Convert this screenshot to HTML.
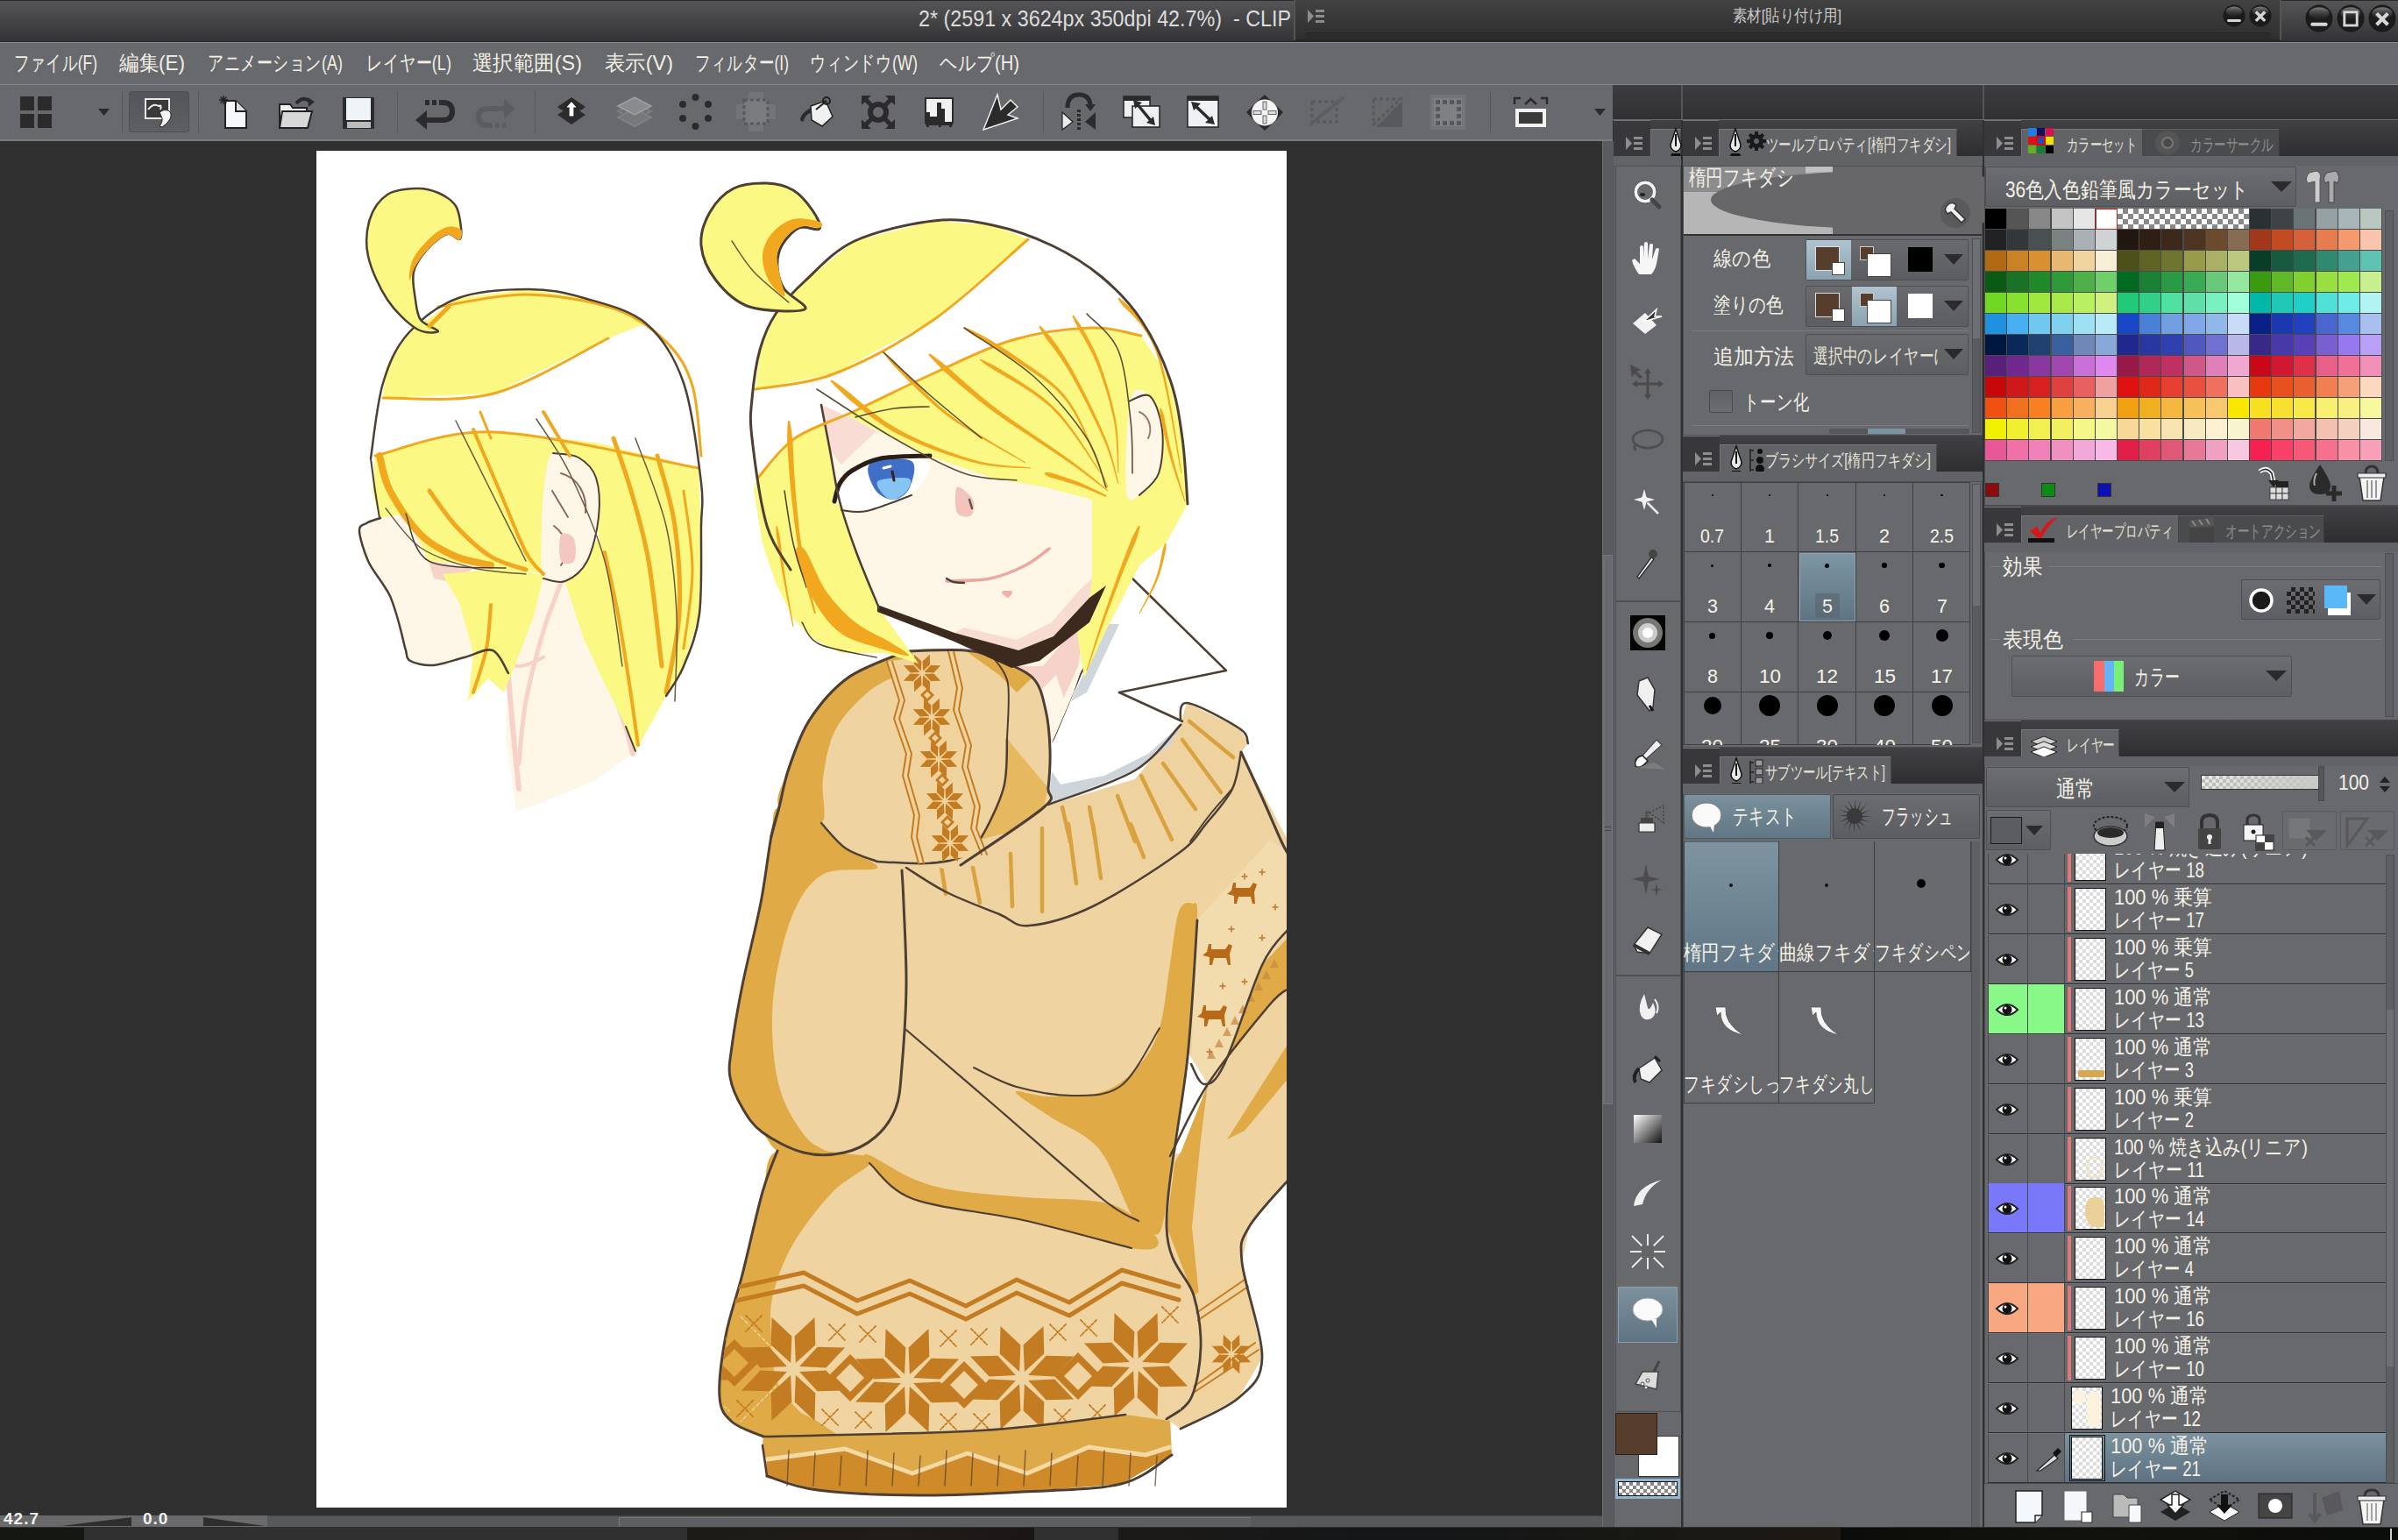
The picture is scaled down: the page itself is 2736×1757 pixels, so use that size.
<!DOCTYPE html>
<html><head><meta charset="utf-8"><style>
html,body{margin:0;padding:0;}
body{width:2736px;height:1757px;overflow:hidden;position:relative;background:#303030;font-family:"Liberation Sans", sans-serif;}
div{box-sizing:border-box;}
</style></head><body>
<div style="position:absolute;left:0px;top:0px;width:2736px;height:48px;background:linear-gradient(#555558,#333336);border-top:1px solid #2a2a2c;border-bottom:1px solid #242426;box-sizing:border-box;"></div><div class="fw" style="position:absolute;left:1048px;top:6px;width:425px;font-size:25px;line-height:30px;color:#dcdcdc;white-space:nowrap;">2* (2591 x 3624px 350dpi 42.7%)&nbsp; - CLIP</div><div style="position:absolute;left:1476px;top:0px;width:1127px;height:47px;background:linear-gradient(#424243,#2e2e2f);border-left:2px solid #555;border-right:2px solid #555;border-bottom:2px solid #262626;box-sizing:border-box;"></div><div style="position:absolute;left:1490px;top:35px;width:1100px;height:10px;background:#2b2b2c;border-top:1px solid #3a3a3a;"></div><svg style="position:absolute;left:1492px;top:10px" width="20" height="18"><path d="M0 1L7 8.5L0 16Z" fill="#8c8c8c"/><rect x="9" y="1" width="10" height="3" fill="#8c8c8c"/><rect x="9" y="7" width="10" height="3" fill="#8c8c8c"/><rect x="9" y="13" width="10" height="3" fill="#8c8c8c"/></svg><div class="fw" style="position:absolute;left:1977px;top:7px;width:124px;font-size:19px;line-height:22px;color:#c9c9c9;white-space:nowrap;">素材[貼り付け用]</div><svg style="position:absolute;left:2536px;top:5px" width="26" height="26"><defs><linearGradient id="g2549" x1="0" y1="0" x2="0" y2="1"><stop offset="0" stop-color="#8a8a8a" stop-opacity="0.9"/><stop offset="1" stop-color="#3a3a3a" stop-opacity="0.2"/></linearGradient></defs><circle cx="13" cy="13" r="12.5" fill="#1c1a1a"/><ellipse cx="13" cy="8.06" rx="9.36" ry="5.46" fill="url(#g2549)"/><rect x="5.2" y="16.900000000000002" width="15.6" height="3.12" rx="1.3" fill="#d6d6d6"/></svg><svg style="position:absolute;left:2566px;top:5px" width="26" height="26"><defs><linearGradient id="g2579" x1="0" y1="0" x2="0" y2="1"><stop offset="0" stop-color="#8a8a8a" stop-opacity="0.9"/><stop offset="1" stop-color="#3a3a3a" stop-opacity="0.2"/></linearGradient></defs><circle cx="13" cy="13" r="12.5" fill="#1c1a1a"/><ellipse cx="13" cy="8.06" rx="9.36" ry="5.46" fill="url(#g2579)"/><path d="M7.8 8.450000000000001L18.2 18.849999999999998M18.2 8.450000000000001L7.8 18.849999999999998" stroke="#d6d6d6" stroke-width="3.38"/></svg><div style="position:absolute;left:2603px;top:0px;width:133px;height:48px;background:linear-gradient(#555558,#333336);border-top:1px solid #2a2a2c;border-bottom:1px solid #242426;box-sizing:border-box;"></div><svg style="position:absolute;left:2630px;top:5px" width="32" height="32"><defs><linearGradient id="g2646" x1="0" y1="0" x2="0" y2="1"><stop offset="0" stop-color="#8a8a8a" stop-opacity="0.9"/><stop offset="1" stop-color="#3a3a3a" stop-opacity="0.2"/></linearGradient></defs><circle cx="16" cy="16" r="15.5" fill="#1c1a1a"/><ellipse cx="16" cy="9.92" rx="11.52" ry="6.72" fill="url(#g2646)"/><rect x="6.4" y="20.8" width="19.2" height="3.84" rx="1.6" fill="#d6d6d6"/></svg><svg style="position:absolute;left:2666px;top:5px" width="32" height="32"><defs><linearGradient id="g2682" x1="0" y1="0" x2="0" y2="1"><stop offset="0" stop-color="#8a8a8a" stop-opacity="0.9"/><stop offset="1" stop-color="#3a3a3a" stop-opacity="0.2"/></linearGradient></defs><circle cx="16" cy="16" r="15.5" fill="#1c1a1a"/><ellipse cx="16" cy="9.92" rx="11.52" ry="6.72" fill="url(#g2682)"/><rect x="8.8" y="8.8" width="14.4" height="15.2" fill="none" stroke="#d6d6d6" stroke-width="2.88"/></svg><svg style="position:absolute;left:2702px;top:5px" width="32" height="32"><defs><linearGradient id="g2718" x1="0" y1="0" x2="0" y2="1"><stop offset="0" stop-color="#8a8a8a" stop-opacity="0.9"/><stop offset="1" stop-color="#3a3a3a" stop-opacity="0.2"/></linearGradient></defs><circle cx="16" cy="16" r="15.5" fill="#1c1a1a"/><ellipse cx="16" cy="9.92" rx="11.52" ry="6.72" fill="url(#g2718)"/><path d="M9.6 10.4L22.4 23.2M22.4 10.4L9.6 23.2" stroke="#d6d6d6" stroke-width="4.16"/></svg><div style="position:absolute;left:0px;top:48px;width:2736px;height:1px;background:#8e8e91;"></div><div style="position:absolute;left:0px;top:49px;width:2736px;height:47px;background:#68696c;"></div><div class="fw" style="position:absolute;left:16px;top:58px;width:95px;font-size:24px;line-height:28px;color:#f2efe6;white-space:nowrap;">ファイル(F)</div><div class="fw" style="position:absolute;left:136px;top:58px;width:75px;font-size:24px;line-height:28px;color:#f2efe6;white-space:nowrap;">編集(E)</div><div class="fw" style="position:absolute;left:237px;top:58px;width:154px;font-size:24px;line-height:28px;color:#f2efe6;white-space:nowrap;">アニメーション(A)</div><div class="fw" style="position:absolute;left:418px;top:58px;width:97px;font-size:24px;line-height:28px;color:#f2efe6;white-space:nowrap;">レイヤー(L)</div><div class="fw" style="position:absolute;left:539px;top:58px;width:125px;font-size:24px;line-height:28px;color:#f2efe6;white-space:nowrap;">選択範囲(S)</div><div class="fw" style="position:absolute;left:690px;top:58px;width:78px;font-size:24px;line-height:28px;color:#f2efe6;white-space:nowrap;">表示(V)</div><div class="fw" style="position:absolute;left:793px;top:58px;width:107px;font-size:24px;line-height:28px;color:#f2efe6;white-space:nowrap;">フィルター(I)</div><div class="fw" style="position:absolute;left:924px;top:58px;width:123px;font-size:24px;line-height:28px;color:#f2efe6;white-space:nowrap;">ウィンドウ(W)</div><div class="fw" style="position:absolute;left:1072px;top:58px;width:91px;font-size:24px;line-height:28px;color:#f2efe6;white-space:nowrap;">ヘルプ(H)</div><div style="position:absolute;left:0px;top:96px;width:2736px;height:1px;background:#86868a;"></div><div style="position:absolute;left:0px;top:97px;width:1840px;height:64px;background:#68696c;border-bottom:2px solid #7a7b7e;box-sizing:border-box;"></div><svg style="position:absolute;left:23px;top:110px;overflow:visible" width="37" height="37" viewBox="0 0 37 37"><rect x="0" y="0" width="16" height="16" fill="#2b2b2c"/><rect x="20" y="0" width="16" height="16" fill="#2b2b2c"/><rect x="0" y="20" width="16" height="16" fill="#2b2b2c"/><rect x="20" y="20" width="16" height="16" fill="#2b2b2c"/></svg><svg style="position:absolute;left:112px;top:124px;overflow:visible" width="14" height="8" viewBox="0 0 14 8"><path d="M0 0H13L6.5 8Z" fill="#2b2b2c"/></svg><div style="position:absolute;left:139px;top:105px;width:1px;height:46px;background:#58595b"></div><div style="position:absolute;left:147px;top:104px;width:69px;height:47px;background:linear-gradient(#545558,#5e5f62);border:1px solid #4e4f52;border-radius:3px"></div><svg style="position:absolute;left:165px;top:111px;overflow:visible" width="36" height="36" viewBox="0 0 36 36"><rect x="1" y="2" width="27" height="22" fill="#3a3a3a" stroke="#e8e8e8" stroke-width="2"/><path d="M4 14Q10 6 16 10Q20 8 18 14" stroke="#eee" stroke-width="2" fill="none"/><path d="M17 17Q22 13 27 15Q32 18 29 25Q25 31 20 34L17 33Q21 28 20 24Z" fill="#f4f4f4" stroke="#222" stroke-width="1"/></svg><div style="position:absolute;left:226px;top:105px;width:1px;height:46px;background:#58595b"></div><svg style="position:absolute;left:250px;top:109px;overflow:visible" width="32" height="38" viewBox="0 0 32 38"><path d="M7 6H19L31 18V37H7Z" fill="#f6f8fa" stroke="#222" stroke-width="2"/><path d="M19 6V18H31" fill="#ddd" stroke="#222" stroke-width="2"/><path d="M5 0V10M0 5H10M1.5 1.5L8.5 8.5M8.5 1.5L1.5 8.5" stroke="#222" stroke-width="1.4"/></svg><svg style="position:absolute;left:318px;top:110px;overflow:visible" width="42" height="38" viewBox="0 0 42 38"><path d="M1 9H13L16 13H32V36H1Z" fill="#f0f0f0" stroke="#222" stroke-width="2"/><path d="M4 17H38L33 36H1Z" fill="#d8d8d8" stroke="#222" stroke-width="2"/><path d="M20 8Q28 -1 36 6" stroke="#2b2b2c" stroke-width="4" fill="none"/><path d="M33 1L41 6L34 12Z" fill="#2b2b2c"/></svg><svg style="position:absolute;left:390px;top:110px;overflow:visible" width="38" height="38" viewBox="0 0 38 38"><rect x="1" y="1" width="36" height="36" fill="#2b2b2c"/><rect x="5" y="2" width="28" height="25" fill="#eef4f8"/><rect x="6" y="29" width="27" height="7" fill="#bbb"/></svg><div style="position:absolute;left:453px;top:105px;width:1px;height:46px;background:#58595b"></div><svg style="position:absolute;left:474px;top:113px;overflow:visible" width="44" height="36" viewBox="0 0 44 36"><path d="M11 4H16M19 4H24M27 4H31" stroke="#2b2b2c" stroke-width="6"/><path d="M31 4Q42 4 42 14Q42 24 31 24H11" stroke="#2b2b2c" stroke-width="6" fill="none"/><path d="M0 24L13 13V35Z" fill="#2b2b2c"/></svg><svg style="position:absolute;left:544px;top:113px;overflow:visible" width="44" height="36" viewBox="0 0 44 36"><path d="M13 30H18M21 30H26M29 30H33" stroke="#5b5c5f" stroke-width="6"/><path d="M33 11H13Q2 11 2 20Q2 30 13 30" stroke="#5b5c5f" stroke-width="6" fill="none"/><path d="M44 11L31 0V22Z" fill="#5b5c5f"/></svg><div style="position:absolute;left:610px;top:105px;width:1px;height:46px;background:#58595b"></div><svg style="position:absolute;left:636px;top:111px;overflow:visible" width="32" height="31" viewBox="0 0 32 31"><path d="M0 11L16 0L32 11L16 22Z" fill="#2b2b2c"/><path d="M0 20L16 9L32 20L16 31Z" fill="#2b2b2c"/><path d="M16 4L23 12H19V22H13V12H9Z" fill="#fff" stroke="#222" stroke-width="1.2"/></svg><svg style="position:absolute;left:702px;top:111px;overflow:visible" width="43" height="37" viewBox="0 0 43 37"><path d="M3 16L22 6L41 16L22 26Z" fill="#6f7073" stroke="#7d7e80" stroke-width="2"/><path d="M3 23L22 13L41 23L22 33Z" fill="#77787b" stroke="#808183" stroke-width="2"/><path d="M3 10L22 0L41 10L22 20Z" fill="#8a8b8e" stroke="#a0a0a2" stroke-width="1.5"/></svg><svg style="position:absolute;left:775px;top:107px;overflow:visible" width="37" height="41" viewBox="0 0 37 41"><circle cx="18.5" cy="4" r="4" fill="#2b2b2c"/><circle cx="18.5" cy="37" r="4" fill="#2b2b2c"/><circle cx="4" cy="12" r="4" fill="#2b2b2c"/><circle cx="33" cy="12" r="4" fill="#2b2b2c"/><circle cx="4" cy="28" r="4" fill="#2b2b2c"/><circle cx="33" cy="28" r="4" fill="#2b2b2c"/></svg><svg style="position:absolute;left:840px;top:105px;overflow:visible" width="45" height="45" viewBox="0 0 45 45"><path d="M14 0H31V14H45V31H31V45H14V31H0V14H14Z" fill="#737477"/><rect x="9" y="9" width="27" height="27" fill="#7a7b7e" stroke="#58595b" stroke-width="3" stroke-dasharray="4 3"/></svg><svg style="position:absolute;left:912px;top:111px;overflow:visible" width="39" height="33" viewBox="0 0 39 33"><path d="M13 10L30 4L38 22L26 33L14 26Z" fill="#f0f0f0" stroke="#222" stroke-width="1.5"/><path d="M13 12Q2 18 1 25Q2 29 5 27Q6 20 14 17Z" fill="#2b2b2c"/><circle cx="31" cy="4" r="4" fill="none" stroke="#222" stroke-width="2"/><path d="M19 14L30 5" stroke="#222" stroke-width="2"/></svg><svg style="position:absolute;left:983px;top:109px;overflow:visible" width="38" height="38" viewBox="0 0 38 38"><circle cx="19" cy="19" r="9" fill="none" stroke="#2b2b2c" stroke-width="6"/><path d="M2 2L14 14M36 2L24 14M2 36L14 24M36 36L24 24" stroke="#2b2b2c" stroke-width="5"/><path d="M0 0H11L0 11Z M38 0H27L38 11Z M0 38H11L0 27Z M38 38H27L38 27Z" fill="#2b2b2c"/></svg><svg style="position:absolute;left:1055px;top:111px;overflow:visible" width="33" height="34" viewBox="0 0 33 34"><rect x="1" y="1" width="31" height="28" fill="#f2f2f2" stroke="#2b2b2c" stroke-width="2"/><path d="M2 29V17H6V22H14V6H19V13H23V29Z" fill="#2b2b2c"/><path d="M24 29V1H32V29Z" fill="none"/><rect x="1" y="29" width="31" height="3" fill="#2b2b2c"/><rect x="2" y="31" width="3" height="3" fill="#2b2b2c"/><rect x="16" y="31" width="3" height="3" fill="#2b2b2c"/><rect x="28" y="31" width="3" height="3" fill="#2b2b2c"/></svg><svg style="position:absolute;left:1121px;top:108px;overflow:visible" width="41" height="40" viewBox="0 0 41 40"><path d="M1 40L17 0L21 17L32 6L40 14L29 23L40 27Z" fill="#2b2b2c" stroke="#eee" stroke-width="1.5"/></svg><div style="position:absolute;left:1190px;top:105px;width:1px;height:46px;background:#58595b"></div><svg style="position:absolute;left:1212px;top:107px;overflow:visible" width="39" height="41" viewBox="0 0 39 41"><path d="M6 16Q6 1 19 1Q31 1 32 13" stroke="#2b2b2c" stroke-width="5" fill="none"/><path d="M26 12H38L32 20Z" fill="#2b2b2c"/><path d="M0 21L12 32L0 41Z" fill="#e8ecee" stroke="#222" stroke-width="1.2"/><path d="M38 21L26 32L38 41Z" fill="#2b2b2c"/><path d="M19 18V41" stroke="#2b2b2c" stroke-width="4" stroke-dasharray="3 2"/></svg><svg style="position:absolute;left:1281px;top:109px;overflow:visible" width="43" height="37" viewBox="0 0 43 37"><rect x="1" y="1" width="30" height="24" fill="#eef1f3" stroke="#222" stroke-width="1.5"/><rect x="1" y="1" width="30" height="5" fill="#2b2b2c"/><rect x="11" y="12" width="31" height="24" fill="#eef1f3" stroke="#222" stroke-width="1.5"/><path d="M15 8L34 31" stroke="#2b2b2c" stroke-width="3.5"/><path d="M12 5L22 8L14 15Z M37 34L27 31L35 24Z" fill="#2b2b2c"/></svg><svg style="position:absolute;left:1354px;top:109px;overflow:visible" width="37" height="37" viewBox="0 0 37 37"><rect x="1" y="1" width="35" height="35" fill="#eef2f4" stroke="#222" stroke-width="1.5"/><rect x="1" y="1" width="35" height="5" fill="#2b2b2c"/><path d="M8 10L29 30" stroke="#2b2b2c" stroke-width="3.5"/><path d="M5 7L16 9L8 17Z M32 33L21 31L29 23Z" fill="#2b2b2c"/></svg><svg style="position:absolute;left:1422px;top:108px;overflow:visible" width="42" height="41" viewBox="0 0 42 41"><path d="M21 0L29 8L42 20L34 29L21 41L8 29L0 20L12 8Z" fill="#2b2b2c"/><circle cx="21" cy="20.5" r="15" fill="#f6f6f6"/><rect x="19" y="8" width="4" height="9" fill="#ddd" stroke="#666" stroke-width="1"/><rect x="19" y="24" width="4" height="9" fill="#ddd" stroke="#666" stroke-width="1"/><rect x="8" y="18.5" width="9" height="4" fill="#ddd" stroke="#666" stroke-width="1"/><rect x="25" y="18.5" width="9" height="4" fill="#ddd" stroke="#666" stroke-width="1"/></svg><svg style="position:absolute;left:1493px;top:111px;overflow:visible" width="40" height="33" viewBox="0 0 40 33"><rect x="4" y="5" width="28" height="23" fill="none" stroke="#58595b" stroke-width="3" stroke-dasharray="4 3"/><path d="M1 32L40 0" stroke="#5d5e61" stroke-width="4"/></svg><svg style="position:absolute;left:1565px;top:111px;overflow:visible" width="35" height="34" viewBox="0 0 35 34"><path d="M35 4V34H5Z" fill="#58595b"/><path d="M2 2H33L2 31Z" fill="none" stroke="#58595b" stroke-width="3" stroke-dasharray="4 3"/></svg><svg style="position:absolute;left:1632px;top:108px;overflow:visible" width="40" height="40" viewBox="0 0 40 40"><rect x="0" y="0" width="40" height="40" fill="#747578"/><rect x="4" y="4" width="32" height="32" fill="#7f8083"/><g fill="#58595b"><rect x="6" y="6" width="5" height="5"/><rect x="14" y="6" width="5" height="5"/><rect x="22" y="6" width="5" height="5"/><rect x="30" y="6" width="5" height="5"/><rect x="6" y="14" width="5" height="5"/><rect x="30" y="14" width="5" height="5"/><rect x="6" y="22" width="5" height="5"/><rect x="30" y="22" width="5" height="5"/><rect x="6" y="30" width="5" height="5"/><rect x="14" y="30" width="5" height="5"/><rect x="22" y="30" width="5" height="5"/><rect x="30" y="30" width="5" height="5"/></g></svg><div style="position:absolute;left:1700px;top:105px;width:1px;height:46px;background:#58595b"></div><svg style="position:absolute;left:1727px;top:111px;overflow:visible" width="39" height="35" viewBox="0 0 39 35"><path d="M1 8V1H8M31 1H38V8M13 8L19.5 2L26 8" stroke="#2b2b2c" stroke-width="2.5" fill="none"/><rect x="2" y="13" width="35" height="21" fill="#f2f2f2"/><rect x="6" y="17" width="27" height="13" fill="#3a3a3a"/></svg><svg style="position:absolute;left:1819px;top:124px;overflow:visible" width="14" height="8" viewBox="0 0 14 8"><path d="M0 0H13L6.5 8Z" fill="#2b2b2c"/></svg><div style="position:absolute;left:1840px;top:97px;width:896px;height:40px;background:linear-gradient(#3d3d3f,#303032);"></div><div style="position:absolute;left:1918px;top:97px;width:2px;height:40px;background:#555;"></div><div style="position:absolute;left:2262px;top:97px;width:2px;height:40px;background:#555;"></div><div style="position:absolute;left:1840px;top:136px;width:896px;height:1px;background:#6a6a6c;"></div><div style="position:absolute;left:0px;top:161px;width:1828px;height:1568px;background:#303030;"></div><div style="position:absolute;left:361px;top:172px;width:1107px;height:1548px;background:#ffffff;"></div><svg style="position:absolute;left:0;top:0" width="2736" height="1757" viewBox="0 0 2736 1757"><defs><clipPath id="cv"><rect x="361" y="172" width="1107" height="1548"/></clipPath></defs><g clip-path="url(#cv)"><path d="M1291.0,659.0 L1399.0,765.0 L1277.0,790.0 L1233.0,769.0 L1200.0,848.0Z" fill="#ffffff" stroke="none" stroke-width="0" stroke-linecap="round" stroke-linejoin="round" /><path d="M1291.0,659.0 L1399.0,765.0 L1277.0,790.0" fill="none" stroke="#4e3f35" stroke-width="2.5" stroke-linecap="round" stroke-linejoin="round" /><path d="M1291.0,659.0 L1233.0,769.0 L1200.0,848.0" fill="none" stroke="#4e3f35" stroke-width="2" stroke-linecap="round" stroke-linejoin="round" /><path d="M1262.0,712.0 L1277.0,712.0 L1240.0,790.0 L1222.0,800.0Z" fill="#cfd6dc" stroke="none" stroke-width="0" stroke-linecap="round" stroke-linejoin="round" /><path d="M1052.0,743.0 L1157.0,757.0 L1204.0,730.0 L1243.0,676.0 L1262.0,700.0 L1240.0,745.0 L1225.0,790.0 L1200.0,848.0 L1198.0,855.0 L1193.0,810.0 L1178.0,773.0 L1134.0,751.0Z" fill="#fef6e7" stroke="none" stroke-width="0" stroke-linecap="round" stroke-linejoin="round" /><path d="M1160.0,760.0 L1190.0,760.0 L1215.0,730.0 L1240.0,700.0 L1230.0,760.0 L1212.0,800.0 L1200.0,848.0 L1185.0,800.0Z" fill="#f7d2c8" stroke="none" stroke-width="0" stroke-linecap="round" stroke-linejoin="round" /><path d="M1185.0,790.0 L1205.0,770.0 L1215.0,800.0 L1200.0,845.0Z" fill="#fef6e7" stroke="none" stroke-width="0" stroke-linecap="round" stroke-linejoin="round" /><path d="M1366.0,1050.0 L1449.0,959.0 L1470.0,972.0 L1470.0,1346.0 L1425.0,1400.0 L1417.0,1440.0 L1440.0,1549.0 L1413.0,1595.0 L1347.0,1630.0 L1331.0,1619.0 L1359.0,1595.0 L1370.0,1537.0 L1362.0,1478.0 L1331.0,1400.0 L1355.0,1206.0Z" fill="#efd4a1" stroke="none" stroke-width="0" stroke-linecap="round" stroke-linejoin="round" /><path d="M1347.0,1315.0 L1378.0,1237.0 L1370.0,1300.0 L1360.0,1400.0 L1368.0,1478.0 L1352.0,1480.0 L1331.0,1400.0 L1338.0,1330.0Z" fill="#e0aa46" stroke="none" stroke-width="0" stroke-linecap="round" stroke-linejoin="round" /><path d="M1397.0,1214.0 L1440.0,1101.0 L1470.0,1069.0 L1470.0,1128.0 L1448.0,1147.0 L1378.0,1237.0Z" fill="#e0aa46" stroke="none" stroke-width="0" stroke-linecap="round" stroke-linejoin="round" /><path d="M1470.0,1190.0 L1470.0,1230.0 L1420.0,1290.0 L1400.0,1300.0Z" fill="#e0aa46" stroke="none" stroke-width="0" stroke-linecap="round" stroke-linejoin="round" /><path d="M1366.0,1050.0 L1449.0,959.0 L1470.0,972.0 L1470.0,1060.0 L1440.0,1101.0 L1397.0,1214.0 L1374.0,1237.0 L1359.0,1214.0Z" fill="#f2dcae" stroke="none" stroke-width="0" stroke-linecap="round" stroke-linejoin="round" /><path d="M1377.0,1208.0 L1382.0,1198.0 L1387.0,1208.0Z" fill="#c98a45" stroke="none" stroke-width="0" stroke-linecap="round" stroke-linejoin="round" opacity="0.75"/><path d="M1386.0,1195.0 L1391.0,1185.0 L1396.0,1195.0Z" fill="#c98a45" stroke="none" stroke-width="0" stroke-linecap="round" stroke-linejoin="round" opacity="0.75"/><path d="M1395.0,1182.0 L1400.0,1172.0 L1405.0,1182.0Z" fill="#c98a45" stroke="none" stroke-width="0" stroke-linecap="round" stroke-linejoin="round" opacity="0.75"/><path d="M1404.0,1169.0 L1409.0,1159.0 L1414.0,1169.0Z" fill="#c98a45" stroke="none" stroke-width="0" stroke-linecap="round" stroke-linejoin="round" opacity="0.75"/><path d="M1413.0,1156.0 L1418.0,1146.0 L1423.0,1156.0Z" fill="#c98a45" stroke="none" stroke-width="0" stroke-linecap="round" stroke-linejoin="round" opacity="0.75"/><path d="M1422.0,1143.0 L1427.0,1133.0 L1432.0,1143.0Z" fill="#c98a45" stroke="none" stroke-width="0" stroke-linecap="round" stroke-linejoin="round" opacity="0.75"/><path d="M1431.0,1130.0 L1436.0,1120.0 L1441.0,1130.0Z" fill="#c98a45" stroke="none" stroke-width="0" stroke-linecap="round" stroke-linejoin="round" opacity="0.75"/><path d="M1440.0,1117.0 L1445.0,1107.0 L1450.0,1117.0Z" fill="#c98a45" stroke="none" stroke-width="0" stroke-linecap="round" stroke-linejoin="round" opacity="0.75"/><path d="M1449.0,1104.0 L1454.0,1094.0 L1459.0,1104.0Z" fill="#c98a45" stroke="none" stroke-width="0" stroke-linecap="round" stroke-linejoin="round" opacity="0.75"/><path d="M1400,1020 l5,-4 l2,-9 l3,0 l0,6 l16,0 l4,-6 l4,2 l-3,9 l1,13 l-3,0 l-2,-8 l-14,0 l-2,8 l-3,0 l0,-9 Z" fill="#b86a18" stroke="none" stroke-width="0" stroke-linecap="round" stroke-linejoin="round" /><path d="M1372,1090 l5,-4 l2,-9 l3,0 l0,6 l16,0 l4,-6 l4,2 l-3,9 l1,13 l-3,0 l-2,-8 l-14,0 l-2,8 l-3,0 l0,-9 Z" fill="#b86a18" stroke="none" stroke-width="0" stroke-linecap="round" stroke-linejoin="round" /><path d="M1366,1160 l5,-4 l2,-9 l3,0 l0,6 l16,0 l4,-6 l4,2 l-3,9 l1,13 l-3,0 l-2,-8 l-14,0 l-2,8 l-3,0 l0,-9 Z" fill="#b86a18" stroke="none" stroke-width="0" stroke-linecap="round" stroke-linejoin="round" /><path d="M1437,995 h6 M1440,992 v6" fill="none" stroke="#c07830" stroke-width="1.6" stroke-linecap="round" stroke-linejoin="round" /><path d="M1452,1035 h6 M1455,1032 v6" fill="none" stroke="#c07830" stroke-width="1.6" stroke-linecap="round" stroke-linejoin="round" /><path d="M1402,1060 h6 M1405,1057 v6" fill="none" stroke="#c07830" stroke-width="1.6" stroke-linecap="round" stroke-linejoin="round" /><path d="M1437,1070 h6 M1440,1067 v6" fill="none" stroke="#c07830" stroke-width="1.6" stroke-linecap="round" stroke-linejoin="round" /><path d="M1392,1125 h6 M1395,1122 v6" fill="none" stroke="#c07830" stroke-width="1.6" stroke-linecap="round" stroke-linejoin="round" /><path d="M1417,1120 h6 M1420,1117 v6" fill="none" stroke="#c07830" stroke-width="1.6" stroke-linecap="round" stroke-linejoin="round" /><path d="M1377,1200 h6 M1380,1197 v6" fill="none" stroke="#c07830" stroke-width="1.6" stroke-linecap="round" stroke-linejoin="round" /><path d="M1417,1000 h6 M1420,997 v6" fill="none" stroke="#c07830" stroke-width="1.6" stroke-linecap="round" stroke-linejoin="round" /><path d="M1355.0,1200.0 L1378.0,1237.0 L1347.0,1315.0 L1335.0,1319.0 L1347.0,1245.0Z" fill="#ffffff" stroke="none" stroke-width="0" stroke-linecap="round" stroke-linejoin="round" /><path d="M1362.0,1478.0 L1417.0,1440.0 L1440.0,1549.0 L1413.0,1595.0 L1359.0,1595.0 L1370.0,1537.0Z" fill="#efd29c" stroke="none" stroke-width="0" stroke-linecap="round" stroke-linejoin="round" /><path d="M1362,1500 L1420,1460 M1364,1508 L1424,1468 M1360,1590 L1436,1540 M1362,1582 L1432,1532" fill="none" stroke="#c47c22" stroke-width="2" stroke-linecap="round" stroke-linejoin="round" /><path d="M1034.0,743.0 L968.0,773.0 L924.0,821.0 L900.0,877.0 L889.0,921.0 L880.0,954.0 L868.0,1030.0 L847.0,1124.0 L835.0,1194.0 L833.0,1229.0 L847.0,1264.0 L870.0,1292.0 L887.0,1313.0 L870.0,1360.0 L847.0,1454.0 L828.0,1524.0 L821.0,1594.0 L835.0,1622.0 L871.0,1639.0 L870.0,1649.0 L875.0,1684.0 L933.0,1700.0 L1050.0,1706.0 L1167.0,1702.0 L1279.0,1693.0 L1337.0,1660.0 L1335.0,1621.0 L1359.0,1595.0 L1370.0,1537.0 L1362.0,1478.0 L1331.0,1400.0 L1355.0,1206.0 L1366.0,1050.0 L1449.0,959.0 L1470.0,972.0 L1470.0,960.0 L1416.0,858.0 L1424.0,848.0 L1414.0,831.0 L1354.0,802.0 L1347.0,827.0 L1295.0,889.0 L1192.0,920.0 L1196.0,899.0 L1198.0,855.0 L1193.0,810.0 L1178.0,773.0 L1134.0,751.0 L1101.0,742.0Z" fill="#efd4a1" stroke="none" stroke-width="0" stroke-linecap="round" stroke-linejoin="round" /><path d="M889.0,921.0 C879.5,923.3 883.5,935.8 880.0,954.0 C876.5,972.2 873.5,1001.7 868.0,1030.0 C862.5,1058.3 852.5,1096.7 847.0,1124.0 C841.5,1151.3 837.3,1176.5 835.0,1194.0 C832.7,1211.5 831.0,1217.3 833.0,1229.0 C835.0,1240.7 840.8,1253.5 847.0,1264.0 C853.2,1274.5 863.3,1283.8 870.0,1292.0 C876.7,1300.2 879.2,1308.7 887.0,1313.0 C894.8,1317.3 906.5,1317.2 917.0,1318.0 C927.5,1318.8 949.3,1321.2 950.0,1318.0 C950.7,1314.8 930.5,1310.0 921.0,1299.0 C911.5,1288.0 899.5,1269.5 893.0,1252.0 C886.5,1234.5 883.5,1215.3 882.0,1194.0 C880.5,1172.7 880.2,1149.3 884.0,1124.0 C887.8,1098.7 895.7,1063.2 905.0,1042.0 C914.3,1020.8 924.0,1005.7 940.0,997.0 C956.0,988.3 997.7,995.3 1001.0,990.0 C1004.3,984.7 970.7,973.3 960.0,965.0 C949.3,956.7 948.8,947.3 937.0,940.0 C925.2,932.7 898.5,918.7 889.0,921.0Z" fill="#e0aa46" stroke="none" stroke-width="0" stroke-linecap="round" stroke-linejoin="round" /><path d="M887.0,1313.0 C871.5,1320.3 876.7,1336.5 870.0,1360.0 C863.3,1383.5 854.0,1426.7 847.0,1454.0 C840.0,1481.3 832.3,1500.7 828.0,1524.0 C823.7,1547.3 819.8,1577.7 821.0,1594.0 C822.2,1610.3 826.7,1614.5 835.0,1622.0 C843.3,1629.5 854.3,1636.0 871.0,1639.0 C887.7,1642.0 932.0,1649.5 935.0,1640.0 C938.0,1630.5 898.2,1601.3 889.0,1582.0 C879.8,1562.7 881.2,1541.5 880.0,1524.0 C878.8,1506.5 877.8,1494.5 882.0,1477.0 C886.2,1459.5 893.7,1438.5 905.0,1419.0 C916.3,1399.5 935.0,1375.7 950.0,1360.0 C965.0,1344.3 992.8,1332.3 995.0,1325.0 C997.2,1317.7 981.0,1318.0 963.0,1316.0 C945.0,1314.0 902.5,1305.7 887.0,1313.0Z" fill="#e0aa46" stroke="none" stroke-width="0" stroke-linecap="round" stroke-linejoin="round" /><path d="M1159.0,1246.0 C1159.0,1242.2 1181.2,1251.2 1198.0,1251.0 C1214.8,1250.8 1243.0,1251.0 1260.0,1245.0 C1277.0,1239.0 1289.5,1227.0 1300.0,1215.0 C1310.5,1203.0 1317.2,1192.2 1323.0,1173.0 C1328.8,1153.8 1331.3,1122.2 1335.0,1100.0 C1338.7,1077.8 1340.8,1051.5 1345.0,1040.0 C1349.2,1028.5 1356.5,1029.3 1360.0,1031.0 C1363.5,1032.7 1366.8,1020.8 1366.0,1050.0 C1365.2,1079.2 1359.7,1162.5 1355.0,1206.0 C1350.3,1249.5 1342.8,1278.8 1338.0,1311.0 C1333.2,1343.2 1330.7,1383.3 1326.0,1399.0 C1321.3,1414.7 1315.8,1407.2 1310.0,1405.0 C1304.2,1402.8 1300.3,1401.7 1291.0,1386.0 C1281.7,1370.3 1269.5,1329.7 1254.0,1311.0 C1238.5,1292.3 1213.8,1284.8 1198.0,1274.0 C1182.2,1263.2 1159.0,1249.8 1159.0,1246.0Z" fill="#e0aa46" stroke="none" stroke-width="0" stroke-linecap="round" stroke-linejoin="round" /><path d="M992.0,1318.0 C1000.3,1321.0 1025.8,1338.3 1042.0,1345.0 C1058.2,1351.7 1067.7,1354.5 1089.0,1358.0 C1110.3,1361.5 1142.5,1363.8 1170.0,1366.0 C1197.5,1368.2 1233.8,1367.7 1254.0,1371.0 C1274.2,1374.3 1279.7,1378.3 1291.0,1386.0 C1302.3,1393.7 1322.0,1410.7 1322.0,1417.0 C1322.0,1423.3 1316.8,1428.2 1291.0,1424.0 C1265.2,1419.8 1208.5,1401.3 1167.0,1392.0 C1125.5,1382.7 1071.2,1378.8 1042.0,1368.0 C1012.8,1357.2 1000.3,1335.3 992.0,1327.0 C983.7,1318.7 983.7,1315.0 992.0,1318.0Z" fill="#e0aa46" stroke="none" stroke-width="0" stroke-linecap="round" stroke-linejoin="round" /><path d="M828.0,1560.0 L840.0,1600.0 L871.0,1639.0 L960.0,1640.0 L930.0,1620.0 L890.0,1600.0 L860.0,1560.0Z" fill="#e0aa46" stroke="none" stroke-width="0" stroke-linecap="round" stroke-linejoin="round" /><path d="M1034.0,743.0 C1023.0,748.0 986.3,760.0 968.0,773.0 C949.7,786.0 935.3,803.7 924.0,821.0 C912.7,838.3 905.8,860.3 900.0,877.0 C894.2,893.7 892.3,908.2 889.0,921.0 C885.7,933.8 883.5,935.8 880.0,954.0 C876.5,972.2 873.5,1001.7 868.0,1030.0 C862.5,1058.3 852.5,1096.7 847.0,1124.0 C841.5,1151.3 837.3,1176.5 835.0,1194.0 C832.7,1211.5 831.0,1217.3 833.0,1229.0 C835.0,1240.7 840.8,1253.5 847.0,1264.0 C853.2,1274.5 858.3,1283.5 870.0,1292.0 C881.7,1300.5 901.5,1311.2 917.0,1315.0 C932.5,1318.8 949.3,1318.0 963.0,1315.0 C976.7,1312.0 989.2,1305.5 999.0,1297.0 C1008.8,1288.5 1017.0,1277.3 1022.0,1264.0 C1027.0,1250.7 1027.0,1240.3 1029.0,1217.0 C1031.0,1193.7 1033.7,1155.2 1034.0,1124.0 C1034.3,1092.8 1031.8,1051.8 1031.0,1030.0 C1030.2,1008.2 1029.3,999.2 1029.0,993.0" fill="none" stroke="#4e3f35" stroke-width="3" stroke-linecap="round" stroke-linejoin="round" /><path d="M887.0,1313.0 C884.2,1320.8 876.7,1336.5 870.0,1360.0 C863.3,1383.5 854.0,1426.7 847.0,1454.0 C840.0,1481.3 832.3,1500.7 828.0,1524.0 C823.7,1547.3 819.8,1577.7 821.0,1594.0 C822.2,1610.3 826.7,1614.5 835.0,1622.0 C843.3,1629.5 865.0,1636.2 871.0,1639.0" fill="none" stroke="#4e3f35" stroke-width="3" stroke-linecap="round" stroke-linejoin="round" /><path d="M1034.0,1175.0 C1051.7,1190.2 1102.7,1233.8 1140.0,1266.0 C1177.3,1298.2 1231.5,1346.8 1258.0,1368.0 C1284.5,1389.2 1292.2,1388.8 1299.0,1393.0" fill="none" stroke="#4e3f35" stroke-width="2.2" stroke-linecap="round" stroke-linejoin="round" /><path d="M1111.0,1218.0 C1119.2,1221.7 1140.8,1234.7 1160.0,1240.0 C1179.2,1245.3 1206.0,1250.3 1226.0,1250.0 C1246.0,1249.7 1263.8,1250.8 1280.0,1238.0 C1296.2,1225.2 1315.8,1183.8 1323.0,1173.0" fill="none" stroke="#4e3f35" stroke-width="2" stroke-linecap="round" stroke-linejoin="round" /><path d="M992.0,1327.0 C1000.3,1333.8 1012.8,1357.2 1042.0,1368.0 C1071.2,1378.8 1125.5,1382.7 1167.0,1392.0 C1208.5,1401.3 1270.3,1418.7 1291.0,1424.0" fill="none" stroke="#4e3f35" stroke-width="2.2" stroke-linecap="round" stroke-linejoin="round" /><path d="M1366.0,1050.0 C1364.2,1076.0 1360.8,1147.7 1355.0,1206.0 C1349.2,1264.3 1329.8,1354.7 1331.0,1400.0 C1332.2,1445.3 1355.5,1455.2 1362.0,1478.0 C1368.5,1500.8 1370.5,1517.5 1370.0,1537.0 C1369.5,1556.5 1365.5,1581.3 1359.0,1595.0 C1352.5,1608.7 1335.7,1615.0 1331.0,1619.0" fill="none" stroke="#4e3f35" stroke-width="2.8" stroke-linecap="round" stroke-linejoin="round" /><path d="M1359.0,1214.0 C1361.5,1217.8 1367.7,1237.0 1374.0,1237.0 C1380.3,1237.0 1386.0,1236.7 1397.0,1214.0 C1408.0,1191.3 1427.8,1126.7 1440.0,1101.0 C1452.2,1075.3 1465.0,1066.8 1470.0,1060.0" fill="none" stroke="#4e3f35" stroke-width="2.5" stroke-linecap="round" stroke-linejoin="round" /><path d="M1470.0,1128.0 C1466.3,1131.2 1463.3,1128.8 1448.0,1147.0 C1432.7,1165.2 1396.8,1208.3 1378.0,1237.0 C1359.2,1265.7 1342.2,1305.3 1335.0,1319.0" fill="none" stroke="#4e3f35" stroke-width="2.5" stroke-linecap="round" stroke-linejoin="round" /><path d="M1470.0,1346.0 C1462.5,1355.0 1433.8,1384.3 1425.0,1400.0 C1416.2,1415.7 1414.5,1415.2 1417.0,1440.0 C1419.5,1464.8 1440.7,1523.2 1440.0,1549.0 C1439.3,1574.8 1428.5,1581.5 1413.0,1595.0 C1397.5,1608.5 1358.0,1624.2 1347.0,1630.0" fill="none" stroke="#4e3f35" stroke-width="2.8" stroke-linecap="round" stroke-linejoin="round" /><path d="M1407.7,1546.1 L1415.4,1554.5 L1427.2,1554.2 L1419.0,1545.6Z M1406.1,1547.7 L1405.6,1559.0 L1414.2,1567.2 L1414.5,1555.4Z M1403.9,1547.7 L1395.5,1555.4 L1395.8,1567.2 L1404.4,1559.0Z M1402.3,1546.1 L1391.0,1545.6 L1382.8,1554.2 L1394.6,1554.5Z M1402.3,1543.9 L1394.6,1535.5 L1382.8,1535.8 L1391.0,1544.4Z M1403.9,1542.3 L1404.4,1531.0 L1395.8,1522.8 L1395.5,1534.6Z M1406.1,1542.3 L1414.5,1534.6 L1414.2,1522.8 L1405.6,1531.0Z M1407.7,1543.9 L1419.0,1544.4 L1427.2,1535.8 L1415.4,1535.5Z" fill="#c47c22" stroke="none" stroke-width="0" stroke-linecap="round" stroke-linejoin="round" /><clipPath id="bodyclip"><path d="M1034.0,743.0 L968.0,773.0 L924.0,821.0 L900.0,877.0 L889.0,921.0 L880.0,954.0 L868.0,1030.0 L847.0,1124.0 L835.0,1194.0 L833.0,1229.0 L847.0,1264.0 L870.0,1292.0 L887.0,1313.0 L870.0,1360.0 L847.0,1454.0 L828.0,1524.0 L821.0,1594.0 L835.0,1622.0 L871.0,1639.0 L870.0,1649.0 L875.0,1684.0 L933.0,1700.0 L1050.0,1706.0 L1167.0,1702.0 L1279.0,1693.0 L1337.0,1660.0 L1335.0,1621.0 L1359.0,1595.0 L1370.0,1537.0 L1362.0,1478.0 L1331.0,1400.0 L1355.0,1206.0 L1366.0,1050.0 L1449.0,959.0 L1470.0,972.0 L1470.0,960.0 L1416.0,858.0 L1424.0,848.0 L1414.0,831.0 L1354.0,802.0 L1347.0,827.0 L1295.0,889.0 L1192.0,920.0 L1196.0,899.0 L1198.0,855.0 L1193.0,810.0 L1178.0,773.0 L1134.0,751.0 L1101.0,742.0Z"/></clipPath><g clip-path="url(#bodyclip)"><path d="M800.0,1480.0 L844.0,1468.0 L917.0,1452.0 L978.0,1484.0 L1038.0,1461.0 L1102.0,1490.0 L1160.0,1460.0 L1220.0,1486.0 L1280.0,1449.0 L1345.0,1468.0" fill="none" stroke="#c47c22" stroke-width="5" stroke-linecap="round" stroke-linejoin="round" /><path d="M800.0,1495.0 L844.0,1483.0 L917.0,1467.0 L978.0,1499.0 L1038.0,1476.0 L1102.0,1505.0 L1160.0,1475.0 L1220.0,1501.0 L1280.0,1464.0 L1345.0,1483.0" fill="none" stroke="#c47c22" stroke-width="5" stroke-linecap="round" stroke-linejoin="round" /><path d="M779.1,1552.9 L799.6,1575.3 L831.1,1574.5 L809.4,1551.6Z M774.9,1557.1 L773.6,1587.4 L796.5,1609.1 L797.3,1577.6Z M769.1,1557.1 L746.7,1577.6 L747.5,1609.1 L770.4,1587.4Z M764.9,1552.9 L734.6,1551.6 L712.9,1574.5 L744.4,1575.3Z M764.9,1547.1 L744.4,1524.7 L712.9,1525.5 L734.6,1548.4Z M769.1,1542.9 L770.4,1512.6 L747.5,1490.9 L746.7,1522.4Z M774.9,1542.9 L797.3,1522.4 L796.5,1490.9 L773.6,1512.6Z M779.1,1547.1 L809.4,1548.4 L831.1,1525.5 L799.6,1524.7Z" fill="#c47c22" stroke="none" stroke-width="0" stroke-linecap="round" stroke-linejoin="round" /><path d="M712,1490 L832,1610 M832,1490 L712,1610" fill="none" stroke="#f0d6a2" stroke-width="1.3" stroke-linecap="round" stroke-linejoin="round" stroke-dasharray="4 3"/><path d="M912.1,1564.9 L932.6,1587.3 L964.1,1586.5 L942.4,1563.6Z M907.9,1569.1 L906.6,1599.4 L929.5,1621.1 L930.3,1589.6Z M902.1,1569.1 L879.7,1589.6 L880.5,1621.1 L903.4,1599.4Z M897.9,1564.9 L867.6,1563.6 L845.9,1586.5 L877.4,1587.3Z M897.9,1559.1 L877.4,1536.7 L845.9,1537.5 L867.6,1560.4Z M902.1,1554.9 L903.4,1524.6 L880.5,1502.9 L879.7,1534.4Z M907.9,1554.9 L930.3,1534.4 L929.5,1502.9 L906.6,1524.6Z M912.1,1559.1 L942.4,1560.4 L964.1,1537.5 L932.6,1536.7Z" fill="#c47c22" stroke="none" stroke-width="0" stroke-linecap="round" stroke-linejoin="round" /><path d="M845,1502 L965,1622 M965,1502 L845,1622" fill="none" stroke="#f0d6a2" stroke-width="1.3" stroke-linecap="round" stroke-linejoin="round" stroke-dasharray="4 3"/><path d="M1042.1,1577.9 L1062.6,1600.3 L1094.1,1599.5 L1072.4,1576.6Z M1037.9,1582.1 L1036.6,1612.4 L1059.5,1634.1 L1060.3,1602.6Z M1032.1,1582.1 L1009.7,1602.6 L1010.5,1634.1 L1033.4,1612.4Z M1027.9,1577.9 L997.6,1576.6 L975.9,1599.5 L1007.4,1600.3Z M1027.9,1572.1 L1007.4,1549.7 L975.9,1550.5 L997.6,1573.4Z M1032.1,1567.9 L1033.4,1537.6 L1010.5,1515.9 L1009.7,1547.4Z M1037.9,1567.9 L1060.3,1547.4 L1059.5,1515.9 L1036.6,1537.6Z M1042.1,1572.1 L1072.4,1573.4 L1094.1,1550.5 L1062.6,1549.7Z" fill="#c47c22" stroke="none" stroke-width="0" stroke-linecap="round" stroke-linejoin="round" /><path d="M975,1515 L1095,1635 M1095,1515 L975,1635" fill="none" stroke="#f0d6a2" stroke-width="1.3" stroke-linecap="round" stroke-linejoin="round" stroke-dasharray="4 3"/><path d="M1173.1,1574.9 L1193.6,1597.3 L1225.1,1596.5 L1203.4,1573.6Z M1168.9,1579.1 L1167.6,1609.4 L1190.5,1631.1 L1191.3,1599.6Z M1163.1,1579.1 L1140.7,1599.6 L1141.5,1631.1 L1164.4,1609.4Z M1158.9,1574.9 L1128.6,1573.6 L1106.9,1596.5 L1138.4,1597.3Z M1158.9,1569.1 L1138.4,1546.7 L1106.9,1547.5 L1128.6,1570.4Z M1163.1,1564.9 L1164.4,1534.6 L1141.5,1512.9 L1140.7,1544.4Z M1168.9,1564.9 L1191.3,1544.4 L1190.5,1512.9 L1167.6,1534.6Z M1173.1,1569.1 L1203.4,1570.4 L1225.1,1547.5 L1193.6,1546.7Z" fill="#c47c22" stroke="none" stroke-width="0" stroke-linecap="round" stroke-linejoin="round" /><path d="M1106,1512 L1226,1632 M1226,1512 L1106,1632" fill="none" stroke="#f0d6a2" stroke-width="1.3" stroke-linecap="round" stroke-linejoin="round" stroke-dasharray="4 3"/><path d="M1303.1,1559.9 L1323.6,1582.3 L1355.1,1581.5 L1333.4,1558.6Z M1298.9,1564.1 L1297.6,1594.4 L1320.5,1616.1 L1321.3,1584.6Z M1293.1,1564.1 L1270.7,1584.6 L1271.5,1616.1 L1294.4,1594.4Z M1288.9,1559.9 L1258.6,1558.6 L1236.9,1581.5 L1268.4,1582.3Z M1288.9,1554.1 L1268.4,1531.7 L1236.9,1532.5 L1258.6,1555.4Z M1293.1,1549.9 L1294.4,1519.6 L1271.5,1497.9 L1270.7,1529.4Z M1298.9,1549.9 L1321.3,1529.4 L1320.5,1497.9 L1297.6,1519.6Z M1303.1,1554.1 L1333.4,1555.4 L1355.1,1532.5 L1323.6,1531.7Z" fill="#c47c22" stroke="none" stroke-width="0" stroke-linecap="round" stroke-linejoin="round" /><path d="M1236,1497 L1356,1617 M1356,1497 L1236,1617" fill="none" stroke="#f0d6a2" stroke-width="1.3" stroke-linecap="round" stroke-linejoin="round" stroke-dasharray="4 3"/><path d="M838,1528 L865,1555 L838,1582 L811,1555 Z M838,1539 L854,1555 L838,1571 L822,1555 Z" fill="#c47c22" stroke="none" stroke-width="0" stroke-linecap="round" stroke-linejoin="round" fill-rule="evenodd"/><path d="M970,1545 L997,1572 L970,1599 L943,1572 Z M970,1556 L986,1572 L970,1588 L954,1572 Z" fill="#c47c22" stroke="none" stroke-width="0" stroke-linecap="round" stroke-linejoin="round" fill-rule="evenodd"/><path d="M1100,1553 L1127,1580 L1100,1607 L1073,1580 Z M1100,1564 L1116,1580 L1100,1596 L1084,1580 Z" fill="#c47c22" stroke="none" stroke-width="0" stroke-linecap="round" stroke-linejoin="round" fill-rule="evenodd"/><path d="M1230,1543 L1257,1570 L1230,1597 L1203,1570 Z M1230,1554 L1246,1570 L1230,1586 L1214,1570 Z" fill="#c47c22" stroke="none" stroke-width="0" stroke-linecap="round" stroke-linejoin="round" fill-rule="evenodd"/><path d="M851,1501 L869,1519 M869,1501 L851,1519" fill="none" stroke="#c47c22" stroke-width="1.8" stroke-linecap="round" stroke-linejoin="round" stroke-dasharray="3 2"/><path d="M946,1511 L964,1529 M964,1511 L946,1529" fill="none" stroke="#c47c22" stroke-width="1.8" stroke-linecap="round" stroke-linejoin="round" stroke-dasharray="3 2"/><path d="M981,1513 L999,1531 M999,1513 L981,1531" fill="none" stroke="#c47c22" stroke-width="1.8" stroke-linecap="round" stroke-linejoin="round" stroke-dasharray="3 2"/><path d="M1073,1518 L1091,1536 M1091,1518 L1073,1536" fill="none" stroke="#c47c22" stroke-width="1.8" stroke-linecap="round" stroke-linejoin="round" stroke-dasharray="3 2"/><path d="M1108,1516 L1126,1534 M1126,1516 L1108,1534" fill="none" stroke="#c47c22" stroke-width="1.8" stroke-linecap="round" stroke-linejoin="round" stroke-dasharray="3 2"/><path d="M1198,1511 L1216,1529 M1216,1511 L1198,1529" fill="none" stroke="#c47c22" stroke-width="1.8" stroke-linecap="round" stroke-linejoin="round" stroke-dasharray="3 2"/><path d="M1233,1506 L1251,1524 M1251,1506 L1233,1524" fill="none" stroke="#c47c22" stroke-width="1.8" stroke-linecap="round" stroke-linejoin="round" stroke-dasharray="3 2"/><path d="M1326,1491 L1344,1509 M1344,1491 L1326,1509" fill="none" stroke="#c47c22" stroke-width="1.8" stroke-linecap="round" stroke-linejoin="round" stroke-dasharray="3 2"/><path d="M841,1598 L859,1616 M859,1598 L841,1616" fill="none" stroke="#c47c22" stroke-width="1.8" stroke-linecap="round" stroke-linejoin="round" stroke-dasharray="3 2"/><path d="M938,1608 L956,1626 M956,1608 L938,1626" fill="none" stroke="#c47c22" stroke-width="1.8" stroke-linecap="round" stroke-linejoin="round" stroke-dasharray="3 2"/><path d="M976,1611 L994,1629 M994,1611 L976,1629" fill="none" stroke="#c47c22" stroke-width="1.8" stroke-linecap="round" stroke-linejoin="round" stroke-dasharray="3 2"/><path d="M1073,1613 L1091,1631 M1091,1613 L1073,1631" fill="none" stroke="#c47c22" stroke-width="1.8" stroke-linecap="round" stroke-linejoin="round" stroke-dasharray="3 2"/><path d="M1111,1613 L1129,1631 M1129,1613 L1111,1631" fill="none" stroke="#c47c22" stroke-width="1.8" stroke-linecap="round" stroke-linejoin="round" stroke-dasharray="3 2"/><path d="M1203,1608 L1221,1626 M1221,1608 L1203,1626" fill="none" stroke="#c47c22" stroke-width="1.8" stroke-linecap="round" stroke-linejoin="round" stroke-dasharray="3 2"/><path d="M1243,1603 L1261,1621 M1261,1603 L1243,1621" fill="none" stroke="#c47c22" stroke-width="1.8" stroke-linecap="round" stroke-linejoin="round" stroke-dasharray="3 2"/></g><path d="M871.0,1639.0 L1120.0,1632.0 L1284.0,1614.0 L1335.0,1621.0 L1337.0,1660.0 L1279.0,1693.0 L1167.0,1702.0 L1050.0,1706.0 L933.0,1700.0 L875.0,1684.0 L870.0,1649.0Z" fill="#dea948" stroke="none" stroke-width="0" stroke-linecap="round" stroke-linejoin="round" /><path d="M875.0,1663.0 L964.0,1651.0 L1041.0,1679.0 L1104.0,1656.0 L1172.0,1679.0 L1242.0,1649.0 L1307.0,1658.0 L1335.0,1649.0 L1337.0,1660.0 L1279.0,1693.0 L1167.0,1702.0 L1050.0,1706.0 L933.0,1700.0 L875.0,1684.0Z" fill="#cf8b2a" stroke="none" stroke-width="0" stroke-linecap="round" stroke-linejoin="round" /><path d="M875.0,1665.0 L964.0,1653.0 L1041.0,1681.0 L1104.0,1658.0 L1172.0,1681.0 L1242.0,1651.0 L1307.0,1660.0 L1335.0,1651.0" fill="none" stroke="#f3d9a4" stroke-width="5" stroke-linecap="round" stroke-linejoin="round" /><path d="M900,1655 L898,1695" fill="none" stroke="#5a4030" stroke-width="1.5" stroke-linecap="round" stroke-linejoin="round" opacity="0.7"/><path d="M930,1658 L928,1695" fill="none" stroke="#5a4030" stroke-width="1.5" stroke-linecap="round" stroke-linejoin="round" opacity="0.7"/><path d="M960,1661 L958,1695" fill="none" stroke="#5a4030" stroke-width="1.5" stroke-linecap="round" stroke-linejoin="round" opacity="0.7"/><path d="M990,1655 L988,1695" fill="none" stroke="#5a4030" stroke-width="1.5" stroke-linecap="round" stroke-linejoin="round" opacity="0.7"/><path d="M1020,1658 L1018,1695" fill="none" stroke="#5a4030" stroke-width="1.5" stroke-linecap="round" stroke-linejoin="round" opacity="0.7"/><path d="M1050,1661 L1048,1695" fill="none" stroke="#5a4030" stroke-width="1.5" stroke-linecap="round" stroke-linejoin="round" opacity="0.7"/><path d="M1080,1655 L1078,1695" fill="none" stroke="#5a4030" stroke-width="1.5" stroke-linecap="round" stroke-linejoin="round" opacity="0.7"/><path d="M1110,1658 L1108,1695" fill="none" stroke="#5a4030" stroke-width="1.5" stroke-linecap="round" stroke-linejoin="round" opacity="0.7"/><path d="M1140,1661 L1138,1695" fill="none" stroke="#5a4030" stroke-width="1.5" stroke-linecap="round" stroke-linejoin="round" opacity="0.7"/><path d="M1170,1655 L1168,1695" fill="none" stroke="#5a4030" stroke-width="1.5" stroke-linecap="round" stroke-linejoin="round" opacity="0.7"/><path d="M1200,1658 L1198,1695" fill="none" stroke="#5a4030" stroke-width="1.5" stroke-linecap="round" stroke-linejoin="round" opacity="0.7"/><path d="M1230,1661 L1228,1695" fill="none" stroke="#5a4030" stroke-width="1.5" stroke-linecap="round" stroke-linejoin="round" opacity="0.7"/><path d="M1260,1655 L1258,1695" fill="none" stroke="#5a4030" stroke-width="1.5" stroke-linecap="round" stroke-linejoin="round" opacity="0.7"/><path d="M1290,1658 L1288,1695" fill="none" stroke="#5a4030" stroke-width="1.5" stroke-linecap="round" stroke-linejoin="round" opacity="0.7"/><path d="M1320,1661 L1318,1695" fill="none" stroke="#5a4030" stroke-width="1.5" stroke-linecap="round" stroke-linejoin="round" opacity="0.7"/><path d="M871.0,1639.0 C912.5,1637.8 1051.2,1636.2 1120.0,1632.0 C1188.8,1627.8 1256.7,1617.0 1284.0,1614.0" fill="none" stroke="#4e3f35" stroke-width="2.5" stroke-linecap="round" stroke-linejoin="round" /><path d="M875.0,1684.0 C884.7,1686.7 903.8,1696.3 933.0,1700.0 C962.2,1703.7 1011.0,1705.7 1050.0,1706.0 C1089.0,1706.3 1128.8,1704.2 1167.0,1702.0 C1205.2,1699.8 1250.7,1700.0 1279.0,1693.0 C1307.3,1686.0 1327.3,1665.5 1337.0,1660.0" fill="none" stroke="#4e3f35" stroke-width="3" stroke-linecap="round" stroke-linejoin="round" /><path d="M870.0,1649.0 L875.0,1684.0" fill="none" stroke="#4e3f35" stroke-width="2.5" stroke-linecap="round" stroke-linejoin="round" /><path d="M1001.0,982.0 L1056.0,985.0 L1096.0,987.0 L1191.0,921.0 L1295.0,889.0 L1347.0,827.0 L1354.0,802.0 L1414.0,831.0 L1424.0,848.0 L1416.0,858.0 L1406.0,900.0 L1376.0,940.0 L1344.0,974.0 L1247.0,1034.0 L1174.0,1056.0 L1140.0,1043.0 L1080.0,1018.0 L1034.0,990.0Z" fill="#eed3a0" stroke="none" stroke-width="0" stroke-linecap="round" stroke-linejoin="round" /><path d="M1357,823 L1407,864" fill="none" stroke="#daa23e" stroke-width="4.5" stroke-linecap="round" stroke-linejoin="round" /><path d="M1349,844 L1393,904" fill="none" stroke="#daa23e" stroke-width="4.5" stroke-linecap="round" stroke-linejoin="round" /><path d="M1327,871 L1364,923" fill="none" stroke="#daa23e" stroke-width="4.5" stroke-linecap="round" stroke-linejoin="round" /><path d="M1302,885 L1337,958" fill="none" stroke="#daa23e" stroke-width="4.5" stroke-linecap="round" stroke-linejoin="round" /><path d="M1275,908 L1295,960" fill="none" stroke="#daa23e" stroke-width="4.5" stroke-linecap="round" stroke-linejoin="round" /><path d="M1243,921 L1250,960" fill="none" stroke="#daa23e" stroke-width="4.5" stroke-linecap="round" stroke-linejoin="round" /><path d="M1212,921 L1221,960" fill="none" stroke="#daa23e" stroke-width="4.5" stroke-linecap="round" stroke-linejoin="round" /><path d="M1153,974 L1155,1034" fill="none" stroke="#daa23e" stroke-width="4.5" stroke-linecap="round" stroke-linejoin="round" /><path d="M1189,945 L1189,1040" fill="none" stroke="#daa23e" stroke-width="4.5" stroke-linecap="round" stroke-linejoin="round" /><path d="M1219,940 L1228,1008" fill="none" stroke="#daa23e" stroke-width="4.5" stroke-linecap="round" stroke-linejoin="round" /><path d="M1247,940 L1256,1002" fill="none" stroke="#daa23e" stroke-width="4.5" stroke-linecap="round" stroke-linejoin="round" /><path d="M1290,940 L1305,978" fill="none" stroke="#daa23e" stroke-width="4.5" stroke-linecap="round" stroke-linejoin="round" /><path d="M1074,989 L1079,1020" fill="none" stroke="#daa23e" stroke-width="4.5" stroke-linecap="round" stroke-linejoin="round" /><path d="M1110,990 L1118,1030" fill="none" stroke="#daa23e" stroke-width="4.5" stroke-linecap="round" stroke-linejoin="round" /><path d="M1034.0,990.0 C1041.7,994.7 1062.3,1009.2 1080.0,1018.0 C1097.7,1026.8 1124.3,1036.7 1140.0,1043.0 C1155.7,1049.3 1156.2,1057.5 1174.0,1056.0 C1191.8,1054.5 1218.7,1047.7 1247.0,1034.0 C1275.3,1020.3 1322.5,989.7 1344.0,974.0 C1365.5,958.3 1365.7,952.3 1376.0,940.0 C1386.3,927.7 1399.3,913.7 1406.0,900.0 C1412.7,886.3 1414.3,865.0 1416.0,858.0" fill="none" stroke="#4e3f35" stroke-width="2.5" stroke-linecap="round" stroke-linejoin="round" /><path d="M1416.0,858.0 C1420.0,866.7 1432.3,893.0 1440.0,910.0 C1447.7,927.0 1457.0,949.2 1462.0,960.0 C1467.0,970.8 1468.7,972.5 1470.0,975.0" fill="none" stroke="#4e3f35" stroke-width="3" stroke-linecap="round" stroke-linejoin="round" /><path d="M1424.0,848.0 C1422.3,845.2 1425.7,838.7 1414.0,831.0 C1402.3,823.3 1365.2,802.7 1354.0,802.0 C1342.8,801.3 1348.2,822.8 1347.0,827.0" fill="none" stroke="#4e3f35" stroke-width="2.5" stroke-linecap="round" stroke-linejoin="round" /><path d="M1406.0,900.0 C1401.7,905.0 1388.0,920.0 1380.0,930.0 C1372.0,940.0 1361.7,955.0 1358.0,960.0" fill="none" stroke="#4e3f35" stroke-width="2" stroke-linecap="round" stroke-linejoin="round" /><path d="M1200.0,848.0 L1233.0,800.0 L1275.0,792.0 L1350.0,823.0 L1295.0,879.0 L1196.0,918.0Z" fill="#ffffff" stroke="none" stroke-width="0" stroke-linecap="round" stroke-linejoin="round" /><path d="M1196.0,918.0 L1200.0,880.0 L1210.0,895.0 L1260.0,885.0 L1310.0,860.0 L1347.0,827.0 L1350.0,823.0 L1335.0,850.0 L1295.0,879.0Z" fill="#cdd4da" stroke="none" stroke-width="0" stroke-linecap="round" stroke-linejoin="round" /><path d="M1196.0,918.0 C1212.5,911.5 1269.8,894.2 1295.0,879.0 C1320.2,863.8 1338.3,835.7 1347.0,827.0" fill="none" stroke="#4e3f35" stroke-width="2.5" stroke-linecap="round" stroke-linejoin="round" /><path d="M1277.0,790.0 L1349.0,823.0" fill="none" stroke="#4e3f35" stroke-width="2.5" stroke-linecap="round" stroke-linejoin="round" /><path d="M1034.0,743.0 C1056.2,737.8 1084.3,740.7 1101.0,742.0 C1117.7,743.3 1121.2,745.8 1134.0,751.0 C1146.8,756.2 1168.2,763.2 1178.0,773.0 C1187.8,782.8 1189.7,796.3 1193.0,810.0 C1196.3,823.7 1197.5,840.2 1198.0,855.0 C1198.5,869.8 1197.2,888.0 1196.0,899.0 C1194.8,910.0 1207.7,906.3 1191.0,921.0 C1174.3,935.7 1118.5,976.3 1096.0,987.0 C1073.5,997.7 1071.8,985.8 1056.0,985.0 C1040.2,984.2 1020.8,989.5 1001.0,982.0 C981.2,974.5 955.7,950.2 937.0,940.0 C918.3,929.8 895.2,931.5 889.0,921.0 C882.8,910.5 894.2,893.7 900.0,877.0 C905.8,860.3 912.7,838.3 924.0,821.0 C935.3,803.7 949.7,786.0 968.0,773.0 C986.3,760.0 1011.8,748.2 1034.0,743.0Z" fill="#efd4a1" stroke="none" stroke-width="0" stroke-linecap="round" stroke-linejoin="round" /><path d="M1034.0,743.0 C1022.8,744.8 986.3,760.0 968.0,773.0 C949.7,786.0 935.3,803.7 924.0,821.0 C912.7,838.3 905.8,860.3 900.0,877.0 C894.2,893.7 882.8,910.7 889.0,921.0 C895.2,931.3 928.7,944.5 937.0,939.0 C945.3,933.5 936.3,905.7 939.0,888.0 C941.7,870.3 944.5,849.3 953.0,833.0 C961.5,816.7 976.3,801.8 990.0,790.0 C1003.7,778.2 1027.7,769.8 1035.0,762.0 C1042.3,754.2 1045.2,741.2 1034.0,743.0Z" fill="#e0aa46" stroke="none" stroke-width="0" stroke-linecap="round" stroke-linejoin="round" /><path d="M1101.0,742.0 L1134.0,751.0 L1178.0,773.0 L1160.0,790.0 L1140.0,770.0Z" fill="#e0aa46" stroke="none" stroke-width="0" stroke-linecap="round" stroke-linejoin="round" /><path d="M1196.0,899.0 L1191.0,921.0 L1150.0,950.0 L1118.0,958.0 L1145.0,899.0 L1149.0,843.0Z" fill="#e6b860" stroke="none" stroke-width="0" stroke-linecap="round" stroke-linejoin="round" /><path d="M1149.0,843.0 C1148.3,852.3 1150.2,879.8 1145.0,899.0 C1139.8,918.2 1126.2,944.8 1118.0,958.0 C1109.8,971.2 1106.3,973.5 1096.0,978.0 C1085.7,982.5 1071.8,984.2 1056.0,985.0 C1040.2,985.8 1010.2,983.3 1001.0,983.0" fill="none" stroke="#4e3f35" stroke-width="2.5" stroke-linecap="round" stroke-linejoin="round" /><path d="M1134.0,751.0 C1136.7,755.8 1147.5,764.7 1150.0,780.0 C1152.5,795.3 1149.2,832.5 1149.0,843.0" fill="none" stroke="#4e3f35" stroke-width="2" stroke-linecap="round" stroke-linejoin="round" /><path d="M1001.0,983.0 C995.0,980.5 975.7,975.3 965.0,968.0 C954.3,960.7 941.7,943.8 937.0,939.0" fill="none" stroke="#4e3f35" stroke-width="2.5" stroke-linecap="round" stroke-linejoin="round" /><path d="M1012.0,755.0 L1026.0,799.0 L1020.0,820.0 L1034.0,860.0 L1030.0,885.0 L1043.0,930.0 L1040.0,955.0 L1048.0,985.0 L1126.0,975.0 L1114.0,945.0 L1118.0,920.0 L1104.0,875.0 L1108.0,850.0 L1094.0,810.0 L1098.0,785.0 L1088.0,743.0Z" fill="#efd29c" stroke="none" stroke-width="0" stroke-linecap="round" stroke-linejoin="round" /><path d="M1012.0,755.0 L1026.0,799.0 L1020.0,820.0 L1034.0,860.0 L1030.0,885.0 L1043.0,930.0 L1040.0,955.0 L1048.0,985.0" fill="none" stroke="#c47c22" stroke-width="2" stroke-linecap="round" stroke-linejoin="round" /><path d="M1088.0,743.0 L1098.0,785.0 L1094.0,810.0 L1108.0,850.0 L1104.0,875.0 L1118.0,920.0 L1114.0,945.0 L1126.0,975.0" fill="none" stroke="#c47c22" stroke-width="2" stroke-linecap="round" stroke-linejoin="round" /><path d="M1018.0,755.0 L1032.0,799.0 L1026.0,820.0 L1040.0,860.0 L1036.0,885.0 L1049.0,930.0 L1046.0,955.0 L1054.0,985.0" fill="none" stroke="#c47c22" stroke-width="2" stroke-linecap="round" stroke-linejoin="round" /><path d="M1082.0,743.0 L1092.0,785.0 L1088.0,810.0 L1102.0,850.0 L1098.0,875.0 L1112.0,920.0 L1108.0,945.0 L1120.0,975.0" fill="none" stroke="#c47c22" stroke-width="2" stroke-linecap="round" stroke-linejoin="round" /><path d="M1054.5,769.1 L1061.9,777.1 L1073.2,776.8 L1065.4,768.6Z M1053.1,770.5 L1052.6,781.4 L1060.8,789.2 L1061.1,777.9Z M1050.9,770.5 L1042.9,777.9 L1043.2,789.2 L1051.4,781.4Z M1049.5,769.1 L1038.6,768.6 L1030.8,776.8 L1042.1,777.1Z M1049.5,766.9 L1042.1,758.9 L1030.8,759.2 L1038.6,767.4Z M1050.9,765.5 L1051.4,754.6 L1043.2,746.8 L1042.9,758.1Z M1053.1,765.5 L1061.1,758.1 L1060.8,746.8 L1052.6,754.6Z M1054.5,766.9 L1065.4,767.4 L1073.2,759.2 L1061.9,758.9Z" fill="#c47c22" stroke="none" stroke-width="0" stroke-linecap="round" stroke-linejoin="round" /><path d="M1065.5,819.1 L1072.9,827.1 L1084.2,826.8 L1076.4,818.6Z M1064.1,820.5 L1063.6,831.4 L1071.8,839.2 L1072.1,827.9Z M1061.9,820.5 L1053.9,827.9 L1054.2,839.2 L1062.4,831.4Z M1060.5,819.1 L1049.6,818.6 L1041.8,826.8 L1053.1,827.1Z M1060.5,816.9 L1053.1,808.9 L1041.8,809.2 L1049.6,817.4Z M1061.9,815.5 L1062.4,804.6 L1054.2,796.8 L1053.9,808.1Z M1064.1,815.5 L1072.1,808.1 L1071.8,796.8 L1063.6,804.6Z M1065.5,816.9 L1076.4,817.4 L1084.2,809.2 L1072.9,808.9Z" fill="#c47c22" stroke="none" stroke-width="0" stroke-linecap="round" stroke-linejoin="round" /><path d="M1073.5,867.1 L1080.9,875.1 L1092.2,874.8 L1084.4,866.6Z M1072.1,868.5 L1071.6,879.4 L1079.8,887.2 L1080.1,875.9Z M1069.9,868.5 L1061.9,875.9 L1062.2,887.2 L1070.4,879.4Z M1068.5,867.1 L1057.6,866.6 L1049.8,874.8 L1061.1,875.1Z M1068.5,864.9 L1061.1,856.9 L1049.8,857.2 L1057.6,865.4Z M1069.9,863.5 L1070.4,852.6 L1062.2,844.8 L1061.9,856.1Z M1072.1,863.5 L1080.1,856.1 L1079.8,844.8 L1071.6,852.6Z M1073.5,864.9 L1084.4,865.4 L1092.2,857.2 L1080.9,856.9Z" fill="#c47c22" stroke="none" stroke-width="0" stroke-linecap="round" stroke-linejoin="round" /><path d="M1080.5,915.1 L1087.9,923.1 L1099.2,922.8 L1091.4,914.6Z M1079.1,916.5 L1078.6,927.4 L1086.8,935.2 L1087.1,923.9Z M1076.9,916.5 L1068.9,923.9 L1069.2,935.2 L1077.4,927.4Z M1075.5,915.1 L1064.6,914.6 L1056.8,922.8 L1068.1,923.1Z M1075.5,912.9 L1068.1,904.9 L1056.8,905.2 L1064.6,913.4Z M1076.9,911.5 L1077.4,900.6 L1069.2,892.8 L1068.9,904.1Z M1079.1,911.5 L1087.1,904.1 L1086.8,892.8 L1078.6,900.6Z M1080.5,912.9 L1091.4,913.4 L1099.2,905.2 L1087.9,904.9Z" fill="#c47c22" stroke="none" stroke-width="0" stroke-linecap="round" stroke-linejoin="round" /><path d="M1086.5,963.1 L1093.9,971.1 L1105.2,970.8 L1097.4,962.6Z M1085.1,964.5 L1084.6,975.4 L1092.8,983.2 L1093.1,971.9Z M1082.9,964.5 L1074.9,971.9 L1075.2,983.2 L1083.4,975.4Z M1081.5,963.1 L1070.6,962.6 L1062.8,970.8 L1074.1,971.1Z M1081.5,960.9 L1074.1,952.9 L1062.8,953.2 L1070.6,961.4Z M1082.9,959.5 L1083.4,948.6 L1075.2,940.8 L1074.9,952.1Z M1085.1,959.5 L1093.1,952.1 L1092.8,940.8 L1084.6,948.6Z M1086.5,960.9 L1097.4,961.4 L1105.2,953.2 L1093.9,952.9Z" fill="#c47c22" stroke="none" stroke-width="0" stroke-linecap="round" stroke-linejoin="round" /><path d="M1058,785 L1066,793 L1058,801 L1050,793 Z M1058,789 L1062,793 L1058,797 L1054,793 Z" fill="#c47c22" stroke="none" stroke-width="0" stroke-linecap="round" stroke-linejoin="round" fill-rule="evenodd"/><path d="M1067,834 L1075,842 L1067,850 L1059,842 Z M1067,838 L1071,842 L1067,846 L1063,842 Z" fill="#c47c22" stroke="none" stroke-width="0" stroke-linecap="round" stroke-linejoin="round" fill-rule="evenodd"/><path d="M1075,882 L1083,890 L1075,898 L1067,890 Z M1075,886 L1079,890 L1075,894 L1071,890 Z" fill="#c47c22" stroke="none" stroke-width="0" stroke-linecap="round" stroke-linejoin="round" fill-rule="evenodd"/><path d="M1081,930 L1089,938 L1081,946 L1073,938 Z M1081,934 L1085,938 L1081,942 L1077,938 Z" fill="#c47c22" stroke="none" stroke-width="0" stroke-linecap="round" stroke-linejoin="round" fill-rule="evenodd"/><path d="M1034.0,743.0 C1023.0,748.0 986.3,760.0 968.0,773.0 C949.7,786.0 935.3,803.7 924.0,821.0 C912.7,838.3 905.8,860.3 900.0,877.0 C894.2,893.7 892.3,908.2 889.0,921.0 C885.7,933.8 881.5,948.5 880.0,954.0" fill="none" stroke="#4e3f35" stroke-width="3" stroke-linecap="round" stroke-linejoin="round" /><path d="M1034.0,743.0 C1045.2,742.8 1084.3,740.7 1101.0,742.0 C1117.7,743.3 1121.2,745.8 1134.0,751.0 C1146.8,756.2 1168.2,763.2 1178.0,773.0 C1187.8,782.8 1189.7,796.3 1193.0,810.0 C1196.3,823.7 1197.5,840.2 1198.0,855.0 C1198.5,869.8 1197.2,888.0 1196.0,899.0 C1194.8,910.0 1207.7,906.3 1191.0,921.0 C1174.3,935.7 1111.8,976.0 1096.0,987.0" fill="none" stroke="#4e3f35" stroke-width="3" stroke-linecap="round" stroke-linejoin="round" /><path d="M864.0,546.0 L907.0,500.0 L975.0,469.0 L1065.0,426.0 L1155.0,388.0 L1245.0,374.0 L1302.0,383.0 L1335.0,433.0 L1349.0,500.0 L1355.0,575.0 L1330.0,620.0 L1300.0,645.0 L1262.0,719.0 L1237.0,773.0 L1229.0,723.0 L1246.0,654.0 L1246.0,570.0 L1192.0,556.0 L1134.0,546.0 L1061.0,521.0 L970.0,476.0 L937.0,462.0 L947.0,514.0 L958.0,572.0 L977.0,630.0 L1003.0,694.0 L1048.0,757.0 L1010.0,745.0 L960.0,745.0 L925.0,728.0 L905.0,705.0 L885.0,665.0 L870.0,620.0 L860.0,560.0Z" fill="#fbf883" stroke="none" stroke-width="0" stroke-linecap="round" stroke-linejoin="round" /><path d="M908.0,634.0 C909.8,643.8 920.3,671.2 929.0,686.0 C937.7,700.8 947.3,714.0 960.0,723.0 C972.7,732.0 992.2,735.8 1005.0,740.0 C1017.8,744.2 1035.2,749.2 1037.0,748.0 C1038.8,746.8 1026.2,739.3 1016.0,733.0 C1005.8,726.7 988.2,719.7 976.0,710.0 C963.8,700.3 952.7,688.8 943.0,675.0 C933.3,661.2 923.8,633.8 918.0,627.0 C912.2,620.2 906.2,624.2 908.0,634.0Z" fill="#f1a81e" stroke="none" stroke-width="0" stroke-linecap="round" stroke-linejoin="round" /><path d="M895.0,560.0 C896.7,570.0 900.8,601.7 905.0,620.0 C909.2,638.3 917.5,661.7 920.0,670.0" fill="none" stroke="#4e3f35" stroke-width="1.5" stroke-linecap="round" stroke-linejoin="round" /><path d="M915.0,710.0 C918.3,714.2 920.8,728.3 935.0,735.0 C949.2,741.7 989.2,747.5 1000.0,750.0" fill="none" stroke="#4e3f35" stroke-width="1.5" stroke-linecap="round" stroke-linejoin="round" /><path d="M1290.0,455.0 C1294.5,437.0 1306.0,446.2 1312.0,452.0 C1318.0,457.8 1324.3,475.3 1326.0,490.0 C1327.7,504.7 1326.3,527.5 1322.0,540.0 C1317.7,552.5 1306.2,561.7 1300.0,565.0 C1293.8,568.3 1286.7,578.3 1285.0,560.0 C1283.3,541.7 1285.5,473.0 1290.0,455.0Z" fill="#fef6e7" stroke="none" stroke-width="0" stroke-linecap="round" stroke-linejoin="round" /><path d="M1288.0,458.0 C1292.0,457.0 1305.7,446.7 1312.0,452.0 C1318.3,457.3 1324.3,475.3 1326.0,490.0 C1327.7,504.7 1326.3,527.5 1322.0,540.0 C1317.7,552.5 1303.7,560.8 1300.0,565.0" fill="none" stroke="#4e3f35" stroke-width="2" stroke-linecap="round" stroke-linejoin="round" /><path d="M1300,470 C1312,475 1315,490 1310,500" fill="none" stroke="#9a7a78" stroke-width="2" stroke-linecap="round" stroke-linejoin="round" /><path d="M937.0,462.0 L970.0,476.0 L1061.0,521.0 L1134.0,546.0 L1192.0,556.0 L1246.0,570.0 L1246.0,654.0 L1243.0,682.0 L1202.0,726.0 L1162.0,742.0 L1089.0,722.0 L1001.0,690.0 L977.0,630.0 L958.0,572.0 L947.0,514.0Z" fill="#fef6e7" stroke="none" stroke-width="0" stroke-linecap="round" stroke-linejoin="round" /><path d="M937.0,462.0 L970.0,476.0 L1000.0,492.0 L975.0,515.0 L960.0,530.0 L947.0,514.0Z" fill="#f9ddd4" stroke="none" stroke-width="0" stroke-linecap="round" stroke-linejoin="round" /><path d="M1089.0,722.0 L1162.0,742.0 L1202.0,726.0 L1243.0,682.0 L1246.0,660.0 L1230.0,675.0 L1200.0,710.0 L1160.0,730.0 L1100.0,716.0Z" fill="#f8dcd2" stroke="none" stroke-width="0" stroke-linecap="round" stroke-linejoin="round" /><path d="M1001.0,690.0 L1089.0,722.0 L1162.0,742.0 L1202.0,726.0 L1243.0,682.0 L1262.0,668.0 L1243.0,710.0 L1186.0,754.0 L1154.0,762.0 L1089.0,732.0 L1001.0,698.0Z" fill="#3d2a1f" stroke="none" stroke-width="0" stroke-linecap="round" stroke-linejoin="round" /><path d="M954.0,572.0 C957.2,578.8 974.7,582.5 989.0,581.0 C1003.3,579.5 1028.0,571.2 1040.0,563.0 C1052.0,554.8 1061.0,538.7 1061.0,532.0 C1061.0,525.3 1049.3,524.5 1040.0,523.0 C1030.7,521.5 1016.7,520.2 1005.0,523.0 C993.3,525.8 978.5,531.8 970.0,540.0 C961.5,548.2 950.8,565.2 954.0,572.0Z" fill="#ffffff" stroke="none" stroke-width="0" stroke-linecap="round" stroke-linejoin="round" /><path d="M993.0,529.0 C1000.0,523.7 1032.7,521.2 1040.0,526.0 C1047.3,530.8 1040.7,550.7 1037.0,558.0 C1033.3,565.3 1024.5,570.0 1018.0,570.0 C1011.5,570.0 1002.2,564.8 998.0,558.0 C993.8,551.2 986.0,534.3 993.0,529.0Z" fill="#3f6fc8" stroke="none" stroke-width="0" stroke-linecap="round" stroke-linejoin="round" /><path d="M1003.0,548.0 C1008.3,545.5 1031.8,543.8 1037.0,546.0 C1042.2,548.2 1037.2,557.0 1034.0,561.0 C1030.8,565.0 1022.8,570.0 1018.0,570.0 C1013.2,570.0 1007.5,564.7 1005.0,561.0 C1002.5,557.3 997.7,550.5 1003.0,548.0Z" fill="#86c4f4" stroke="none" stroke-width="0" stroke-linecap="round" stroke-linejoin="round" /><path d="M1008,534 L1016,532" fill="none" stroke="#ffffff" stroke-width="3" stroke-linecap="round" stroke-linejoin="round" /><path d="M1018,538 L1020,548" fill="none" stroke="#3a2018" stroke-width="3" stroke-linecap="round" stroke-linejoin="round" /><path d="M952.0,572.0 C953.0,568.7 954.7,557.8 958.0,552.0 C961.3,546.2 964.2,541.8 972.0,537.0 C979.8,532.2 990.2,525.8 1005.0,523.0 C1019.8,520.2 1051.7,520.5 1061.0,520.0" fill="none" stroke="#2b1d18" stroke-width="5" stroke-linecap="round" stroke-linejoin="round" /><path d="M960.0,582.0 C964.8,582.2 975.7,585.8 989.0,583.0 C1002.3,580.2 1031.5,568.0 1040.0,565.0" fill="none" stroke="#4e3f35" stroke-width="2" stroke-linecap="round" stroke-linejoin="round" /><path d="M1092.0,556.0 C1095.0,553.5 1107.3,564.7 1110.0,570.0 C1112.7,575.3 1111.0,585.5 1108.0,588.0 C1105.0,590.5 1094.7,590.3 1092.0,585.0 C1089.3,579.7 1089.0,558.5 1092.0,556.0Z" fill="#f2c4bc" stroke="none" stroke-width="0" stroke-linecap="round" stroke-linejoin="round" /><path d="M1106,570 L1109,580" fill="none" stroke="#6a5050" stroke-width="2.5" stroke-linecap="round" stroke-linejoin="round" /><path d="M1080.0,663.0 C1088.3,662.5 1115.0,663.0 1130.0,660.0 C1145.0,657.0 1158.8,650.7 1170.0,645.0 C1181.2,639.3 1192.5,629.2 1197.0,626.0" fill="none" stroke="#eaa8a0" stroke-width="3.5" stroke-linecap="round" stroke-linejoin="round" /><path d="M1080.0,660.0 C1081.3,660.7 1084.7,663.2 1088.0,664.0 C1091.3,664.8 1098.0,664.8 1100.0,665.0" fill="none" stroke="#4e3f35" stroke-width="2.5" stroke-linecap="round" stroke-linejoin="round" /><path d="M1145,676 l8,0 l-3,4 Z" fill="#f2b0a8" stroke="#f2b0a8" stroke-width="4" stroke-linecap="round" stroke-linejoin="round" /><path d="M937.0,462.0 C938.7,470.7 943.5,495.7 947.0,514.0 C950.5,532.3 953.0,552.7 958.0,572.0 C963.0,591.3 969.5,609.7 977.0,630.0 C984.5,650.3 998.7,683.3 1003.0,694.0" fill="none" stroke="#4e3f35" stroke-width="2.5" stroke-linecap="round" stroke-linejoin="round" /><path d="M862.0,444.0 L867.0,399.0 L885.0,358.0 L919.0,320.0 L975.0,275.0 L1065.0,252.0 L1133.0,257.0 L1173.0,273.0 L1065.0,365.0 L953.0,426.0Z" fill="#fbf883" stroke="none" stroke-width="0" stroke-linecap="round" stroke-linejoin="round" /><path d="M862.0,444.0 C877.2,441.0 919.2,439.2 953.0,426.0 C986.8,412.8 1028.3,390.5 1065.0,365.0 C1101.7,339.5 1155.0,288.3 1173.0,273.0" fill="none" stroke="#f1a81e" stroke-width="3" stroke-linecap="round" stroke-linejoin="round" /><path d="M864.0,546.0 C871.2,538.3 888.5,512.8 907.0,500.0 C925.5,487.2 948.7,481.3 975.0,469.0 C1001.3,456.7 1035.0,439.5 1065.0,426.0 C1095.0,412.5 1125.0,396.7 1155.0,388.0 C1185.0,379.3 1220.5,374.8 1245.0,374.0 C1269.5,373.2 1292.5,381.5 1302.0,383.0" fill="none" stroke="#f1a81e" stroke-width="3" stroke-linecap="round" stroke-linejoin="round" /><path d="M947.3,434.8 L952.2,439.9 L958.8,446.5 L966.9,454.2 L976.5,462.1 L986.7,470.3 L997.4,478.3 L1008.2,485.8 L1018.7,492.2 L1029.5,497.8 L1040.9,503.1 L1052.7,508.2 L1064.6,512.9 L1076.6,517.2 L1088.2,521.1 L1099.3,524.5 L1109.6,527.4 L1119.6,529.7 L1129.5,531.4 L1139.3,532.5 L1148.5,533.2 L1157.1,533.7 L1164.7,534.0 L1171.0,534.2 L1176.0,534.5 L1176.0,533.5 L1171.1,533.0 L1164.7,532.5 L1157.2,531.9 L1148.7,531.3 L1139.5,530.3 L1129.9,528.9 L1120.1,527.0 L1110.4,524.6 L1100.3,521.4 L1089.3,517.8 L1077.9,513.7 L1066.1,509.1 L1054.3,504.2 L1042.7,499.0 L1031.6,493.5 L1021.3,487.8 L1011.1,481.4 L1000.7,473.9 L990.3,465.7 L980.3,457.4 L971.0,449.4 L962.2,442.6 L954.6,437.0 L948.7,433.2Z" fill="#f1a81e" stroke="none" stroke-width="0" stroke-linecap="round" stroke-linejoin="round" /><path d="M1007.5,402.5 L1012.3,408.6 L1018.9,416.5 L1027.4,425.2 L1036.9,434.9 L1047.2,445.0 L1057.9,455.1 L1068.6,464.7 L1079.1,473.2 L1090.2,481.2 L1102.7,489.3 L1115.8,497.4 L1129.0,505.2 L1141.6,512.5 L1153.0,518.9 L1162.6,524.3 L1169.7,528.4 L1170.3,527.6 L1163.2,523.2 L1153.8,517.6 L1142.5,511.0 L1130.0,503.5 L1117.0,495.5 L1104.0,487.2 L1091.8,478.9 L1080.9,470.8 L1070.7,462.2 L1060.2,452.6 L1049.8,442.4 L1039.8,432.1 L1030.5,422.3 L1022.1,413.4 L1014.6,406.4 L1008.5,401.5Z" fill="#f1a81e" stroke="none" stroke-width="0" stroke-linecap="round" stroke-linejoin="round" /><path d="M1059.3,404.8 L1064.0,410.0 L1070.4,416.7 L1078.2,424.4 L1087.4,432.4 L1097.3,440.9 L1107.7,449.6 L1118.2,458.0 L1128.5,466.0 L1139.2,473.8 L1150.9,481.9 L1163.1,490.1 L1175.5,498.3 L1187.7,506.3 L1199.3,513.9 L1209.9,520.9 L1219.1,527.2 L1227.2,532.9 L1234.5,538.3 L1241.1,543.2 L1247.0,547.7 L1252.2,551.7 L1256.7,555.1 L1260.5,558.1 L1263.7,560.4 L1264.3,559.6 L1261.3,557.1 L1257.6,554.0 L1253.3,550.3 L1248.2,546.1 L1242.5,541.4 L1236.0,536.3 L1228.8,530.7 L1220.9,524.8 L1211.7,518.2 L1201.2,511.0 L1189.8,503.2 L1177.7,495.0 L1165.5,486.6 L1153.5,478.2 L1142.0,469.9 L1131.5,462.0 L1121.5,453.9 L1111.2,445.3 L1101.1,436.5 L1091.4,427.9 L1082.3,419.7 L1073.8,412.8 L1066.5,407.2 L1060.7,403.2Z" fill="#f1a81e" stroke="none" stroke-width="0" stroke-linecap="round" stroke-linejoin="round" /><path d="M1099.5,374.8 L1103.8,378.1 L1109.7,382.1 L1116.8,386.6 L1125.0,391.1 L1133.6,396.0 L1142.3,401.2 L1150.8,406.5 L1158.8,411.8 L1166.5,417.0 L1174.3,422.1 L1182.1,427.2 L1190.0,432.7 L1197.6,438.5 L1205.1,445.0 L1212.2,452.4 L1218.9,460.8 L1225.5,471.1 L1232.1,483.5 L1238.7,497.3 L1244.9,511.5 L1250.7,525.3 L1255.8,537.9 L1260.2,548.5 L1263.5,556.2 L1264.5,555.8 L1261.3,548.0 L1257.1,537.4 L1252.2,524.7 L1246.6,510.8 L1240.5,496.4 L1234.2,482.5 L1227.6,469.8 L1221.1,459.2 L1214.4,450.5 L1207.2,442.8 L1199.7,436.0 L1192.0,429.8 L1184.3,424.2 L1176.5,418.8 L1168.8,413.6 L1161.2,408.2 L1153.3,402.7 L1144.8,397.2 L1136.1,391.8 L1127.5,386.6 L1119.4,381.9 L1111.9,378.2 L1105.4,375.3 L1100.5,373.2Z" fill="#f1a81e" stroke="none" stroke-width="0" stroke-linecap="round" stroke-linejoin="round" /><path d="M1117.6,410.6 L1123.7,415.4 L1132.2,421.1 L1142.8,427.2 L1154.5,434.0 L1166.5,441.3 L1178.4,449.1 L1189.4,457.1 L1199.0,465.1 L1207.6,473.9 L1216.2,484.0 L1224.5,494.9 L1232.3,505.9 L1239.5,516.6 L1245.9,526.2 L1251.3,534.3 L1255.6,540.3 L1256.4,539.7 L1252.4,533.6 L1247.2,525.4 L1241.0,515.6 L1234.0,504.8 L1226.3,493.6 L1218.1,482.5 L1209.7,472.1 L1201.0,462.9 L1191.4,454.6 L1180.4,446.3 L1168.6,438.2 L1156.5,430.5 L1145.0,423.5 L1134.5,417.2 L1125.3,412.6 L1118.4,409.4Z" fill="#f1a81e" stroke="none" stroke-width="0" stroke-linecap="round" stroke-linejoin="round" /><path d="M1185.3,372.5 L1187.3,376.4 L1190.2,381.2 L1193.9,386.7 L1198.4,392.5 L1203.3,399.0 L1208.3,406.0 L1213.3,413.4 L1218.1,421.1 L1223.1,429.7 L1228.4,439.3 L1234.0,449.7 L1239.6,460.5 L1245.0,471.4 L1250.2,481.9 L1254.8,491.7 L1258.8,500.5 L1262.1,508.6 L1265.0,516.5 L1267.5,524.1 L1269.6,531.2 L1271.4,537.7 L1273.0,543.5 L1274.3,548.3 L1275.5,552.1 L1276.5,551.9 L1275.5,548.0 L1274.4,543.1 L1273.0,537.3 L1271.4,530.8 L1269.4,523.5 L1267.1,515.8 L1264.4,507.8 L1261.2,499.5 L1257.4,490.5 L1252.9,480.6 L1248.0,469.9 L1242.7,459.0 L1237.3,448.0 L1231.9,437.5 L1226.7,427.7 L1221.9,418.9 L1217.1,410.9 L1212.2,403.3 L1207.3,396.1 L1202.6,389.5 L1198.1,383.4 L1193.7,378.5 L1189.9,374.5 L1186.7,371.5Z" fill="#f1a81e" stroke="none" stroke-width="0" stroke-linecap="round" stroke-linejoin="round" /><path d="M1223.3,360.4 L1225.1,364.6 L1227.6,369.9 L1230.9,376.1 L1234.9,382.8 L1239.0,390.0 L1243.1,397.6 L1247.0,405.2 L1250.3,412.7 L1253.4,420.4 L1256.4,428.6 L1259.3,437.2 L1262.1,445.9 L1264.7,454.8 L1267.0,463.5 L1269.1,472.0 L1270.9,480.2 L1272.2,488.4 L1273.2,497.1 L1273.9,505.8 L1274.4,514.3 L1274.7,522.3 L1275.0,529.4 L1275.2,535.4 L1275.5,540.0 L1276.5,540.0 L1276.4,535.4 L1276.3,529.4 L1276.2,522.2 L1276.1,514.2 L1275.8,505.7 L1275.2,496.9 L1274.4,488.2 L1273.1,479.8 L1271.5,471.5 L1269.6,462.9 L1267.4,454.0 L1264.9,445.1 L1262.3,436.2 L1259.5,427.5 L1256.6,419.2 L1253.7,411.3 L1250.4,403.6 L1246.7,395.7 L1242.7,388.0 L1238.6,380.7 L1234.7,373.8 L1230.8,368.0 L1227.4,363.2 L1224.7,359.6Z" fill="#f1a81e" stroke="none" stroke-width="0" stroke-linecap="round" stroke-linejoin="round" /><path d="M1275.4,340.5 L1278.3,345.2 L1282.7,350.5 L1288.5,356.1 L1294.8,362.6 L1301.3,370.1 L1307.6,378.9 L1313.5,389.0 L1318.6,400.5 L1323.1,415.0 L1327.6,432.9 L1331.8,453.0 L1335.8,473.9 L1339.4,494.4 L1342.6,513.1 L1345.3,528.8 L1347.5,540.1 L1348.5,539.9 L1346.6,528.5 L1344.1,512.8 L1341.1,494.1 L1337.7,473.6 L1334.0,452.6 L1330.0,432.4 L1325.8,414.3 L1321.4,399.5 L1316.4,387.5 L1310.6,377.0 L1304.2,367.9 L1297.7,359.9 L1291.5,353.1 L1285.9,347.3 L1280.7,343.0 L1276.6,339.5Z" fill="#f1a81e" stroke="none" stroke-width="0" stroke-linecap="round" stroke-linejoin="round" /><path d="M1323.3,466.2 L1323.3,470.5 L1323.9,476.2 L1325.4,482.8 L1327.0,490.2 L1328.8,497.9 L1330.7,505.8 L1332.6,513.4 L1334.5,520.4 L1336.6,527.3 L1338.9,534.7 L1341.3,542.3 L1343.8,549.7 L1346.2,556.7 L1348.3,562.9 L1350.1,568.2 L1351.5,572.2 L1352.5,571.8 L1351.3,567.8 L1349.7,562.5 L1347.8,556.1 L1345.7,549.1 L1343.5,541.6 L1341.3,534.0 L1339.2,526.6 L1337.5,519.6 L1335.8,512.6 L1334.1,505.0 L1332.5,497.1 L1331.0,489.3 L1329.5,481.9 L1328.3,475.3 L1326.5,469.8 L1324.7,465.8Z" fill="#f1a81e" stroke="none" stroke-width="0" stroke-linecap="round" stroke-linejoin="round" /><path d="M1191.7,540.9 L1194.4,542.8 L1198.2,544.7 L1203.0,546.0 L1208.3,547.5 L1213.8,549.1 L1219.3,550.7 L1224.6,552.3 L1229.3,553.9 L1233.8,555.5 L1238.5,557.3 L1243.2,559.2 L1247.8,561.1 L1252.0,562.9 L1255.9,564.6 L1259.1,565.9 L1261.6,566.9 L1262.4,565.1 L1260.0,563.9 L1256.9,562.3 L1253.2,560.4 L1249.0,558.4 L1244.5,556.2 L1239.9,554.1 L1235.2,552.0 L1230.7,550.1 L1226.0,548.3 L1220.7,546.4 L1215.2,544.6 L1209.7,542.7 L1204.5,541.0 L1199.8,539.5 L1195.5,539.1 L1192.3,539.1Z" fill="#f1a81e" stroke="none" stroke-width="0" stroke-linecap="round" stroke-linejoin="round" /><path d="M899.0,480.1 L898.5,486.3 L898.2,494.5 L898.1,504.3 L898.8,515.2 L899.6,526.7 L900.4,538.3 L901.3,549.7 L902.3,560.2 L903.4,570.4 L904.6,580.7 L905.8,591.1 L907.1,601.5 L908.5,611.7 L910.0,621.7 L911.6,631.3 L913.2,640.3 L915.0,649.2 L917.2,658.2 L919.4,667.0 L921.8,675.4 L924.0,683.1 L926.0,690.0 L927.7,695.8 L929.0,700.3 L931.0,699.7 L929.9,695.2 L928.4,689.4 L926.5,682.4 L924.5,674.6 L922.4,666.2 L920.3,657.4 L918.4,648.5 L916.8,639.7 L915.4,630.7 L914.1,621.1 L912.8,611.2 L911.6,601.0 L910.5,590.6 L909.5,580.2 L908.5,569.9 L907.7,559.8 L906.9,549.2 L906.1,537.9 L905.5,526.3 L905.0,514.8 L904.5,504.0 L903.4,494.2 L902.2,486.1 L901.0,479.9Z" fill="#f1a81e" stroke="none" stroke-width="0" stroke-linecap="round" stroke-linejoin="round" /><path d="M885.4,600.1 L885.4,604.8 L885.8,611.2 L887.0,618.6 L888.3,626.8 L889.6,635.5 L891.0,644.2 L892.4,652.5 L893.8,660.2 L895.1,667.7 L896.6,675.6 L898.2,683.6 L899.7,691.4 L901.2,698.8 L902.5,705.4 L903.6,710.9 L904.5,715.1 L905.5,714.9 L904.8,710.7 L903.9,705.1 L902.7,698.5 L901.4,691.1 L900.1,683.2 L898.7,675.2 L897.4,667.3 L896.2,659.8 L895.1,652.1 L893.9,643.7 L892.7,635.0 L891.5,626.3 L890.4,618.1 L889.4,610.6 L888.0,604.5 L886.6,599.9Z" fill="#f1a81e" stroke="none" stroke-width="0" stroke-linecap="round" stroke-linejoin="round" /><path d="M1299.2,599.7 L1297.0,603.2 L1294.4,607.9 L1291.6,613.6 L1289.0,620.3 L1286.2,627.4 L1283.4,634.7 L1280.6,642.1 L1278.0,649.2 L1275.4,656.3 L1272.7,663.7 L1270.0,671.3 L1267.2,679.1 L1264.5,686.9 L1261.8,694.6 L1259.2,702.2 L1256.7,709.6 L1254.3,717.1 L1251.7,725.0 L1249.2,733.1 L1246.8,741.0 L1244.5,748.4 L1242.5,755.0 L1240.8,760.6 L1239.5,764.8 L1240.5,765.2 L1241.9,761.0 L1243.8,755.5 L1246.0,748.9 L1248.5,741.5 L1251.1,733.7 L1253.9,725.7 L1256.6,717.9 L1259.3,710.4 L1261.9,703.2 L1264.7,695.6 L1267.6,688.0 L1270.5,680.3 L1273.5,672.6 L1276.4,665.1 L1279.2,657.8 L1282.0,650.8 L1284.8,643.8 L1287.8,636.5 L1290.8,629.2 L1293.8,622.2 L1296.5,615.7 L1298.5,609.6 L1299.9,604.4 L1300.8,600.3Z" fill="#f1a81e" stroke="none" stroke-width="0" stroke-linecap="round" stroke-linejoin="round" /><path d="M1329.4,619.9 L1328.0,622.8 L1326.7,626.8 L1325.7,631.7 L1324.7,637.1 L1323.4,642.9 L1322.1,648.7 L1320.5,654.3 L1318.8,659.6 L1316.8,664.8 L1314.3,670.5 L1311.5,676.3 L1308.6,682.1 L1305.8,687.6 L1303.2,692.5 L1301.1,696.6 L1299.6,699.8 L1300.4,700.2 L1302.1,697.2 L1304.4,693.1 L1307.2,688.3 L1310.1,682.9 L1313.2,677.2 L1316.2,671.4 L1318.9,665.7 L1321.2,660.4 L1323.1,655.1 L1324.8,649.4 L1326.4,643.6 L1327.8,637.9 L1329.1,632.4 L1330.2,627.6 L1330.6,623.4 L1330.6,620.1Z" fill="#f1a81e" stroke="none" stroke-width="0" stroke-linecap="round" stroke-linejoin="round" /><path d="M932.0,444.0 C946.7,453.3 992.0,484.0 1020.0,500.0 C1048.0,516.0 1076.7,532.0 1100.0,540.0 C1123.3,548.0 1150.0,546.7 1160.0,548.0" fill="none" stroke="#5e4e38" stroke-width="1.6" stroke-linecap="round" stroke-linejoin="round" /><path d="M976.0,476.0 C983.3,474.3 1006.0,468.0 1020.0,466.0 C1034.0,464.0 1053.3,464.3 1060.0,464.0" fill="none" stroke="#5e4e38" stroke-width="1.6" stroke-linecap="round" stroke-linejoin="round" /><path d="M1240.0,358.0 C1246.0,365.0 1267.7,379.7 1276.0,400.0 C1284.3,420.3 1287.3,456.7 1290.0,480.0 C1292.7,503.3 1291.7,530.0 1292.0,540.0" fill="none" stroke="#5e4e38" stroke-width="1.6" stroke-linecap="round" stroke-linejoin="round" /><path d="M1100.0,374.0 C1113.3,383.3 1156.7,409.0 1180.0,430.0 C1203.3,451.0 1226.3,479.0 1240.0,500.0 C1253.7,521.0 1258.3,546.7 1262.0,556.0" fill="none" stroke="#5e4e38" stroke-width="1.6" stroke-linecap="round" stroke-linejoin="round" /><path d="M1008.0,402.0 C1016.7,410.0 1041.3,433.7 1060.0,450.0 C1078.7,466.3 1110.0,491.7 1120.0,500.0" fill="none" stroke="#5e4e38" stroke-width="1.6" stroke-linecap="round" stroke-linejoin="round" /><path d="M902.0,650.0 C897.5,641.7 882.3,625.0 875.0,600.0 C867.7,575.0 860.8,524.2 858.0,500.0 C855.2,475.8 856.5,471.8 858.0,455.0 C859.5,438.2 862.5,415.2 867.0,399.0 C871.5,382.8 876.3,371.2 885.0,358.0 C893.7,344.8 904.0,333.8 919.0,320.0 C934.0,306.2 950.7,286.3 975.0,275.0 C999.3,263.7 1038.7,255.0 1065.0,252.0 C1091.3,249.0 1110.5,252.3 1133.0,257.0 C1155.5,261.7 1179.3,270.2 1200.0,280.0 C1220.7,289.8 1240.0,301.8 1257.0,316.0 C1274.0,330.2 1289.0,345.5 1302.0,365.0 C1315.0,384.5 1327.2,410.5 1335.0,433.0 C1342.8,455.5 1345.7,476.3 1349.0,500.0 C1352.3,523.7 1354.0,562.5 1355.0,575.0" fill="none" stroke="#4e3f35" stroke-width="3" stroke-linecap="round" stroke-linejoin="round" /><path d="M918.0,353.0 C911.3,356.3 871.8,355.5 855.0,350.0 C838.2,344.5 826.2,331.7 817.0,320.0 C807.8,308.3 801.2,293.0 800.0,280.0 C798.8,267.0 803.8,252.8 810.0,242.0 C816.2,231.2 826.2,220.5 837.0,215.0 C847.8,209.5 863.7,208.7 875.0,209.0 C886.3,209.3 896.3,211.8 905.0,217.0 C913.7,222.2 922.0,232.7 927.0,240.0 C932.0,247.3 937.5,257.7 935.0,261.0 C932.5,264.3 919.2,256.8 912.0,260.0 C904.8,263.2 896.2,272.5 892.0,280.0 C887.8,287.5 886.5,296.7 887.0,305.0 C887.5,313.3 889.8,322.0 895.0,330.0 C900.2,338.0 924.7,349.7 918.0,353.0Z" fill="#fbf883" stroke="none" stroke-width="0" stroke-linecap="round" stroke-linejoin="round" /><path d="M918.0,353.0 C911.3,356.3 871.8,355.5 855.0,350.0 C838.2,344.5 826.2,331.7 817.0,320.0 C807.8,308.3 801.2,293.0 800.0,280.0 C798.8,267.0 803.8,252.8 810.0,242.0 C816.2,231.2 826.2,220.5 837.0,215.0 C847.8,209.5 863.7,208.7 875.0,209.0 C886.3,209.3 896.3,211.8 905.0,217.0 C913.7,222.2 922.0,232.7 927.0,240.0 C932.0,247.3 937.5,257.7 935.0,261.0 C932.5,264.3 919.2,256.8 912.0,260.0 C904.8,263.2 896.2,272.5 892.0,280.0 C887.8,287.5 886.5,296.7 887.0,305.0 C887.5,313.3 889.8,322.0 895.0,330.0 C900.2,338.0 924.7,349.7 918.0,353.0Z" fill="none" stroke="#4e3f35" stroke-width="3" stroke-linecap="round" stroke-linejoin="round" /><path d="M935.0,253.0 C930.0,251.3 914.2,247.7 905.0,250.0 C895.8,252.3 885.8,260.0 880.0,267.0 C874.2,274.0 870.5,283.2 870.0,292.0 C869.5,300.8 872.8,312.3 877.0,320.0 C881.2,327.7 892.8,338.8 895.0,338.0 C897.2,337.2 891.3,323.3 890.0,315.0 C888.7,306.7 885.3,296.0 887.0,288.0 C888.7,280.0 895.0,272.0 900.0,267.0 C905.0,262.0 911.2,259.2 917.0,258.0 C922.8,256.8 932.0,260.8 935.0,260.0 C938.0,259.2 940.0,254.7 935.0,253.0Z" fill="#f1a81e" stroke="none" stroke-width="0" stroke-linecap="round" stroke-linejoin="round" /><path d="M835.0,275.0 C839.2,280.8 849.2,298.3 860.0,310.0 C870.8,321.7 893.3,339.2 900.0,345.0" fill="none" stroke="#6a5a40" stroke-width="1.5" stroke-linecap="round" stroke-linejoin="round" /><path d="M410.0,606.0 L433.0,591.0 L463.0,586.0 L489.0,640.0 L577.0,648.0 L620.0,660.0 L645.0,665.0 L666.0,729.0 L690.0,780.0 L714.0,829.0 L725.0,857.0 L680.0,890.0 L620.0,915.0 L589.0,925.0 L577.0,843.0 L580.0,768.0 L562.0,742.0 L530.0,750.0 L494.0,759.0 L468.0,754.0 L463.0,742.0 L458.0,722.0 L452.0,700.0 L445.0,680.0 L436.0,665.0 L420.0,640.0Z" fill="#fef6e7" stroke="none" stroke-width="0" stroke-linecap="round" stroke-linejoin="round" /><path d="M640.0,665.0 C636.7,674.2 626.7,697.5 620.0,720.0 C613.3,742.5 604.7,774.8 600.0,800.0 C595.3,825.2 593.3,859.2 592.0,871.0" fill="none" stroke="#f7d2c8" stroke-width="5" stroke-linecap="round" stroke-linejoin="round" /><path d="M580.0,772.0 C580.8,781.7 583.0,808.7 585.0,830.0 C587.0,851.3 590.8,888.3 592.0,900.0" fill="none" stroke="#f7d2c8" stroke-width="6" stroke-linecap="round" stroke-linejoin="round" /><path d="M700.0,790.0 C702.3,796.5 710.3,817.3 714.0,829.0 C717.7,840.7 720.7,854.8 722.0,860.0" fill="none" stroke="#f7d2c8" stroke-width="6" stroke-linecap="round" stroke-linejoin="round" /><path d="M557.0,741.0 C562.5,744.2 579.5,758.5 590.0,760.0 C600.5,761.5 615.0,751.7 620.0,750.0" fill="none" stroke="#f7d2c8" stroke-width="4" stroke-linecap="round" stroke-linejoin="round" /><path d="M489.0,640.0 L540.0,648.0 L520.0,665.0 L495.0,660.0Z" fill="#f7d2c8" stroke="none" stroke-width="0" stroke-linecap="round" stroke-linejoin="round" /><path d="M428.0,520.0 L500.0,500.0 L565.0,492.0 L680.0,505.0 L797.0,534.0 L800.0,600.0 L798.0,700.0 L780.0,760.0 L760.0,794.0 L725.0,857.0 L714.0,829.0 L690.0,780.0 L666.0,729.0 L645.0,665.0 L683.0,614.0 L680.0,557.0 L631.0,517.0 L617.0,654.0 L577.0,648.0 L489.0,640.0 L463.0,586.0 L433.0,591.0 L425.0,560.0Z" fill="#fbf883" stroke="none" stroke-width="0" stroke-linecap="round" stroke-linejoin="round" /><path d="M577.0,648.0 L620.0,656.0 L610.0,700.0 L595.0,740.0 L575.0,790.0 L557.0,774.0 L534.0,800.0 L540.0,745.0 L525.0,690.0 L505.0,655.0Z" fill="#fbf883" stroke="none" stroke-width="0" stroke-linecap="round" stroke-linejoin="round" /><path d="M631.0,517.0 C637.3,513.2 651.8,517.3 660.0,522.0 C668.2,526.7 676.2,533.7 680.0,545.0 C683.8,556.3 684.7,574.2 683.0,590.0 C681.3,605.8 676.3,627.8 670.0,640.0 C663.7,652.2 653.3,659.7 645.0,663.0 C636.7,666.3 624.5,670.5 620.0,660.0 C615.5,649.5 617.7,619.2 618.0,600.0 C618.3,580.8 619.8,558.8 622.0,545.0 C624.2,531.2 624.7,520.8 631.0,517.0Z" fill="#fef6e7" stroke="none" stroke-width="0" stroke-linecap="round" stroke-linejoin="round" /><path d="M631.0,517.0 C635.8,517.8 651.8,517.3 660.0,522.0 C668.2,526.7 676.2,533.7 680.0,545.0 C683.8,556.3 684.7,574.2 683.0,590.0 C681.3,605.8 676.3,627.8 670.0,640.0 C663.7,652.2 653.3,659.7 645.0,663.0 C636.7,666.3 624.2,660.5 620.0,660.0" fill="none" stroke="#4e3f35" stroke-width="2" stroke-linecap="round" stroke-linejoin="round" /><path d="M640,540 C660,545 670,565 668,585 M632,600 C648,612 650,630 640,645 M630,560 L648,590" fill="none" stroke="#8a6a68" stroke-width="2" stroke-linecap="round" stroke-linejoin="round" /><path d="M640.0,610.0 C642.5,605.8 652.5,610.0 655.0,615.0 C657.5,620.0 657.5,635.8 655.0,640.0 C652.5,644.2 642.5,645.0 640.0,640.0 C637.5,635.0 637.5,614.2 640.0,610.0Z" fill="#f2c8c0" stroke="none" stroke-width="0" stroke-linecap="round" stroke-linejoin="round" /><path d="M437.0,454.0 L440.0,420.0 L466.0,380.0 L523.0,340.0 L603.0,330.0 L666.0,340.0 L737.0,369.0 L694.0,386.0 L563.0,449.0Z" fill="#fbf883" stroke="none" stroke-width="0" stroke-linecap="round" stroke-linejoin="round" /><path d="M437.0,454.0 C458.0,453.2 520.2,460.3 563.0,449.0 C605.8,437.7 672.2,396.5 694.0,386.0" fill="none" stroke="#f1a81e" stroke-width="3" stroke-linecap="round" stroke-linejoin="round" /><path d="M428.0,520.0 C450.8,515.5 503.5,490.7 565.0,493.0 C626.5,495.3 758.3,527.2 797.0,534.0" fill="none" stroke="#f1a81e" stroke-width="3" stroke-linecap="round" stroke-linejoin="round" /><path d="M500.0,350.0 C516.7,347.7 566.7,335.7 600.0,336.0 C633.3,336.3 673.3,343.0 700.0,352.0 C726.7,361.0 745.0,375.3 760.0,390.0 C775.0,404.7 783.3,418.3 790.0,440.0 C796.7,461.7 798.3,506.7 800.0,520.0" fill="none" stroke="#f1a81e" stroke-width="3" stroke-linecap="round" stroke-linejoin="round" /><path d="M433.0,520.0 C435.0,526.7 437.2,545.0 445.0,560.0 C452.8,575.0 467.5,597.5 480.0,610.0 C492.5,622.5 506.7,629.2 520.0,635.0 C533.3,640.8 553.3,643.3 560.0,645.0" fill="none" stroke="#f1a81e" stroke-width="8" stroke-linecap="round" stroke-linejoin="round" /><path d="M490.0,560.0 C495.0,566.7 508.3,587.5 520.0,600.0 C531.7,612.5 546.7,626.7 560.0,635.0 C573.3,643.3 593.3,647.5 600.0,650.0" fill="none" stroke="#f1a81e" stroke-width="5" stroke-linecap="round" stroke-linejoin="round" /><path d="M540.0,490.0 C545.0,501.7 560.0,536.7 570.0,560.0 C580.0,583.3 591.7,614.2 600.0,630.0 C608.3,645.8 616.7,650.8 620.0,655.0" fill="none" stroke="#f1a81e" stroke-width="4" stroke-linecap="round" stroke-linejoin="round" /><path d="M700.0,500.0 C703.3,510.0 713.3,536.7 720.0,560.0 C726.7,583.3 734.2,606.7 740.0,640.0 C745.8,673.3 752.5,740.0 755.0,760.0" fill="none" stroke="#f1a81e" stroke-width="5" stroke-linecap="round" stroke-linejoin="round" /><path d="M750.0,520.0 C753.3,533.3 765.8,570.0 770.0,600.0 C774.2,630.0 776.7,668.3 775.0,700.0 C773.3,731.7 762.5,775.0 760.0,790.0" fill="none" stroke="#f1a81e" stroke-width="5" stroke-linecap="round" stroke-linejoin="round" /><path d="M620.0,470.0 L650.0,520.0" fill="none" stroke="#f1a81e" stroke-width="4" stroke-linecap="round" stroke-linejoin="round" /><path d="M560.0,690.0 C559.2,698.3 558.3,723.3 555.0,740.0 C551.7,756.7 542.5,781.7 540.0,790.0" fill="none" stroke="#f1a81e" stroke-width="4" stroke-linecap="round" stroke-linejoin="round" /><path d="M690.0,630.0 C692.5,641.7 700.3,675.0 705.0,700.0 C709.7,725.0 714.2,755.0 718.0,780.0 C721.8,805.0 726.3,838.3 728.0,850.0" fill="none" stroke="#f1a81e" stroke-width="4" stroke-linecap="round" stroke-linejoin="round" /><path d="M780.0,560.0 C781.7,575.0 790.0,620.0 790.0,650.0 C790.0,680.0 781.7,725.0 780.0,740.0" fill="none" stroke="#f1a81e" stroke-width="3" stroke-linecap="round" stroke-linejoin="round" /><path d="M548.0,470.0 L560.0,500.0" fill="none" stroke="#f1a81e" stroke-width="3" stroke-linecap="round" stroke-linejoin="round" /><path d="M440.0,580.0 C446.7,587.5 463.3,613.7 480.0,625.0 C496.7,636.3 520.0,643.0 540.0,648.0 C560.0,653.0 590.0,653.8 600.0,655.0" fill="none" stroke="#6a5a40" stroke-width="1.5" stroke-linecap="round" stroke-linejoin="round" /><path d="M612.0,478.0 C618.3,488.3 637.0,513.0 650.0,540.0 C663.0,567.0 680.0,603.3 690.0,640.0 C700.0,676.7 706.7,740.0 710.0,760.0" fill="none" stroke="#6a5a40" stroke-width="1.5" stroke-linecap="round" stroke-linejoin="round" /><path d="M725.0,500.0 C730.8,516.7 752.2,566.7 760.0,600.0 C767.8,633.3 770.3,666.7 772.0,700.0 C773.7,733.3 770.3,783.3 770.0,800.0" fill="none" stroke="#6a5a40" stroke-width="1.5" stroke-linecap="round" stroke-linejoin="round" /><path d="M520.0,480.0 C526.7,493.3 546.7,533.3 560.0,560.0 C573.3,586.7 593.3,626.7 600.0,640.0" fill="none" stroke="#6a5a40" stroke-width="1.5" stroke-linecap="round" stroke-linejoin="round" /><path d="M423.0,523.0 C425.3,508.7 429.8,460.8 437.0,437.0 C444.2,413.2 451.7,396.2 466.0,380.0 C480.3,363.8 500.2,348.3 523.0,340.0 C545.8,331.7 579.2,330.0 603.0,330.0 C626.8,330.0 643.7,333.5 666.0,340.0 C688.3,346.5 718.0,352.8 737.0,369.0 C756.0,385.2 769.5,406.7 780.0,437.0 C790.5,467.3 796.7,523.8 800.0,551.0 C803.3,578.2 800.3,575.2 800.0,600.0 C799.7,624.8 801.3,673.3 798.0,700.0 C794.7,726.7 786.3,744.3 780.0,760.0 C773.7,775.7 763.3,788.3 760.0,794.0" fill="none" stroke="#4e3f35" stroke-width="2.5" stroke-linecap="round" stroke-linejoin="round" /><path d="M423.0,523.0 C423.8,529.2 426.3,548.7 428.0,560.0 C429.7,571.3 432.2,585.8 433.0,591.0" fill="none" stroke="#4e3f35" stroke-width="2" stroke-linecap="round" stroke-linejoin="round" /><path d="M434.0,591.0 C431.3,592.0 422.0,594.5 418.0,597.0 C414.0,599.5 409.7,598.8 410.0,606.0 C410.3,613.2 415.7,630.2 420.0,640.0 C424.3,649.8 431.8,658.3 436.0,665.0 C440.2,671.7 442.3,674.2 445.0,680.0 C447.7,685.8 449.8,693.0 452.0,700.0 C454.2,707.0 456.2,715.0 458.0,722.0 C459.8,729.0 461.3,736.7 463.0,742.0 C464.7,747.3 462.8,751.2 468.0,754.0 C473.2,756.8 483.7,759.7 494.0,759.0 C504.3,758.3 518.7,752.8 530.0,750.0 C541.3,747.2 553.7,739.0 562.0,742.0 C570.3,745.0 577.0,763.7 580.0,768.0" fill="none" stroke="#4e3f35" stroke-width="2.5" stroke-linecap="round" stroke-linejoin="round" /><path d="M463.0,586.0 C467.3,595.0 470.0,629.7 489.0,640.0 C508.0,650.3 562.3,646.7 577.0,648.0" fill="none" stroke="#4e3f35" stroke-width="1.5" stroke-linecap="round" stroke-linejoin="round" /><path d="M714.0,829.0 L725.0,857.0" fill="none" stroke="#4e3f35" stroke-width="2" stroke-linecap="round" stroke-linejoin="round" /><path d="M500.0,378.0 C499.2,379.7 484.7,381.0 475.0,375.0 C465.3,369.0 451.2,355.8 442.0,342.0 C432.8,328.2 423.3,307.3 420.0,292.0 C416.7,276.7 418.3,261.7 422.0,250.0 C425.7,238.3 433.2,227.8 442.0,222.0 C450.8,216.2 465.3,215.3 475.0,215.0 C484.7,214.7 492.5,216.7 500.0,220.0 C507.5,223.3 515.7,228.3 520.0,235.0 C524.3,241.7 525.3,253.7 526.0,260.0 C526.7,266.3 526.7,271.8 524.0,273.0 C521.3,274.2 516.2,265.0 510.0,267.0 C503.8,269.0 493.3,277.8 487.0,285.0 C480.7,292.2 474.2,300.5 472.0,310.0 C469.8,319.5 472.7,332.8 474.0,342.0 C475.3,351.2 475.7,359.0 480.0,365.0 C484.3,371.0 500.8,376.3 500.0,378.0Z" fill="#fbf883" stroke="none" stroke-width="0" stroke-linecap="round" stroke-linejoin="round" /><path d="M500.0,378.0 C499.2,379.7 484.7,381.0 475.0,375.0 C465.3,369.0 451.2,355.8 442.0,342.0 C432.8,328.2 423.3,307.3 420.0,292.0 C416.7,276.7 418.3,261.7 422.0,250.0 C425.7,238.3 433.2,227.8 442.0,222.0 C450.8,216.2 465.3,215.3 475.0,215.0 C484.7,214.7 492.5,216.7 500.0,220.0 C507.5,223.3 515.7,228.3 520.0,235.0 C524.3,241.7 525.3,253.7 526.0,260.0 C526.7,266.3 526.7,271.8 524.0,273.0 C521.3,274.2 516.2,265.0 510.0,267.0 C503.8,269.0 493.3,277.8 487.0,285.0 C480.7,292.2 474.2,300.5 472.0,310.0 C469.8,319.5 472.7,332.8 474.0,342.0 C475.3,351.2 475.7,359.0 480.0,365.0 C484.3,371.0 500.8,376.3 500.0,378.0Z" fill="none" stroke="#4e3f35" stroke-width="2.5" stroke-linecap="round" stroke-linejoin="round" /><path d="M526.0,262.0 C523.7,259.5 516.0,257.3 510.0,259.0 C504.0,260.7 496.5,265.8 490.0,272.0 C483.5,278.2 474.8,288.0 471.0,296.0 C467.2,304.0 466.3,319.0 467.0,320.0 C467.7,321.0 471.2,308.2 475.0,302.0 C478.8,295.8 484.2,288.7 490.0,283.0 C495.8,277.3 504.3,269.5 510.0,268.0 C515.7,266.5 521.3,275.0 524.0,274.0 C526.7,273.0 528.3,264.5 526.0,262.0Z" fill="#f1a81e" stroke="none" stroke-width="0" stroke-linecap="round" stroke-linejoin="round" /><path d="M490.0,372.0 C492.0,370.0 498.3,363.7 502.0,360.0 C505.7,356.3 510.3,351.7 512.0,350.0" fill="none" stroke="#f1a81e" stroke-width="5" stroke-linecap="round" stroke-linejoin="round" /></g></svg><div style="position:absolute;left:1828px;top:161px;width:13px;height:1581px;background:#5a5b5e;border-left:1px solid #6e6e70;box-sizing:border-box;"></div><div style="position:absolute;left:1829px;top:633px;width:11px;height:627px;background:#696a6d;border:1px solid #74757a;"></div><div style="position:absolute;left:1831px;top:943px;width:7px;height:5px;border-top:1px solid #444;border-bottom:1px solid #444;"></div><div style="position:absolute;left:0px;top:1729px;width:1828px;height:13px;background:#58595c;border-top:1px solid #454545;box-sizing:border-box;"></div><div style="position:absolute;left:0px;top:1729px;width:305px;height:13px;background:#6a6a6c;"></div><div style="position:absolute;left:4px;top:1722px;font-size:19px;line-height:22px;color:#f0f0f0;white-space:nowrap;font-weight:bold;letter-spacing:1px;">42.7</div><div style="position:absolute;left:163px;top:1722px;font-size:19px;line-height:22px;color:#f0f0f0;white-space:nowrap;font-weight:bold;letter-spacing:1px;">0.0</div><div style="position:absolute;left:70px;top:1731px;width:80px;height:10px;background:#2e2e2e;clip-path:polygon(0 100%,100% 0,100% 100%);"></div><div style="position:absolute;left:232px;top:1731px;width:70px;height:10px;background:#2e2e2e;clip-path:polygon(0 100%,0 0,100% 100%);"></div><div style="position:absolute;left:706px;top:1731px;width:721px;height:11px;background:#5e5f62;border-top:1px solid #78797c;border-left:1px solid #78797c;box-sizing:border-box;"></div><div style="position:absolute;left:0px;top:1743px;width:2736px;height:14px;background:#161614;"></div><div style="position:absolute;left:0px;top:1743px;width:96px;height:14px;background:#141810;"></div><div style="position:absolute;left:96px;top:1743px;width:688px;height:14px;background:#303030;"></div><div style="position:absolute;left:784px;top:1743px;width:396px;height:14px;background:linear-gradient(90deg,#1c1b16,#201c18 60%,#1a1616);"></div><div style="position:absolute;left:1180px;top:1743px;width:96px;height:14px;background:#303030;"></div><div style="position:absolute;left:1276px;top:1743px;width:824px;height:14px;background:linear-gradient(90deg,#1c1a18,#141618 40%,#181814 70%,#1c1812);"></div><div style="position:absolute;left:2100px;top:1743px;width:636px;height:14px;background:linear-gradient(90deg,#0c0c0a,#12120c 40%,#0c0e0c);"></div><div style="position:absolute;left:2727px;top:1744px;width:2px;height:13px;background:#ccc;"></div><div style="position:absolute;left:1841px;top:137px;width:77px;height:41px;background:linear-gradient(#414143,#2e2e30);"></div><div style="position:absolute;left:1841px;top:137px;width:42px;height:41px;background:#38383a;border-top:1px solid #76777a;"></div><svg style="position:absolute;left:1855px;top:155px" width="20" height="18"><path d="M0 1L7 8.5L0 16Z" fill="#8d8d8f"/><rect x="9" y="1" width="10" height="3" fill="#8d8d8f"/><rect x="9" y="7" width="10" height="3" fill="#8d8d8f"/><rect x="9" y="13" width="10" height="3" fill="#8d8d8f"/></svg><div style="position:absolute;left:1883px;top:147px;width:35px;height:32px;background:#626367;border-top:1px solid #78797c;border-left:1px solid #727376;border-right:1px solid #48494b;"></div><svg style="position:absolute;left:1904px;top:147px;overflow:visible" width="16" height="34" viewBox="0 0 16 34"><path d="M8 0L14 18Q14 24 8 26Q2 24 2 18Z" fill="#e8e8e8" stroke="#111" stroke-width="1.5"/><path d="M8 6V20" stroke="#111" stroke-width="2"/><path d="M3 28H13L15 34H1Z" fill="#111"/></svg><div style="position:absolute;left:1841px;top:178px;width:77px;height:12px;background:#626367;"></div><div style="position:absolute;left:1841px;top:189px;width:77px;height:1553px;background:#68696c;border-left:1px solid #535456;"></div><div style="position:absolute;left:1843px;top:189px;width:75px;height:497px;border:1px solid #505153;border-top:1px solid #505153;"></div><div style="position:absolute;left:1843px;top:686px;width:75px;height:427px;border:1px solid #505153;"></div><div style="position:absolute;left:1843px;top:1113px;width:75px;height:498px;border:1px solid #505153;"></div><div style="position:absolute;left:1846px;top:1468px;width:68px;height:64px;background:linear-gradient(#7c919c,#5f7482);border:1px solid #8aa0ab;"></div><svg style="position:absolute;left:1860px;top:204px;overflow:visible" width="40" height="40" viewBox="0 0 40 40"><circle cx="17" cy="15" r="11" fill="none" stroke="#f4f4f4" stroke-width="4"/><circle cx="17" cy="15" r="13" fill="none" stroke="#555" stroke-width="1"/><path d="M25 24L33 32" stroke="#444" stroke-width="5" stroke-linecap="round"/><ellipse cx="14" cy="18" rx="3" ry="2" fill="#222"/></svg><svg style="position:absolute;left:1860px;top:275px;overflow:visible" width="40" height="40" viewBox="0 0 40 40"><path d="M10 38Q4 30 2 22L5 20L11 26V8Q11 5 13 5Q15 5 15 8V20L16 2Q18 0 20 2L20 20L22 4Q24 2 26 4L25 21L29 9Q31 7 33 9L30 26Q28 34 24 38Z" fill="#f6f6f6"/></svg><svg style="position:absolute;left:1860px;top:345px;overflow:visible" width="40" height="40" viewBox="0 0 40 40"><path d="M3 24L17 12L30 26L17 36Z" fill="#f2f2f2"/><path d="M15 22L30 8L28 16L36 16Z" fill="#333" stroke="#fff" stroke-width="1.5"/></svg><svg style="position:absolute;left:1858px;top:414px;overflow:visible" width="44" height="44" viewBox="0 0 44 44"><path d="M2 2L14 8L9 10L16 16L13 18L7 12L4 16Z" fill="#4a4a4a" stroke="#555" stroke-width="1"/><path d="M22 10V38M8 24H36" stroke="#4a4a4a" stroke-width="3"/><path d="M22 6L26 12H18Z M22 42L26 36H18Z M4 24L10 20V28Z M40 24L34 20V28Z" fill="#4a4a4a"/></svg><svg style="position:absolute;left:1860px;top:485px;overflow:visible" width="40" height="40" viewBox="0 0 40 40"><ellipse cx="20" cy="16" rx="17" ry="10" fill="none" stroke="#4d4d4f" stroke-width="2.5"/><path d="M6 22Q3 28 7 28" stroke="#4d4d4f" stroke-width="2.5" fill="none"/></svg><svg style="position:absolute;left:1860px;top:554px;overflow:visible" width="40" height="40" viewBox="0 0 40 40"><path d="M18 18L32 32" stroke="#e8e8e8" stroke-width="2.5"/><path d="M16 2L19 13L30 16L19 19L16 30L13 19L2 16L13 13Z" fill="#f0f0f0" stroke="#555" stroke-width="0.8"/></svg><svg style="position:absolute;left:1860px;top:624px;overflow:visible" width="40" height="40" viewBox="0 0 40 40"><circle cx="26" cy="8" r="5" fill="#444"/><path d="M24 12L8 34L10 36L27 14Z" fill="#eee" stroke="#333" stroke-width="1.5"/></svg><svg style="position:absolute;left:1860px;top:702px;overflow:visible" width="40" height="40" viewBox="0 0 40 40"><rect x="0" y="0" width="40" height="40" fill="#050505"/><circle cx="20" cy="20" r="17" fill="#777"/><circle cx="20" cy="20" r="11" fill="#ccc"/><circle cx="20" cy="20" r="6" fill="#fff"/></svg><svg style="position:absolute;left:1860px;top:773px;overflow:visible" width="40" height="40" viewBox="0 0 40 40"><path d="M10 4L20 0L28 14L26 34L22 38L8 20Z" fill="#f0f0f0" stroke="#333" stroke-width="1.5"/><path d="M22 32L26 38" stroke="#111" stroke-width="3"/></svg><svg style="position:absolute;left:1860px;top:842px;overflow:visible" width="40" height="40" viewBox="0 0 40 40"><path d="M30 2L36 8L18 24L14 20Z" fill="#eee" stroke="#444" stroke-width="1.2"/><path d="M14 20Q4 22 6 32Q12 36 20 26Z" fill="#fff" stroke="#222" stroke-width="1.5"/><path d="M6 34L40 36L28 28Z" fill="#888" opacity="0.6"/></svg><svg style="position:absolute;left:1860px;top:913px;overflow:visible" width="40" height="40" viewBox="0 0 40 40"><path d="M10 26H28V36H10Z" fill="#eee" stroke="#333" stroke-width="1.2"/><path d="M12 20H26V26H12Z" fill="#444"/><rect x="17" y="12" width="4" height="8" fill="#555"/><path d="M22 14L38 6V26Z" fill="none" stroke="#444" stroke-width="1.5" stroke-dasharray="2 2"/></svg><svg style="position:absolute;left:1860px;top:984px;overflow:visible" width="40" height="40" viewBox="0 0 40 40"><path d="M18 2L21 16L34 19L21 22L18 36L15 22L2 19L15 16Z" fill="#4c4c4e"/><path d="M30 24L31.5 30L37 31L31.5 32L30 38L28.5 32L23 31L28.5 30Z" fill="#4c4c4e"/></svg><svg style="position:absolute;left:1860px;top:1052px;overflow:visible" width="40" height="40" viewBox="0 0 40 40"><path d="M4 26L20 6L36 14L22 36L8 34Z" fill="#f2f2f2" stroke="#333" stroke-width="1.5"/><path d="M4 26L22 36" stroke="#333" stroke-width="4"/></svg><svg style="position:absolute;left:1860px;top:1130px;overflow:visible" width="40" height="40" viewBox="0 0 40 40"><path d="M16 4Q8 18 12 28Q16 36 24 32Q32 26 26 14Q22 24 20 20Z" fill="#f0f0f0"/><path d="M28 10Q34 18 30 26" fill="none" stroke="#f0f0f0" stroke-width="2"/></svg><svg style="position:absolute;left:1860px;top:1201px;overflow:visible" width="40" height="40" viewBox="0 0 40 40"><path d="M10 18L28 6L36 20L22 34L12 30Z" fill="#f2f2f2" stroke="#333" stroke-width="1.5"/><path d="M10 18Q2 26 6 34" stroke="#222" stroke-width="4" fill="none"/><path d="M28 4L34 10" stroke="#222" stroke-width="3"/></svg><svg style="position:absolute;left:1864px;top:1272px;overflow:visible" width="32" height="32" viewBox="0 0 32 32"><defs><linearGradient id="grd" x1="0" y1="0" x2="1" y2="1"><stop offset="0" stop-color="#fff"/><stop offset="1" stop-color="#111"/></linearGradient></defs><rect x="0" y="0" width="32" height="32" fill="url(#grd)"/></svg><svg style="position:absolute;left:1860px;top:1340px;overflow:visible" width="40" height="40" viewBox="0 0 40 40"><path d="M4 36Q6 14 36 6Q18 16 14 34Z" fill="#f0f0f0"/></svg><svg style="position:absolute;left:1860px;top:1408px;overflow:visible" width="40" height="40" viewBox="0 0 40 40"><path d="M2 2L38 38M38 2L2 38M20 0V40M0 20H40" stroke="#e8e8e8" stroke-width="2"/><rect x="13" y="13" width="14" height="14" fill="#646568"/></svg><svg style="position:absolute;left:1860px;top:1477px;overflow:visible" width="40" height="40" viewBox="0 0 40 40"><ellipse cx="20" cy="17" rx="17" ry="13" fill="#fafafa" stroke="#aaa" stroke-width="1"/><path d="M24 28L30 38L30 28Z" fill="#fafafa"/></svg><svg style="position:absolute;left:1860px;top:1551px;overflow:visible" width="40" height="40" viewBox="0 0 40 40"><path d="M6 28L14 14H32L30 34Z" fill="#dcdcdc" stroke="#444" stroke-width="1.5"/><path d="M27 14L33 2" stroke="#444" stroke-width="3"/><circle cx="14" cy="28" r="2" fill="#fff" stroke="#444"/><circle cx="20" cy="24" r="2" fill="#fff" stroke="#444"/><circle cx="18" cy="32" r="2" fill="#fff" stroke="#444"/></svg><div style="position:absolute;left:1843px;top:1612px;width:48px;height:48px;background:#563d2c;border:1px solid #2a1e16;"></div><div style="position:absolute;left:1869px;top:1638px;width:47px;height:47px;background:#ffffff;border:1px solid #333;"></div><div style="position:absolute;left:1843px;top:1612px;width:48px;height:48px;background:#563d2c;border:1px solid #2a1e16;"></div><div style="position:absolute;left:1843px;top:1687px;width:74px;height:23px;background:#8fb8d0;padding:2px;"></div><div style="position:absolute;left:1846px;top:1690px;width:68px;height:17px;border:1px solid #111;background-color:#fff;background-image:linear-gradient(45deg,#888 25%,transparent 25%,transparent 75%,#888 75%),linear-gradient(45deg,#888 25%,transparent 25%,transparent 75%,#888 75%);background-size:8px 8px;background-position:0 0,4px 4px"></div><div style="position:absolute;left:1920px;top:137px;width:342px;height:41px;background:linear-gradient(#414143,#2e2e30);"></div><div style="position:absolute;left:1920px;top:137px;width:41px;height:41px;background:#38383a;border-top:1px solid #76777a;"></div><svg style="position:absolute;left:1934px;top:155px" width="20" height="18"><path d="M0 1L7 8.5L0 16Z" fill="#8d8d8f"/><rect x="9" y="1" width="10" height="3" fill="#8d8d8f"/><rect x="9" y="7" width="10" height="3" fill="#8d8d8f"/><rect x="9" y="13" width="10" height="3" fill="#8d8d8f"/></svg><div style="position:absolute;left:1961px;top:147px;width:272px;height:32px;background:#626367;border-top:1px solid #78797c;border-left:1px solid #727376;border-right:1px solid #48494b;"></div><svg style="position:absolute;left:1972px;top:147px;overflow:visible" width="16" height="34" viewBox="0 0 16 34"><path d="M8 0L14 18Q14 24 8 26Q2 24 2 18Z" fill="#e8e8e8" stroke="#111" stroke-width="1.5"/><path d="M8 6V20" stroke="#111" stroke-width="2"/><path d="M3 28H13L15 34H1Z" fill="#111"/></svg><svg style="position:absolute;left:1993px;top:150px;overflow:visible" width="22" height="22" viewBox="0 0 22 22"><circle cx="11" cy="11" r="8" fill="#1a1a1a"/><rect x="9" y="0" width="4" height="6" fill="#1a1a1a" transform="rotate(0 11 11)"/><rect x="9" y="0" width="4" height="6" fill="#1a1a1a" transform="rotate(45 11 11)"/><rect x="9" y="0" width="4" height="6" fill="#1a1a1a" transform="rotate(90 11 11)"/><rect x="9" y="0" width="4" height="6" fill="#1a1a1a" transform="rotate(135 11 11)"/><rect x="9" y="0" width="4" height="6" fill="#1a1a1a" transform="rotate(180 11 11)"/><rect x="9" y="0" width="4" height="6" fill="#1a1a1a" transform="rotate(225 11 11)"/><rect x="9" y="0" width="4" height="6" fill="#1a1a1a" transform="rotate(270 11 11)"/><rect x="9" y="0" width="4" height="6" fill="#1a1a1a" transform="rotate(315 11 11)"/><circle cx="11" cy="11" r="3" fill="#626367"/></svg><div class="fw" style="position:absolute;left:2015px;top:153px;width:211px;font-size:20px;line-height:24px;color:#e6e2d6;white-space:nowrap;">ツールプロパティ[楕円フキダシ]</div><div style="position:absolute;left:1920px;top:178px;width:342px;height:12px;background:#626367;"></div><div style="position:absolute;left:1920px;top:189px;width:342px;height:308px;background:#68696c;border:1px solid #4d4e50;"></div><svg style="position:absolute;left:1921px;top:190px;overflow:visible" width="340" height="79" viewBox="0 0 340 79"><rect x="0" y="0" width="340" height="79" fill="#676769"/><rect x="0" y="0" width="170" height="79" fill="#b6b6b6"/><rect x="0" y="0" width="139" height="29" fill="#8c8c8e"/><rect x="139" y="0" width="31" height="6" fill="#c2c2c2"/><ellipse cx="225" cy="38" rx="194" ry="33" fill="#676769"/><rect x="0" y="77" width="340" height="2" fill="#333"/></svg><div class="fw" style="position:absolute;left:1927px;top:187px;width:120px;font-size:25px;line-height:30px;color:#f4f1e8;white-space:nowrap;">楕円フキダシ</div><svg style="position:absolute;left:2213px;top:225px;overflow:visible" width="36" height="36" viewBox="0 0 36 36"><circle cx="18" cy="18" r="17" fill="#5a5a5c"/><path d="M9 9Q14 4 19 9L17 13L29 25L25 29L13 17L9 19Q4 14 9 9Z" fill="#f2f2f2" stroke="#333" stroke-width="1.5"/></svg><div class="fw" style="position:absolute;left:1955px;top:281px;width:65px;font-size:24px;line-height:28px;color:#f2efe6;white-space:nowrap;">線の色</div><div style="position:absolute;left:2060px;top:273px;width:186px;height:47px;background:linear-gradient(#6a6b6e,#5c5d60);border:1px solid #4e4f52;border-radius:2px;"></div><div style="position:absolute;left:2061px;top:274px;width:51px;height:45px;background:linear-gradient(#b0c4d0,#8aa2b0);"></div><div style="position:absolute;left:2071px;top:281px;width:28px;height:28px;background:#563d2c;border:1px solid #ddd;"></div><div style="position:absolute;left:2090px;top:299px;width:15px;height:15px;background:#fff;border:1px solid #444;"></div><div style="position:absolute;left:2122px;top:281px;width:16px;height:16px;background:#563d2c;border:1px solid #ccc;"></div><div style="position:absolute;left:2130px;top:289px;width:28px;height:27px;background:#fff;border:1px solid #444;"></div><div style="position:absolute;left:2177px;top:282px;width:28px;height:28px;background:#000;"></div><svg style="position:absolute;left:2218.0px;top:290.0px" width="22" height="12"><path d="M0 0H22L11.0 12Z" fill="#2b2b2c"/></svg><div class="fw" style="position:absolute;left:1955px;top:334px;width:80px;font-size:24px;line-height:28px;color:#f2efe6;white-space:nowrap;">塗りの色</div><div style="position:absolute;left:2060px;top:326px;width:186px;height:47px;background:linear-gradient(#6a6b6e,#5c5d60);border:1px solid #4e4f52;border-radius:2px;"></div><div style="position:absolute;left:2113px;top:327px;width:51px;height:45px;background:linear-gradient(#b0c4d0,#8aa2b0);"></div><div style="position:absolute;left:2071px;top:334px;width:28px;height:28px;background:#563d2c;border:1px solid #ddd;"></div><div style="position:absolute;left:2090px;top:352px;width:15px;height:15px;background:#fff;border:1px solid #444;"></div><div style="position:absolute;left:2122px;top:334px;width:16px;height:16px;background:#563d2c;border:1px solid #ccc;"></div><div style="position:absolute;left:2130px;top:342px;width:28px;height:27px;background:#fff;border:1px solid #444;"></div><div style="position:absolute;left:2177px;top:335px;width:28px;height:28px;background:#fff;"></div><svg style="position:absolute;left:2218.0px;top:343.0px" width="22" height="12"><path d="M0 0H22L11.0 12Z" fill="#2b2b2c"/></svg><div style="position:absolute;left:1930px;top:377px;width:316px;height:1px;background:#7a7b7e;"></div><div class="fw" style="position:absolute;left:1955px;top:393px;width:92px;font-size:24px;line-height:28px;color:#f2efe6;white-space:nowrap;">追加方法</div><div style="position:absolute;left:2060px;top:381px;width:186px;height:47px;background:linear-gradient(#6a6b6e,#5d5e61);border:1px solid #4e4f52;border-radius:2px;"></div><div style="position:absolute;left:2066px;top:385px;width:145px;height:40px;overflow:hidden;"><div class="fw" style="position:absolute;left:3px;top:8px;width:155px;font-size:23px;line-height:27px;color:#e8e4d8;white-space:nowrap;">選択中のレイヤーに</div></div><svg style="position:absolute;left:2218.0px;top:398.0px" width="22" height="12"><path d="M0 0H22L11.0 12Z" fill="#2b2b2c"/></svg><div style="position:absolute;left:1950px;top:445px;width:27px;height:26px;background:linear-gradient(#606164,#6c6d70);border:1px solid #48494b;border-radius:2px;"></div><div class="fw" style="position:absolute;left:1989px;top:445px;width:75px;font-size:24px;line-height:28px;color:#f2efe6;white-space:nowrap;">トーン化</div><div style="position:absolute;left:1930px;top:485px;width:316px;height:1px;background:#7a7b7e;"></div><div style="position:absolute;left:2087px;top:489px;width:160px;height:6px;background:#56575a;border-radius:2px;"></div><div style="position:absolute;left:2131px;top:489px;width:43px;height:6px;background:#7b94a2;"></div><div style="position:absolute;left:2250px;top:272px;width:10px;height:222px;background:#5a5b5e;border:1px solid #4e4f52;"></div><div style="position:absolute;left:2251px;top:273px;width:8px;height:113px;background:#6e6f72;"></div><div style="position:absolute;left:1920px;top:497px;width:342px;height:41px;background:linear-gradient(#414143,#2e2e30);"></div><div style="position:absolute;left:1920px;top:497px;width:42px;height:41px;background:#38383a;border-top:1px solid #76777a;"></div><svg style="position:absolute;left:1934px;top:515px" width="20" height="18"><path d="M0 1L7 8.5L0 16Z" fill="#8d8d8f"/><rect x="9" y="1" width="10" height="3" fill="#8d8d8f"/><rect x="9" y="7" width="10" height="3" fill="#8d8d8f"/><rect x="9" y="13" width="10" height="3" fill="#8d8d8f"/></svg><div style="position:absolute;left:1962px;top:507px;width:248px;height:32px;background:#626367;border-top:1px solid #78797c;border-left:1px solid #727376;border-right:1px solid #48494b;"></div><svg style="position:absolute;left:1973px;top:509px;overflow:visible" width="16" height="34" viewBox="0 0 16 34"><path d="M8 0L14 18Q14 24 8 26Q2 24 2 18Z" fill="#e8e8e8" stroke="#111" stroke-width="1.5"/><path d="M8 6V20" stroke="#111" stroke-width="2"/><path d="M3 28H13L15 34H1Z" fill="#111"/></svg><svg style="position:absolute;left:1993px;top:510px;overflow:visible" width="22" height="30" viewBox="0 0 22 30"><path d="M4 2V28M4 4H8M4 15H8M4 26H8" stroke="#222" stroke-width="1.5" fill="none"/><circle cx="15" cy="5" r="3" fill="#111"/><circle cx="15" cy="15" r="4" fill="#111"/><circle cx="15" cy="25" r="5" fill="#111"/></svg><div class="fw" style="position:absolute;left:2014px;top:513px;width:189px;font-size:20px;line-height:24px;color:#e6e2d6;white-space:nowrap;">ブラシサイズ[楕円フキダシ]</div><div style="position:absolute;left:1920px;top:538px;width:342px;height:12px;background:#626367;"></div><div style="position:absolute;left:1920px;top:549px;width:342px;height:304px;background:#68696c;border:1px solid #4d4e50;"></div><div style="position:absolute;left:0;top:0;width:2736px;height:1757px;clip-path:polygon(1921px 550px,2249px 550px,2249px 850px,1921px 850px);"><div style="position:absolute;left:1921px;top:550px;width:65.5px;height:80px;border-right:1px solid #3e3f41;border-bottom:1px solid #3e3f41;"></div><div style="position:absolute;left:1952.75px;top:564px;width:2px;height:2px;border-radius:50%;background:#000"></div><div class="fw" style="position:absolute;left:1940.25px;top:599px;width:27px;font-size:22px;line-height:26px;color:#f6f3ea;white-space:nowrap;">0.7</div><div style="position:absolute;left:1986.5px;top:550px;width:65.5px;height:80px;border-right:1px solid #3e3f41;border-bottom:1px solid #3e3f41;"></div><div style="position:absolute;left:2018.25px;top:564px;width:2px;height:2px;border-radius:50%;background:#000"></div><div class="fw" style="position:absolute;left:2013.25px;top:599px;width:12px;font-size:22px;line-height:26px;color:#f6f3ea;white-space:nowrap;">1</div><div style="position:absolute;left:2052px;top:550px;width:65.5px;height:80px;border-right:1px solid #3e3f41;border-bottom:1px solid #3e3f41;"></div><div style="position:absolute;left:2083.75px;top:564px;width:2px;height:2px;border-radius:50%;background:#000"></div><div class="fw" style="position:absolute;left:2071.25px;top:599px;width:27px;font-size:22px;line-height:26px;color:#f6f3ea;white-space:nowrap;">1.5</div><div style="position:absolute;left:2117.5px;top:550px;width:65.5px;height:80px;border-right:1px solid #3e3f41;border-bottom:1px solid #3e3f41;"></div><div style="position:absolute;left:2149.25px;top:564px;width:2px;height:2px;border-radius:50%;background:#000"></div><div class="fw" style="position:absolute;left:2144.25px;top:599px;width:12px;font-size:22px;line-height:26px;color:#f6f3ea;white-space:nowrap;">2</div><div style="position:absolute;left:2183px;top:550px;width:65px;height:80px;border-right:1px solid #3e3f41;border-bottom:1px solid #3e3f41;"></div><div style="position:absolute;left:2214.3px;top:563.8px;width:2.4px;height:2.4px;border-radius:50%;background:#000"></div><div class="fw" style="position:absolute;left:2202.0px;top:599px;width:27px;font-size:22px;line-height:26px;color:#f6f3ea;white-space:nowrap;">2.5</div><div style="position:absolute;left:1921px;top:630px;width:65.5px;height:80px;border-right:1px solid #3e3f41;border-bottom:1px solid #3e3f41;"></div><div style="position:absolute;left:1952.25px;top:643.5px;width:3.0px;height:3.0px;border-radius:50%;background:#000"></div><div class="fw" style="position:absolute;left:1947.75px;top:679px;width:12px;font-size:22px;line-height:26px;color:#f6f3ea;white-space:nowrap;">3</div><div style="position:absolute;left:1986.5px;top:630px;width:65.5px;height:80px;border-right:1px solid #3e3f41;border-bottom:1px solid #3e3f41;"></div><div style="position:absolute;left:2017.45px;top:643.2px;width:3.6px;height:3.6px;border-radius:50%;background:#000"></div><div class="fw" style="position:absolute;left:2013.25px;top:679px;width:12px;font-size:22px;line-height:26px;color:#f6f3ea;white-space:nowrap;">4</div><div style="position:absolute;left:2053px;top:631px;width:63.5px;height:78px;background:linear-gradient(#7d96a3,#5e7481);border:1px solid #8ea3ae;"></div><div style="position:absolute;left:2070.75px;top:677px;width:28px;height:28px;background:rgba(90,100,110,0.6);"></div><div style="position:absolute;left:2052px;top:630px;width:65.5px;height:80px;border-right:1px solid #3e3f41;border-bottom:1px solid #3e3f41;"></div><div style="position:absolute;left:2082.25px;top:642.5px;width:5.0px;height:5.0px;border-radius:50%;background:#000"></div><div class="fw" style="position:absolute;left:2078.75px;top:679px;width:12px;font-size:22px;line-height:26px;color:#f6f3ea;white-space:nowrap;">5</div><div style="position:absolute;left:2117.5px;top:630px;width:65.5px;height:80px;border-right:1px solid #3e3f41;border-bottom:1px solid #3e3f41;"></div><div style="position:absolute;left:2147.45px;top:642.2px;width:5.6px;height:5.6px;border-radius:50%;background:#000"></div><div class="fw" style="position:absolute;left:2144.25px;top:679px;width:12px;font-size:22px;line-height:26px;color:#f6f3ea;white-space:nowrap;">6</div><div style="position:absolute;left:2183px;top:630px;width:65px;height:80px;border-right:1px solid #3e3f41;border-bottom:1px solid #3e3f41;"></div><div style="position:absolute;left:2212.3px;top:641.8px;width:6.4px;height:6.4px;border-radius:50%;background:#000"></div><div class="fw" style="position:absolute;left:2209.5px;top:679px;width:12px;font-size:22px;line-height:26px;color:#f6f3ea;white-space:nowrap;">7</div><div style="position:absolute;left:1921px;top:710px;width:65.5px;height:80px;border-right:1px solid #3e3f41;border-bottom:1px solid #3e3f41;"></div><div style="position:absolute;left:1950.25px;top:721.5px;width:7.0px;height:7.0px;border-radius:50%;background:#000"></div><div class="fw" style="position:absolute;left:1947.75px;top:759px;width:12px;font-size:22px;line-height:26px;color:#f6f3ea;white-space:nowrap;">8</div><div style="position:absolute;left:1986.5px;top:710px;width:65.5px;height:80px;border-right:1px solid #3e3f41;border-bottom:1px solid #3e3f41;"></div><div style="position:absolute;left:2015.05px;top:720.8px;width:8.4px;height:8.4px;border-radius:50%;background:#000"></div><div class="fw" style="position:absolute;left:2006.75px;top:759px;width:25px;font-size:22px;line-height:26px;color:#f6f3ea;white-space:nowrap;">10</div><div style="position:absolute;left:2052px;top:710px;width:65.5px;height:80px;border-right:1px solid #3e3f41;border-bottom:1px solid #3e3f41;"></div><div style="position:absolute;left:2079.75px;top:720px;width:10px;height:10px;border-radius:50%;background:#000"></div><div class="fw" style="position:absolute;left:2072.25px;top:759px;width:25px;font-size:22px;line-height:26px;color:#f6f3ea;white-space:nowrap;">12</div><div style="position:absolute;left:2117.5px;top:710px;width:65.5px;height:80px;border-right:1px solid #3e3f41;border-bottom:1px solid #3e3f41;"></div><div style="position:absolute;left:2144.25px;top:719px;width:12px;height:12px;border-radius:50%;background:#000"></div><div class="fw" style="position:absolute;left:2137.75px;top:759px;width:25px;font-size:22px;line-height:26px;color:#f6f3ea;white-space:nowrap;">15</div><div style="position:absolute;left:2183px;top:710px;width:65px;height:80px;border-right:1px solid #3e3f41;border-bottom:1px solid #3e3f41;"></div><div style="position:absolute;left:2208.5px;top:718px;width:14px;height:14px;border-radius:50%;background:#000"></div><div class="fw" style="position:absolute;left:2203.0px;top:759px;width:25px;font-size:22px;line-height:26px;color:#f6f3ea;white-space:nowrap;">17</div><div style="position:absolute;left:1921px;top:790px;width:65.5px;height:60px;border-right:1px solid #3e3f41;border-bottom:1px solid #3e3f41;"></div><div style="position:absolute;left:1943.75px;top:795px;width:20px;height:20px;border-radius:50%;background:#000"></div><div class="fw" style="position:absolute;left:1941.25px;top:839px;width:25px;font-size:22px;line-height:26px;color:#f6f3ea;white-space:nowrap;">20</div><div style="position:absolute;left:1986.5px;top:790px;width:65.5px;height:60px;border-right:1px solid #3e3f41;border-bottom:1px solid #3e3f41;"></div><div style="position:absolute;left:2007.25px;top:793px;width:24px;height:24px;border-radius:50%;background:#000"></div><div class="fw" style="position:absolute;left:2006.75px;top:839px;width:25px;font-size:22px;line-height:26px;color:#f6f3ea;white-space:nowrap;">25</div><div style="position:absolute;left:2052px;top:790px;width:65.5px;height:60px;border-right:1px solid #3e3f41;border-bottom:1px solid #3e3f41;"></div><div style="position:absolute;left:2072.75px;top:793px;width:24px;height:24px;border-radius:50%;background:#000"></div><div class="fw" style="position:absolute;left:2072.25px;top:839px;width:25px;font-size:22px;line-height:26px;color:#f6f3ea;white-space:nowrap;">30</div><div style="position:absolute;left:2117.5px;top:790px;width:65.5px;height:60px;border-right:1px solid #3e3f41;border-bottom:1px solid #3e3f41;"></div><div style="position:absolute;left:2138.25px;top:793px;width:24px;height:24px;border-radius:50%;background:#000"></div><div class="fw" style="position:absolute;left:2137.75px;top:839px;width:25px;font-size:22px;line-height:26px;color:#f6f3ea;white-space:nowrap;">40</div><div style="position:absolute;left:2183px;top:790px;width:65px;height:60px;border-right:1px solid #3e3f41;border-bottom:1px solid #3e3f41;"></div><div style="position:absolute;left:2203.5px;top:793px;width:24px;height:24px;border-radius:50%;background:#000"></div><div class="fw" style="position:absolute;left:2203.0px;top:839px;width:25px;font-size:22px;line-height:26px;color:#f6f3ea;white-space:nowrap;">50</div></div><div style="position:absolute;left:1921px;top:550px;width:1px;height:300px;background:#3e3f41;"></div><div style="position:absolute;left:1921px;top:550px;width:327px;height:1px;background:#3e3f41;"></div><div style="position:absolute;left:2250px;top:552px;width:10px;height:296px;background:#5a5b5e;border:1px solid #4e4f52;"></div><div style="position:absolute;left:2251px;top:553px;width:8px;height:138px;background:#6e6f72;"></div><div style="position:absolute;left:1920px;top:853px;width:342px;height:41px;background:linear-gradient(#414143,#2e2e30);"></div><div style="position:absolute;left:1920px;top:853px;width:42px;height:41px;background:#38383a;border-top:1px solid #76777a;"></div><svg style="position:absolute;left:1934px;top:871px" width="20" height="18"><path d="M0 1L7 8.5L0 16Z" fill="#8d8d8f"/><rect x="9" y="1" width="10" height="3" fill="#8d8d8f"/><rect x="9" y="7" width="10" height="3" fill="#8d8d8f"/><rect x="9" y="13" width="10" height="3" fill="#8d8d8f"/></svg><div style="position:absolute;left:1962px;top:863px;width:196px;height:32px;background:#626367;border-top:1px solid #78797c;border-left:1px solid #727376;border-right:1px solid #48494b;"></div><svg style="position:absolute;left:1973px;top:865px;overflow:visible" width="16" height="34" viewBox="0 0 16 34"><path d="M8 0L14 18Q14 24 8 26Q2 24 2 18Z" fill="#e8e8e8" stroke="#111" stroke-width="1.5"/><path d="M8 6V20" stroke="#111" stroke-width="2"/><path d="M3 28H13L15 34H1Z" fill="#111"/></svg><svg style="position:absolute;left:1993px;top:866px;overflow:visible" width="22" height="30" viewBox="0 0 22 30"><path d="M4 2V28M4 4H8M4 15H8M4 26H8" stroke="#222" stroke-width="1.5" fill="none"/><rect x="10" y="1" width="8" height="7" fill="#999" stroke="#222"/><rect x="10" y="11" width="8" height="7" fill="#999" stroke="#222"/><rect x="10" y="21" width="8" height="7" fill="#999" stroke="#222"/></svg><div class="fw" style="position:absolute;left:2014px;top:869px;width:137px;font-size:20px;line-height:24px;color:#e6e2d6;white-space:nowrap;">サブツール[テキスト]</div><div style="position:absolute;left:1920px;top:894px;width:342px;height:12px;background:#626367;"></div><div style="position:absolute;left:1920px;top:905px;width:342px;height:837px;background:#68696c;border-left:1px solid #4d4e50;"></div><div style="position:absolute;left:1921px;top:906px;width:168px;height:51px;background:linear-gradient(#7b919d,#617684);border:1px solid #4e5a62;border-radius:2px;"></div><div style="position:absolute;left:2091px;top:906px;width:168px;height:51px;background:linear-gradient(#6b6c6f,#5c5d60);border:1px solid #48494b;border-radius:2px;"></div><svg style="position:absolute;left:1928px;top:913px;overflow:visible" width="40" height="40" viewBox="0 0 40 40"><ellipse cx="19" cy="17" rx="17" ry="14" fill="#fafafa" stroke="#777" stroke-width="1"/><path d="M22 28L27 37L28 27Z" fill="#fafafa"/></svg><div class="fw" style="position:absolute;left:1977px;top:916px;width:73px;font-size:25px;line-height:30px;color:#f6f3ea;white-space:nowrap;">テキスト</div><svg style="position:absolute;left:2096px;top:911px;overflow:visible" width="40" height="40" viewBox="0 0 40 40"><g fill="#3a3a3a"><path d="M20 20L39.0 20.0L27.8 21.6Z"/><path d="M20 20L37.6 27.3L26.6 24.5Z"/><path d="M20 20L33.4 33.4L24.4 26.7Z"/><path d="M20 20L27.3 37.6L21.5 27.9Z"/><path d="M20 20L20.0 39.0L18.4 27.8Z"/><path d="M20 20L12.7 37.6L15.5 26.6Z"/><path d="M20 20L6.6 33.4L13.3 24.4Z"/><path d="M20 20L2.4 27.3L12.1 21.5Z"/><path d="M20 20L1.0 20.0L12.2 18.4Z"/><path d="M20 20L2.4 12.7L13.4 15.5Z"/><path d="M20 20L6.6 6.6L15.6 13.3Z"/><path d="M20 20L12.7 2.4L18.5 12.1Z"/><path d="M20 20L20.0 1.0L21.6 12.2Z"/><path d="M20 20L27.3 2.4L24.5 13.4Z"/><path d="M20 20L33.4 6.6L26.7 15.6Z"/><path d="M20 20L37.6 12.7L27.9 18.5Z"/><circle cx="20" cy="20" r="9"/></g></svg><div class="fw" style="position:absolute;left:2147px;top:916px;width:81px;font-size:25px;line-height:30px;color:#f6f3ea;white-space:nowrap;">フラッシュ</div><div style="position:absolute;left:1921px;top:960px;width:109px;height:150px;background:linear-gradient(#7e94a0,#617685);border:1px solid #58656e;"></div><div style="position:absolute;left:1921px;top:960px;width:109px;height:149px;border-right:1px solid #3e3f41;border-bottom:1px solid #3e3f41;"></div><div style="position:absolute;left:2030px;top:960px;width:109px;height:149px;border-right:1px solid #3e3f41;border-bottom:1px solid #3e3f41;"></div><div style="position:absolute;left:2139px;top:960px;width:110px;height:149px;border-right:1px solid #3e3f41;border-bottom:1px solid #3e3f41;"></div><div style="position:absolute;left:1921px;top:1109px;width:109px;height:150px;border-right:1px solid #3e3f41;border-bottom:1px solid #3e3f41;"></div><div style="position:absolute;left:2030px;top:1109px;width:109px;height:150px;border-right:1px solid #3e3f41;border-bottom:1px solid #3e3f41;"></div><div style="position:absolute;left:1921px;top:960px;width:1px;height:299px;background:#3e3f41;"></div><div style="position:absolute;left:1973px;top:1008px;width:4px;height:4px;border-radius:50%;background:#111"></div><div style="position:absolute;left:2082px;top:1008px;width:4px;height:4px;border-radius:50%;background:#111"></div><div style="position:absolute;left:2187px;top:1003px;width:10px;height:10px;border-radius:50%;background:#000"></div><div style="position:absolute;left:1921px;top:1070px;width:108px;height:36px;overflow:hidden;"><div class="fw" style="position:absolute;left:0px;top:3px;width:126px;font-size:24px;line-height:28px;color:#f4f1e8;white-space:nowrap;">楕円フキダシ</div></div><div style="position:absolute;left:2030px;top:1070px;width:108px;height:36px;overflow:hidden;"><div class="fw" style="position:absolute;left:0px;top:3px;width:126px;font-size:24px;line-height:28px;color:#f4f1e8;white-space:nowrap;">曲線フキダシ</div></div><div style="position:absolute;left:2139px;top:1070px;width:108px;height:36px;overflow:hidden;"><div class="fw" style="position:absolute;left:0px;top:3px;width:112px;font-size:24px;line-height:28px;color:#f4f1e8;white-space:nowrap;">フキダシペン</div></div><svg style="position:absolute;left:1955px;top:1147px;overflow:visible" width="36" height="36" viewBox="0 0 36 36"><path d="M2 2H14Q12 20 34 34Q8 28 8 8L4 12Z" fill="#f8f8f8" stroke="#555" stroke-width="0.8"/></svg><svg style="position:absolute;left:2064px;top:1147px;overflow:visible" width="36" height="36" viewBox="0 0 36 36"><path d="M2 2H14Q12 20 34 34Q8 28 8 8L4 12Z" fill="#f8f8f8" stroke="#555" stroke-width="0.8"/></svg><div style="position:absolute;left:1921px;top:1220px;width:108px;height:36px;overflow:hidden;"><div class="fw" style="position:absolute;left:0px;top:3px;width:130px;font-size:24px;line-height:28px;color:#f4f1e8;white-space:nowrap;">フキダシしっぽ</div></div><div style="position:absolute;left:2030px;top:1220px;width:108px;height:36px;overflow:hidden;"><div class="fw" style="position:absolute;left:0px;top:3px;width:146px;font-size:24px;line-height:28px;color:#f4f1e8;white-space:nowrap;">フキダシ丸しっぽ</div></div><div style="position:absolute;left:2249px;top:960px;width:10px;height:782px;background:#5e5f62;border-left:1px solid #505153;"></div><div style="position:absolute;left:2264px;top:137px;width:472px;height:41px;background:linear-gradient(#414143,#2e2e30);"></div><div style="position:absolute;left:2264px;top:137px;width:42px;height:41px;background:#38383a;border-top:1px solid #76777a;"></div><svg style="position:absolute;left:2278px;top:155px" width="20" height="18"><path d="M0 1L7 8.5L0 16Z" fill="#8d8d8f"/><rect x="9" y="1" width="10" height="3" fill="#8d8d8f"/><rect x="9" y="7" width="10" height="3" fill="#8d8d8f"/><rect x="9" y="13" width="10" height="3" fill="#8d8d8f"/></svg><div style="position:absolute;left:2306px;top:147px;width:139px;height:32px;background:#626367;border-top:1px solid #78797c;border-left:1px solid #727376;border-right:1px solid #48494b;"></div><div style="position:absolute;left:2445px;top:147px;width:156px;height:31px;background:#4a4b4d;border-top:1px solid #5e5f62;border-right:1px solid #3a3a3c;"></div><svg style="position:absolute;left:2458px;top:148px;overflow:visible" width="30" height="30" viewBox="0 0 30 30"><circle cx="15" cy="15" r="14" fill="#555"/><circle cx="15" cy="15" r="6" fill="#4a4a4a" stroke="#777" stroke-width="2"/></svg><div class="fw" style="position:absolute;left:2499px;top:153px;width:95px;font-size:20px;line-height:24px;color:#8e8e8e;white-space:nowrap;">カラーサークル</div><svg style="position:absolute;left:2314px;top:146px;overflow:visible" width="30" height="30" viewBox="0 0 30 30"><rect x="0" y="0" width="9" height="9" fill="#1e7ee8"/><rect x="10" y="0" width="9" height="9" fill="#101060"/><rect x="20" y="0" width="9" height="9" fill="#d8104c"/><rect x="0" y="10" width="9" height="9" fill="#e01010"/><rect x="10" y="10" width="9" height="9" fill="#1850c0" stroke="#e00" stroke-width="2"/><rect x="20" y="10" width="9" height="9" fill="#f0e000"/><rect x="0" y="20" width="9" height="9" fill="#60b020"/><rect x="10" y="20" width="9" height="9" fill="#108030"/><rect x="20" y="20" width="9" height="9" fill="#000"/></svg><div class="fw" style="position:absolute;left:2358px;top:153px;width:80px;font-size:20px;line-height:24px;color:#e6e2d6;white-space:nowrap;">カラーセット</div><div style="position:absolute;left:2264px;top:178px;width:472px;height:12px;background:#626367;"></div><div style="position:absolute;left:2264px;top:189px;width:472px;height:388px;background:#68696c;border-left:1px solid #4d4e50;"></div><div style="position:absolute;left:2265px;top:190px;width:355px;height:46px;background:linear-gradient(#6c6d70,#5d5e61);border:1px solid #4e4f52;border-radius:2px;"></div><div class="fw" style="position:absolute;left:2288px;top:201px;width:278px;font-size:25px;line-height:30px;color:#f4f1e8;white-space:nowrap;">36色入色鉛筆風カラーセット</div><svg style="position:absolute;left:2591.0px;top:207.0px" width="24" height="12"><path d="M0 0H24L12.0 12Z" fill="#2b2b2c"/></svg><svg style="position:absolute;left:2629px;top:193px;overflow:visible" width="40" height="40" viewBox="0 0 40 40"><path d="M6 4Q0 10 4 16L12 14V38H18V12Q20 4 14 2Z" fill="#ccc" stroke="#555" stroke-width="1"/><path d="M26 4Q20 10 24 16L28 14V38H34V14L38 16Q42 8 36 2Z" fill="#aaa" stroke="#444" stroke-width="1"/></svg><div style="position:absolute;left:2265px;top:238px;width:453px;height:288px;background:#4a4a4a;"></div><div style="position:absolute;left:2265.00px;top:238px;width:24.17px;height:23px;background:#000000"></div><div style="position:absolute;left:2290.17px;top:238px;width:24.17px;height:23px;background:#555555"></div><div style="position:absolute;left:2315.33px;top:238px;width:24.17px;height:23px;background:#888888"></div><div style="position:absolute;left:2340.50px;top:238px;width:24.17px;height:23px;background:#c4c4c4"></div><div style="position:absolute;left:2365.67px;top:238px;width:24.17px;height:23px;background:#e6e6e6"></div><div style="position:absolute;left:2390.83px;top:238px;width:24.17px;height:23px;background:#ffffff"></div><div style="position:absolute;left:2567.00px;top:238px;width:24.17px;height:23px;background:#2a3133"></div><div style="position:absolute;left:2592.17px;top:238px;width:24.17px;height:23px;background:#3e4446"></div><div style="position:absolute;left:2617.33px;top:238px;width:24.17px;height:23px;background:#6b7474"></div><div style="position:absolute;left:2642.50px;top:238px;width:24.17px;height:23px;background:#95a1a3"></div><div style="position:absolute;left:2667.67px;top:238px;width:24.17px;height:23px;background:#a7b6b9"></div><div style="position:absolute;left:2692.83px;top:238px;width:24.17px;height:23px;background:#bac7c0"></div><div style="position:absolute;left:2265.00px;top:262px;width:24.17px;height:23px;background:#1f2122"></div><div style="position:absolute;left:2290.17px;top:262px;width:24.17px;height:23px;background:#333739"></div><div style="position:absolute;left:2315.33px;top:262px;width:24.17px;height:23px;background:#4a5050"></div><div style="position:absolute;left:2340.50px;top:262px;width:24.17px;height:23px;background:#7a8282"></div><div style="position:absolute;left:2365.67px;top:262px;width:24.17px;height:23px;background:#a9b1b5"></div><div style="position:absolute;left:2390.83px;top:262px;width:24.17px;height:23px;background:#cfd3d6"></div><div style="position:absolute;left:2416.00px;top:262px;width:24.17px;height:23px;background:#211610"></div><div style="position:absolute;left:2441.17px;top:262px;width:24.17px;height:23px;background:#2e1e14"></div><div style="position:absolute;left:2466.33px;top:262px;width:24.17px;height:23px;background:#3d291c"></div><div style="position:absolute;left:2491.50px;top:262px;width:24.17px;height:23px;background:#4d3522"></div><div style="position:absolute;left:2516.67px;top:262px;width:24.17px;height:23px;background:#6b4a2e"></div><div style="position:absolute;left:2541.83px;top:262px;width:24.17px;height:23px;background:#876b53"></div><div style="position:absolute;left:2567.00px;top:262px;width:24.17px;height:23px;background:#a3371a"></div><div style="position:absolute;left:2592.17px;top:262px;width:24.17px;height:23px;background:#c44a22"></div><div style="position:absolute;left:2617.33px;top:262px;width:24.17px;height:23px;background:#d5603a"></div><div style="position:absolute;left:2642.50px;top:262px;width:24.17px;height:23px;background:#e67c50"></div><div style="position:absolute;left:2667.67px;top:262px;width:24.17px;height:23px;background:#f59a6e"></div><div style="position:absolute;left:2692.83px;top:262px;width:24.17px;height:23px;background:#fac5ac"></div><div style="position:absolute;left:2265.00px;top:286px;width:24.17px;height:23px;background:#b06a14"></div><div style="position:absolute;left:2290.17px;top:286px;width:24.17px;height:23px;background:#c98225"></div><div style="position:absolute;left:2315.33px;top:286px;width:24.17px;height:23px;background:#d99030"></div><div style="position:absolute;left:2340.50px;top:286px;width:24.17px;height:23px;background:#e8b870"></div><div style="position:absolute;left:2365.67px;top:286px;width:24.17px;height:23px;background:#f1d5a0"></div><div style="position:absolute;left:2390.83px;top:286px;width:24.17px;height:23px;background:#f9eed6"></div><div style="position:absolute;left:2416.00px;top:286px;width:24.17px;height:23px;background:#4d5018"></div><div style="position:absolute;left:2441.17px;top:286px;width:24.17px;height:23px;background:#5f6425"></div><div style="position:absolute;left:2466.33px;top:286px;width:24.17px;height:23px;background:#6e7530"></div><div style="position:absolute;left:2491.50px;top:286px;width:24.17px;height:23px;background:#979b4a"></div><div style="position:absolute;left:2516.67px;top:286px;width:24.17px;height:23px;background:#aab167"></div><div style="position:absolute;left:2541.83px;top:286px;width:24.17px;height:23px;background:#bcc880"></div><div style="position:absolute;left:2567.00px;top:286px;width:24.17px;height:23px;background:#083d28"></div><div style="position:absolute;left:2592.17px;top:286px;width:24.17px;height:23px;background:#175a40"></div><div style="position:absolute;left:2617.33px;top:286px;width:24.17px;height:23px;background:#1f6b50"></div><div style="position:absolute;left:2642.50px;top:286px;width:24.17px;height:23px;background:#2f8a70"></div><div style="position:absolute;left:2667.67px;top:286px;width:24.17px;height:23px;background:#45a090"></div><div style="position:absolute;left:2692.83px;top:286px;width:24.17px;height:23px;background:#5ec3b2"></div><div style="position:absolute;left:2265.00px;top:310px;width:24.17px;height:23px;background:#0a5a12"></div><div style="position:absolute;left:2290.17px;top:310px;width:24.17px;height:23px;background:#1a7325"></div><div style="position:absolute;left:2315.33px;top:310px;width:24.17px;height:23px;background:#1f8a2a"></div><div style="position:absolute;left:2340.50px;top:310px;width:24.17px;height:23px;background:#2f9a3a"></div><div style="position:absolute;left:2365.67px;top:310px;width:24.17px;height:23px;background:#4fb04a"></div><div style="position:absolute;left:2390.83px;top:310px;width:24.17px;height:23px;background:#6fcf6a"></div><div style="position:absolute;left:2416.00px;top:310px;width:24.17px;height:23px;background:#006a20"></div><div style="position:absolute;left:2441.17px;top:310px;width:24.17px;height:23px;background:#1a8035"></div><div style="position:absolute;left:2466.33px;top:310px;width:24.17px;height:23px;background:#2a9a45"></div><div style="position:absolute;left:2491.50px;top:310px;width:24.17px;height:23px;background:#3aaa55"></div><div style="position:absolute;left:2516.67px;top:310px;width:24.17px;height:23px;background:#6ac87a"></div><div style="position:absolute;left:2541.83px;top:310px;width:24.17px;height:23px;background:#95e8a0"></div><div style="position:absolute;left:2567.00px;top:310px;width:24.17px;height:23px;background:#3a9a10"></div><div style="position:absolute;left:2592.17px;top:310px;width:24.17px;height:23px;background:#60b828"></div><div style="position:absolute;left:2617.33px;top:310px;width:24.17px;height:23px;background:#80d030"></div><div style="position:absolute;left:2642.50px;top:310px;width:24.17px;height:23px;background:#98e040"></div><div style="position:absolute;left:2667.67px;top:310px;width:24.17px;height:23px;background:#a0e850"></div><div style="position:absolute;left:2692.83px;top:310px;width:24.17px;height:23px;background:#c8f090"></div><div style="position:absolute;left:2265.00px;top:334px;width:24.17px;height:23px;background:#70d820"></div><div style="position:absolute;left:2290.17px;top:334px;width:24.17px;height:23px;background:#88e030"></div><div style="position:absolute;left:2315.33px;top:334px;width:24.17px;height:23px;background:#a0e840"></div><div style="position:absolute;left:2340.50px;top:334px;width:24.17px;height:23px;background:#a8e848"></div><div style="position:absolute;left:2365.67px;top:334px;width:24.17px;height:23px;background:#b8f060"></div><div style="position:absolute;left:2390.83px;top:334px;width:24.17px;height:23px;background:#d0f080"></div><div style="position:absolute;left:2416.00px;top:334px;width:24.17px;height:23px;background:#20c878"></div><div style="position:absolute;left:2441.17px;top:334px;width:24.17px;height:23px;background:#30d088"></div><div style="position:absolute;left:2466.33px;top:334px;width:24.17px;height:23px;background:#50e0a0"></div><div style="position:absolute;left:2491.50px;top:334px;width:24.17px;height:23px;background:#60e0a8"></div><div style="position:absolute;left:2516.67px;top:334px;width:24.17px;height:23px;background:#78f0c0"></div><div style="position:absolute;left:2541.83px;top:334px;width:24.17px;height:23px;background:#a0ffd8"></div><div style="position:absolute;left:2567.00px;top:334px;width:24.17px;height:23px;background:#00b8a8"></div><div style="position:absolute;left:2592.17px;top:334px;width:24.17px;height:23px;background:#20c8b8"></div><div style="position:absolute;left:2617.33px;top:334px;width:24.17px;height:23px;background:#20d0c8"></div><div style="position:absolute;left:2642.50px;top:334px;width:24.17px;height:23px;background:#50e0d8"></div><div style="position:absolute;left:2667.67px;top:334px;width:24.17px;height:23px;background:#70ece8"></div><div style="position:absolute;left:2692.83px;top:334px;width:24.17px;height:23px;background:#b0f4f4"></div><div style="position:absolute;left:2265.00px;top:358px;width:24.17px;height:23px;background:#2090e0"></div><div style="position:absolute;left:2290.17px;top:358px;width:24.17px;height:23px;background:#48b0f0"></div><div style="position:absolute;left:2315.33px;top:358px;width:24.17px;height:23px;background:#70c8f0"></div><div style="position:absolute;left:2340.50px;top:358px;width:24.17px;height:23px;background:#80d0f0"></div><div style="position:absolute;left:2365.67px;top:358px;width:24.17px;height:23px;background:#a0e0f4"></div><div style="position:absolute;left:2390.83px;top:358px;width:24.17px;height:23px;background:#b8eaf8"></div><div style="position:absolute;left:2416.00px;top:358px;width:24.17px;height:23px;background:#1848c8"></div><div style="position:absolute;left:2441.17px;top:358px;width:24.17px;height:23px;background:#4a80d8"></div><div style="position:absolute;left:2466.33px;top:358px;width:24.17px;height:23px;background:#70a0e0"></div><div style="position:absolute;left:2491.50px;top:358px;width:24.17px;height:23px;background:#80a8e8"></div><div style="position:absolute;left:2516.67px;top:358px;width:24.17px;height:23px;background:#90b8e8"></div><div style="position:absolute;left:2541.83px;top:358px;width:24.17px;height:23px;background:#c8dcf8"></div><div style="position:absolute;left:2567.00px;top:358px;width:24.17px;height:23px;background:#0a2088"></div><div style="position:absolute;left:2592.17px;top:358px;width:24.17px;height:23px;background:#1a38b0"></div><div style="position:absolute;left:2617.33px;top:358px;width:24.17px;height:23px;background:#2040c0"></div><div style="position:absolute;left:2642.50px;top:358px;width:24.17px;height:23px;background:#4868d0"></div><div style="position:absolute;left:2667.67px;top:358px;width:24.17px;height:23px;background:#5888e0"></div><div style="position:absolute;left:2692.83px;top:358px;width:24.17px;height:23px;background:#a8c0f0"></div><div style="position:absolute;left:2265.00px;top:382px;width:24.17px;height:23px;background:#001840"></div><div style="position:absolute;left:2290.17px;top:382px;width:24.17px;height:23px;background:#0a2858"></div><div style="position:absolute;left:2315.33px;top:382px;width:24.17px;height:23px;background:#204070"></div><div style="position:absolute;left:2340.50px;top:382px;width:24.17px;height:23px;background:#3a60a0"></div><div style="position:absolute;left:2365.67px;top:382px;width:24.17px;height:23px;background:#7088b8"></div><div style="position:absolute;left:2390.83px;top:382px;width:24.17px;height:23px;background:#88a8d8"></div><div style="position:absolute;left:2416.00px;top:382px;width:24.17px;height:23px;background:#202890"></div><div style="position:absolute;left:2441.17px;top:382px;width:24.17px;height:23px;background:#2838a0"></div><div style="position:absolute;left:2466.33px;top:382px;width:24.17px;height:23px;background:#3040b0"></div><div style="position:absolute;left:2491.50px;top:382px;width:24.17px;height:23px;background:#5058c0"></div><div style="position:absolute;left:2516.67px;top:382px;width:24.17px;height:23px;background:#7070d0"></div><div style="position:absolute;left:2541.83px;top:382px;width:24.17px;height:23px;background:#b8b8e8"></div><div style="position:absolute;left:2567.00px;top:382px;width:24.17px;height:23px;background:#382888"></div><div style="position:absolute;left:2592.17px;top:382px;width:24.17px;height:23px;background:#4838a8"></div><div style="position:absolute;left:2617.33px;top:382px;width:24.17px;height:23px;background:#5840b8"></div><div style="position:absolute;left:2642.50px;top:382px;width:24.17px;height:23px;background:#7860d0"></div><div style="position:absolute;left:2667.67px;top:382px;width:24.17px;height:23px;background:#9878f0"></div><div style="position:absolute;left:2692.83px;top:382px;width:24.17px;height:23px;background:#b8a0f8"></div><div style="position:absolute;left:2265.00px;top:406px;width:24.17px;height:23px;background:#582078"></div><div style="position:absolute;left:2290.17px;top:406px;width:24.17px;height:23px;background:#702890"></div><div style="position:absolute;left:2315.33px;top:406px;width:24.17px;height:23px;background:#8838a0"></div><div style="position:absolute;left:2340.50px;top:406px;width:24.17px;height:23px;background:#a048b0"></div><div style="position:absolute;left:2365.67px;top:406px;width:24.17px;height:23px;background:#c870d8"></div><div style="position:absolute;left:2390.83px;top:406px;width:24.17px;height:23px;background:#e088f0"></div><div style="position:absolute;left:2416.00px;top:406px;width:24.17px;height:23px;background:#981848"></div><div style="position:absolute;left:2441.17px;top:406px;width:24.17px;height:23px;background:#b02858"></div><div style="position:absolute;left:2466.33px;top:406px;width:24.17px;height:23px;background:#c03060"></div><div style="position:absolute;left:2491.50px;top:406px;width:24.17px;height:23px;background:#d05888"></div><div style="position:absolute;left:2516.67px;top:406px;width:24.17px;height:23px;background:#e080b8"></div><div style="position:absolute;left:2541.83px;top:406px;width:24.17px;height:23px;background:#f0a8d0"></div><div style="position:absolute;left:2567.00px;top:406px;width:24.17px;height:23px;background:#c80818"></div><div style="position:absolute;left:2592.17px;top:406px;width:24.17px;height:23px;background:#d01830"></div><div style="position:absolute;left:2617.33px;top:406px;width:24.17px;height:23px;background:#e03048"></div><div style="position:absolute;left:2642.50px;top:406px;width:24.17px;height:23px;background:#e86088"></div><div style="position:absolute;left:2667.67px;top:406px;width:24.17px;height:23px;background:#f07098"></div><div style="position:absolute;left:2692.83px;top:406px;width:24.17px;height:23px;background:#f090b8"></div><div style="position:absolute;left:2265.00px;top:430px;width:24.17px;height:23px;background:#c80808"></div><div style="position:absolute;left:2290.17px;top:430px;width:24.17px;height:23px;background:#d01818"></div><div style="position:absolute;left:2315.33px;top:430px;width:24.17px;height:23px;background:#d82020"></div><div style="position:absolute;left:2340.50px;top:430px;width:24.17px;height:23px;background:#e04040"></div><div style="position:absolute;left:2365.67px;top:430px;width:24.17px;height:23px;background:#e86060"></div><div style="position:absolute;left:2390.83px;top:430px;width:24.17px;height:23px;background:#f0a0a0"></div><div style="position:absolute;left:2416.00px;top:430px;width:24.17px;height:23px;background:#e01010"></div><div style="position:absolute;left:2441.17px;top:430px;width:24.17px;height:23px;background:#e02818"></div><div style="position:absolute;left:2466.33px;top:430px;width:24.17px;height:23px;background:#e84030"></div><div style="position:absolute;left:2491.50px;top:430px;width:24.17px;height:23px;background:#e85040"></div><div style="position:absolute;left:2516.67px;top:430px;width:24.17px;height:23px;background:#f07060"></div><div style="position:absolute;left:2541.83px;top:430px;width:24.17px;height:23px;background:#f8c0c0"></div><div style="position:absolute;left:2567.00px;top:430px;width:24.17px;height:23px;background:#e83810"></div><div style="position:absolute;left:2592.17px;top:430px;width:24.17px;height:23px;background:#e85020"></div><div style="position:absolute;left:2617.33px;top:430px;width:24.17px;height:23px;background:#e86030"></div><div style="position:absolute;left:2642.50px;top:430px;width:24.17px;height:23px;background:#f08050"></div><div style="position:absolute;left:2667.67px;top:430px;width:24.17px;height:23px;background:#f4a078"></div><div style="position:absolute;left:2692.83px;top:430px;width:24.17px;height:23px;background:#fcd8c0"></div><div style="position:absolute;left:2265.00px;top:454px;width:24.17px;height:23px;background:#f05010"></div><div style="position:absolute;left:2290.17px;top:454px;width:24.17px;height:23px;background:#f07020"></div><div style="position:absolute;left:2315.33px;top:454px;width:24.17px;height:23px;background:#f88020"></div><div style="position:absolute;left:2340.50px;top:454px;width:24.17px;height:23px;background:#f8a040"></div><div style="position:absolute;left:2365.67px;top:454px;width:24.17px;height:23px;background:#f8b060"></div><div style="position:absolute;left:2390.83px;top:454px;width:24.17px;height:23px;background:#f8d090"></div><div style="position:absolute;left:2416.00px;top:454px;width:24.17px;height:23px;background:#f0a010"></div><div style="position:absolute;left:2441.17px;top:454px;width:24.17px;height:23px;background:#f0b020"></div><div style="position:absolute;left:2466.33px;top:454px;width:24.17px;height:23px;background:#f4b840"></div><div style="position:absolute;left:2491.50px;top:454px;width:24.17px;height:23px;background:#f8c058"></div><div style="position:absolute;left:2516.67px;top:454px;width:24.17px;height:23px;background:#f8c870"></div><div style="position:absolute;left:2541.83px;top:454px;width:24.17px;height:23px;background:#f8e800"></div><div style="position:absolute;left:2567.00px;top:454px;width:24.17px;height:23px;background:#f8e020"></div><div style="position:absolute;left:2592.17px;top:454px;width:24.17px;height:23px;background:#f8e030"></div><div style="position:absolute;left:2617.33px;top:454px;width:24.17px;height:23px;background:#f8e848"></div><div style="position:absolute;left:2642.50px;top:454px;width:24.17px;height:23px;background:#f8f070"></div><div style="position:absolute;left:2667.67px;top:454px;width:24.17px;height:23px;background:#f8f080"></div><div style="position:absolute;left:2692.83px;top:454px;width:24.17px;height:23px;background:#f8f8a0"></div><div style="position:absolute;left:2265.00px;top:478px;width:24.17px;height:23px;background:#f0f000"></div><div style="position:absolute;left:2290.17px;top:478px;width:24.17px;height:23px;background:#f0f030"></div><div style="position:absolute;left:2315.33px;top:478px;width:24.17px;height:23px;background:#f0f050"></div><div style="position:absolute;left:2340.50px;top:478px;width:24.17px;height:23px;background:#f0f060"></div><div style="position:absolute;left:2365.67px;top:478px;width:24.17px;height:23px;background:#f4f888"></div><div style="position:absolute;left:2390.83px;top:478px;width:24.17px;height:23px;background:#f4f8a0"></div><div style="position:absolute;left:2416.00px;top:478px;width:24.17px;height:23px;background:#f8d898"></div><div style="position:absolute;left:2441.17px;top:478px;width:24.17px;height:23px;background:#f8e0a0"></div><div style="position:absolute;left:2466.33px;top:478px;width:24.17px;height:23px;background:#f8e4b0"></div><div style="position:absolute;left:2491.50px;top:478px;width:24.17px;height:23px;background:#f8eac0"></div><div style="position:absolute;left:2516.67px;top:478px;width:24.17px;height:23px;background:#fcf0d0"></div><div style="position:absolute;left:2541.83px;top:478px;width:24.17px;height:23px;background:#f8f4d0"></div><div style="position:absolute;left:2567.00px;top:478px;width:24.17px;height:23px;background:#f07870"></div><div style="position:absolute;left:2592.17px;top:478px;width:24.17px;height:23px;background:#f09088"></div><div style="position:absolute;left:2617.33px;top:478px;width:24.17px;height:23px;background:#f0a8a0"></div><div style="position:absolute;left:2642.50px;top:478px;width:24.17px;height:23px;background:#f4c0b0"></div><div style="position:absolute;left:2667.67px;top:478px;width:24.17px;height:23px;background:#f4d0c0"></div><div style="position:absolute;left:2692.83px;top:478px;width:24.17px;height:23px;background:#f8e8e0"></div><div style="position:absolute;left:2265.00px;top:502px;width:24.17px;height:23px;background:#e85898"></div><div style="position:absolute;left:2290.17px;top:502px;width:24.17px;height:23px;background:#f070a8"></div><div style="position:absolute;left:2315.33px;top:502px;width:24.17px;height:23px;background:#f080b8"></div><div style="position:absolute;left:2340.50px;top:502px;width:24.17px;height:23px;background:#f090c0"></div><div style="position:absolute;left:2365.67px;top:502px;width:24.17px;height:23px;background:#f0a8d8"></div><div style="position:absolute;left:2390.83px;top:502px;width:24.17px;height:23px;background:#f8b8e8"></div><div style="position:absolute;left:2416.00px;top:502px;width:24.17px;height:23px;background:#e02048"></div><div style="position:absolute;left:2441.17px;top:502px;width:24.17px;height:23px;background:#e04060"></div><div style="position:absolute;left:2466.33px;top:502px;width:24.17px;height:23px;background:#e05878"></div><div style="position:absolute;left:2491.50px;top:502px;width:24.17px;height:23px;background:#e87898"></div><div style="position:absolute;left:2516.67px;top:502px;width:24.17px;height:23px;background:#f0a0c0"></div><div style="position:absolute;left:2541.83px;top:502px;width:24.17px;height:23px;background:#f8c8e0"></div><div style="position:absolute;left:2567.00px;top:502px;width:24.17px;height:23px;background:#f82050"></div><div style="position:absolute;left:2592.17px;top:502px;width:24.17px;height:23px;background:#f84068"></div><div style="position:absolute;left:2617.33px;top:502px;width:24.17px;height:23px;background:#f85878"></div><div style="position:absolute;left:2642.50px;top:502px;width:24.17px;height:23px;background:#f87090"></div><div style="position:absolute;left:2667.67px;top:502px;width:24.17px;height:23px;background:#f890a8"></div><div style="position:absolute;left:2692.83px;top:502px;width:24.17px;height:23px;background:#f8a0b8"></div><div style="position:absolute;left:2416.00px;top:238px;width:150.00px;height:23px;background-color:#fff;background-image:linear-gradient(45deg,#888 25%,transparent 25%,transparent 75%,#888 75%),linear-gradient(45deg,#888 25%,transparent 25%,transparent 75%,#888 75%);background-size:12px 12px;background-position:0 0,6px 6px"></div><div style="position:absolute;left:2390.83px;top:238px;width:25.17px;height:24px;border:1px solid #d02020"></div><div style="position:absolute;left:2721px;top:240px;width:10px;height:286px;background:#5e5f62;border:1px solid #4e4f52;"></div><div style="position:absolute;left:2265px;top:551px;width:16px;height:16px;background:#8a0c0c;border:1px solid #333;"></div><div style="position:absolute;left:2329px;top:551px;width:16px;height:16px;background:#0c8a14;border:1px solid #333;"></div><div style="position:absolute;left:2393px;top:551px;width:16px;height:16px;background:#0c10b0;border:1px solid #333;"></div><svg style="position:absolute;left:2576px;top:532px;overflow:visible" width="36" height="40" viewBox="0 0 36 40"><path d="M2 6Q10 0 16 8L18 18" stroke="#f4f4f4" stroke-width="5" fill="none"/><path d="M2 6Q10 0 16 8L18 18" stroke="#222" stroke-width="1.5" fill="none"/><path d="M12 16H24L18 24Z" fill="#222"/><g fill="#ddd" stroke="#333" stroke-width="0.8"><rect x="14" y="24" width="7" height="7"/><rect x="21" y="24" width="7" height="7"/><rect x="28" y="24" width="7" height="7"/><rect x="14" y="31" width="7" height="7"/><rect x="21" y="31" width="7" height="7"/><rect x="28" y="31" width="7" height="7"/></g><rect x="21" y="17" width="14" height="7" fill="#222"/></svg><svg style="position:absolute;left:2633px;top:530px;overflow:visible" width="40" height="42" viewBox="0 0 40 42"><path d="M14 0Q2 18 2 24Q2 34 14 34Q26 34 26 24Q26 18 14 0Z" fill="#2a2a2a"/><path d="M10 10Q6 18 8 24" stroke="#aaa" stroke-width="2" fill="none"/><path d="M30 24V42M21 33H39" stroke="#2a2a2a" stroke-width="5"/></svg><svg style="position:absolute;left:2689px;top:530px;overflow:visible" width="34" height="42" viewBox="0 0 34 42"><path d="M3 14H31L27 41H7Z" fill="#f4f4f4" stroke="#333" stroke-width="1.5"/><path d="M1 10H33V15H1Z" fill="#eee" stroke="#333" stroke-width="1.2"/><path d="M10 10Q10 2 17 2Q24 2 24 10" fill="none" stroke="#333" stroke-width="3"/><path d="M12 18V38M17 18V38M22 18V38" stroke="#777" stroke-width="1.5"/></svg><div style="position:absolute;left:2264px;top:576px;width:472px;height:2px;background:#48494b;"></div><div style="position:absolute;left:2264px;top:578px;width:472px;height:41px;background:linear-gradient(#414143,#2e2e30);"></div><div style="position:absolute;left:2264px;top:578px;width:42px;height:41px;background:#38383a;border-top:1px solid #76777a;"></div><svg style="position:absolute;left:2278px;top:596px" width="20" height="18"><path d="M0 1L7 8.5L0 16Z" fill="#8d8d8f"/><rect x="9" y="1" width="10" height="3" fill="#8d8d8f"/><rect x="9" y="7" width="10" height="3" fill="#8d8d8f"/><rect x="9" y="13" width="10" height="3" fill="#8d8d8f"/></svg><div style="position:absolute;left:2306px;top:588px;width:180px;height:32px;background:#626367;border-top:1px solid #78797c;border-left:1px solid #727376;border-right:1px solid #48494b;"></div><div style="position:absolute;left:2486px;top:588px;width:166px;height:31px;background:#4a4b4d;border-top:1px solid #5e5f62;border-right:1px solid #3a3a3c;"></div><svg style="position:absolute;left:2497px;top:590px;overflow:visible" width="30" height="32" viewBox="0 0 30 32"><rect x="1" y="12" width="28" height="20" fill="#444"/><path d="M1 4L29 0V10L1 12Z" fill="#555"/><path d="M4 4L8 10M12 3L16 9M20 2L24 8" stroke="#888" stroke-width="2"/></svg><div class="fw" style="position:absolute;left:2539px;top:594px;width:109px;font-size:20px;line-height:24px;color:#8e8e8e;white-space:nowrap;">オートアクション</div><svg style="position:absolute;left:2314px;top:590px;overflow:visible" width="36" height="36" viewBox="0 0 36 36"><path d="M2 16L10 10L14 18Q22 2 34 0Q22 10 14 26Z" fill="#d81818"/><rect x="0" y="24" width="30" height="7" fill="#111"/><rect x="2" y="31" width="30" height="4" fill="#f4f4f4"/></svg><div class="fw" style="position:absolute;left:2358px;top:594px;width:121px;font-size:20px;line-height:24px;color:#e6e2d6;white-space:nowrap;">レイヤープロパティ</div><div style="position:absolute;left:2264px;top:619px;width:472px;height:12px;background:#626367;"></div><div style="position:absolute;left:2264px;top:630px;width:472px;height:192px;background:#68696c;border-left:1px solid #4d4e50;border-bottom:1px solid #454648;"></div><div class="fw" style="position:absolute;left:2285px;top:631px;width:45px;font-size:25px;line-height:30px;color:#f4f1e8;white-space:nowrap;">効果</div><div style="position:absolute;left:2270px;top:646px;width:12px;height:1px;background:#7b7c7f;"></div><div style="position:absolute;left:2337px;top:646px;width:380px;height:1px;background:#7b7c7f;"></div><div style="position:absolute;left:2557px;top:661px;width:159px;height:46px;background:linear-gradient(#6c6d70,#5d5e61);border:1px solid #4e4f52;border-radius:2px;"></div><svg style="position:absolute;left:2565px;top:670px;overflow:visible" width="30" height="30" viewBox="0 0 30 30"><circle cx="15" cy="15" r="12" fill="#1a1a1a" stroke="#fff" stroke-width="3.5"/></svg><div style="position:absolute;left:2609px;top:670px;width:32px;height:30px;background-image:linear-gradient(45deg,#222 25%,transparent 25%,transparent 75%,#222 75%),linear-gradient(45deg,#222 25%,transparent 25%,transparent 75%,#222 75%);background-size:10px 10px;background-position:0 0,5px 5px"></div><div style="position:absolute;left:2656px;top:676px;width:26px;height:26px;background:#fff;"></div><div style="position:absolute;left:2652px;top:668px;width:26px;height:26px;background:#5ab8f8;"></div><svg style="position:absolute;left:2689.0px;top:678.0px" width="22" height="12"><path d="M0 0H22L11.0 12Z" fill="#2b2b2c"/></svg><div class="fw" style="position:absolute;left:2285px;top:714px;width:69px;font-size:25px;line-height:30px;color:#f4f1e8;white-space:nowrap;">表現色</div><div style="position:absolute;left:2270px;top:729px;width:12px;height:1px;background:#7b7c7f;"></div><div style="position:absolute;left:2365px;top:729px;width:352px;height:1px;background:#7b7c7f;"></div><div style="position:absolute;left:2295px;top:748px;width:320px;height:47px;background:linear-gradient(#6c6d70,#5d5e61);border:1px solid #4e4f52;border-radius:2px;"></div><div style="position:absolute;left:2389px;top:754px;width:12px;height:35px;background:#f86c6c;"></div><div style="position:absolute;left:2401px;top:754px;width:11px;height:35px;background:#64b4f8;"></div><div style="position:absolute;left:2412px;top:754px;width:11px;height:35px;background:#78f078;"></div><div class="fw" style="position:absolute;left:2435px;top:757px;width:52px;font-size:25px;line-height:30px;color:#f4f1e8;white-space:nowrap;">カラー</div><svg style="position:absolute;left:2585.0px;top:765.0px" width="24" height="12"><path d="M0 0H24L12.0 12Z" fill="#2b2b2c"/></svg><div style="position:absolute;left:2721px;top:631px;width:10px;height:187px;background:#5e5f62;border:1px solid #4e4f52;"></div><div style="position:absolute;left:2264px;top:822px;width:472px;height:41px;background:linear-gradient(#414143,#2e2e30);"></div><div style="position:absolute;left:2264px;top:822px;width:42px;height:41px;background:#38383a;border-top:1px solid #76777a;"></div><svg style="position:absolute;left:2278px;top:840px" width="20" height="18"><path d="M0 1L7 8.5L0 16Z" fill="#8d8d8f"/><rect x="9" y="1" width="10" height="3" fill="#8d8d8f"/><rect x="9" y="7" width="10" height="3" fill="#8d8d8f"/><rect x="9" y="13" width="10" height="3" fill="#8d8d8f"/></svg><div style="position:absolute;left:2306px;top:832px;width:112px;height:32px;background:#626367;border-top:1px solid #78797c;border-left:1px solid #727376;border-right:1px solid #48494b;"></div><svg style="position:absolute;left:2316px;top:838px;overflow:visible" width="32" height="28" viewBox="0 0 32 28"><path d="M1 8L16 2L31 8L16 14Z" fill="#ccc" stroke="#222"/><path d="M1 14L16 8L31 14L16 20Z" fill="#ddd" stroke="#222"/><path d="M1 20L16 14L31 20L16 26Z" fill="#fff" stroke="#222"/></svg><div class="fw" style="position:absolute;left:2358px;top:838px;width:55px;font-size:20px;line-height:24px;color:#e6e2d6;white-space:nowrap;">レイヤー</div><div style="position:absolute;left:2264px;top:863px;width:472px;height:12px;background:#626367;"></div><div style="position:absolute;left:2264px;top:874px;width:472px;height:868px;background:#68696c;border-left:1px solid #4d4e50;"></div><div style="position:absolute;left:2266px;top:875px;width:232px;height:46px;background:linear-gradient(#6c6d70,#5d5e61);border:1px solid #4e4f52;border-radius:2px;"></div><div class="fw" style="position:absolute;left:2346px;top:885px;width:44px;font-size:26px;line-height:31px;color:#f4f1e8;white-space:nowrap;">通常</div><svg style="position:absolute;left:2469.0px;top:892.0px" width="24" height="12"><path d="M0 0H24L12.0 12Z" fill="#2b2b2c"/></svg><div style="position:absolute;left:2511px;top:884px;width:135px;height:17px;border:1px solid #333;background-color:#e8e8e8;background-image:linear-gradient(90deg,rgba(220,220,220,0),rgba(200,200,200,1)),linear-gradient(45deg,#bbb 25%,transparent 25%,transparent 75%,#bbb 75%),linear-gradient(45deg,#bbb 25%,transparent 25%,transparent 75%,#bbb 75%);background-size:100% 100%,8px 8px,8px 8px;background-position:0 0,0 0,4px 4px"></div><div style="position:absolute;left:2645px;top:874px;width:7px;height:40px;background:#555659;border:1px solid #48494b;"></div><div class="fw" style="position:absolute;left:2668px;top:879px;width:35px;font-size:24px;line-height:28px;color:#f4f1e8;white-space:nowrap;">100</div><svg style="position:absolute;left:2715px;top:886px;overflow:visible" width="12" height="18" viewBox="0 0 12 18"><path d="M0 7L6 0L12 7Z M0 11L6 18L12 11Z" fill="#222"/></svg><div style="position:absolute;left:2266px;top:924px;width:74px;height:46px;background:linear-gradient(#6c6d70,#5d5e61);border:1px solid #4e4f52;border-radius:2px;"></div><div style="position:absolute;left:2271px;top:932px;width:36px;height:31px;background:#5c5d60;border:1.5px solid #1c1c1c;"></div><svg style="position:absolute;left:2311.0px;top:941.5px" width="20" height="11"><path d="M0 0H20L10.0 11Z" fill="#2b2b2c"/></svg><svg style="position:absolute;left:2387px;top:930px;overflow:visible" width="42" height="38" viewBox="0 0 42 38"><ellipse cx="21" cy="12" rx="19" ry="10" fill="none" stroke="#222" stroke-width="2" stroke-dasharray="3 2"/><ellipse cx="21" cy="24" rx="19" ry="11" fill="#ccc" stroke="#333" stroke-width="1.5"/><ellipse cx="21" cy="20" rx="15" ry="6" fill="#2a2a2a"/></svg><svg style="position:absolute;left:2445px;top:928px;overflow:visible" width="38" height="42" viewBox="0 0 38 42"><path d="M15 10H23L25 42H13Z" fill="#eee" stroke="#222"/><rect x="14" y="10" width="10" height="7" fill="#222"/><path d="M14 4L2 0V16Z M24 4L36 0V16Z" fill="#888" opacity="0.7"/></svg><svg style="position:absolute;left:2505px;top:928px;overflow:visible" width="32" height="42" viewBox="0 0 32 42"><path d="M7 18V10Q7 2 16 2Q25 2 25 10V18" fill="none" stroke="#333" stroke-width="4"/><rect x="3" y="17" width="26" height="24" rx="2" fill="#444"/><circle cx="16" cy="27" r="3" fill="#eee"/><rect x="14.5" y="27" width="3" height="8" fill="#eee"/></svg><svg style="position:absolute;left:2558px;top:928px;overflow:visible" width="36" height="42" viewBox="0 0 36 42"><path d="M6 14V8Q6 2 13 2Q20 2 20 8V14" fill="none" stroke="#333" stroke-width="3"/><rect x="2" y="13" width="22" height="18" fill="#f4f4f4" stroke="#222"/><circle cx="13" cy="21" r="2.5" fill="#222"/><rect x="16" y="25" width="20" height="17" fill="#fff" stroke="#222"/><rect x="26" y="25" width="10" height="8" fill="#444"/><rect x="16" y="33" width="10" height="9" fill="#444"/></svg><div style="position:absolute;left:2604px;top:925px;width:62px;height:45px;background:#6a6b6e;border:1px solid #5a5b5e;border-radius:2px;"></div><svg style="position:absolute;left:2611px;top:933px;overflow:visible" width="50" height="34" viewBox="0 0 50 34"><rect x="0" y="0" width="25" height="24" fill="#767779" stroke="#6a6a6a"/><path d="M20 14H44L32 26Z" fill="#58595b"/><path d="M20 22L30 32M30 22L20 32" stroke="#58595b" stroke-width="3"/></svg><div style="position:absolute;left:2670px;top:925px;width:62px;height:45px;background:#6a6b6e;border:1px solid #5a5b5e;border-radius:2px;"></div><svg style="position:absolute;left:2677px;top:933px;overflow:visible" width="50" height="34" viewBox="0 0 50 34"><path d="M1 32L1 1L24 1Z" fill="none" stroke="#59595b" stroke-width="3"/><path d="M24 14H48L36 26Z" fill="#58595b"/><path d="M22 22L32 32M32 22L22 32" stroke="#58595b" stroke-width="3"/></svg><div style="position:absolute;left:2264px;top:974px;width:472px;height:718px;overflow:hidden;"></div><div style="position:absolute;left:0;top:0;width:2736px;height:1757px;clip-path:polygon(2264px 974px,2736px 974px,2736px 1692px,2264px 1692px);"><div style="position:absolute;left:2268px;top:974px;width:454px;height:718px;background:#68696c;border-left:1px solid #48494b;"></div><div style="position:absolute;left:2268px;top:1008px;width:454px;height:1px;background:#2c2d31;"></div><div style="position:absolute;left:2268px;top:1009px;width:454px;height:1px;background:#75767a;"></div><div style="position:absolute;left:2313px;top:952px;width:1px;height:57px;background:#48494b;"></div><div style="position:absolute;left:2355px;top:952px;width:1px;height:57px;background:#48494b;"></div><svg style="position:absolute;left:2277px;top:972px;overflow:visible" width="26" height="18" viewBox="0 0 26 18"><path d="M1 9Q13 -3 25 9Q13 21 1 9Z" fill="#fff" stroke="#222" stroke-width="2"/><circle cx="13" cy="9" r="5.5" fill="#111"/><circle cx="11" cy="7" r="1.5" fill="#fff"/></svg><div style="position:absolute;left:2359px;top:955px;width:4px;height:51px;background:#e07878;"></div><div style="position:absolute;left:2367px;top:956px;width:36px;height:49px;border:1.5px solid #111;background-color:#fff;background-image:linear-gradient(45deg,#ddd 25%,transparent 25%,transparent 75%,#ddd 75%),linear-gradient(45deg,#ddd 25%,transparent 25%,transparent 75%,#ddd 75%);background-size:8px 8px;background-position:0 0,4px 4px"></div><div class="fw" style="position:absolute;left:2412px;top:953px;width:221px;font-size:24px;line-height:28px;color:#f4f1e8;white-space:nowrap;">100 % 焼き込み(リニア)</div><div class="fw" style="position:absolute;left:2412px;top:979px;width:103px;font-size:24px;line-height:28px;color:#f4f1e8;white-space:nowrap;">レイヤー 18</div><div style="position:absolute;left:2268px;top:1065px;width:454px;height:1px;background:#2c2d31;"></div><div style="position:absolute;left:2268px;top:1066px;width:454px;height:1px;background:#75767a;"></div><div style="position:absolute;left:2313px;top:1009px;width:1px;height:57px;background:#48494b;"></div><div style="position:absolute;left:2355px;top:1009px;width:1px;height:57px;background:#48494b;"></div><svg style="position:absolute;left:2277px;top:1029px;overflow:visible" width="26" height="18" viewBox="0 0 26 18"><path d="M1 9Q13 -3 25 9Q13 21 1 9Z" fill="#fff" stroke="#222" stroke-width="2"/><circle cx="13" cy="9" r="5.5" fill="#111"/><circle cx="11" cy="7" r="1.5" fill="#fff"/></svg><div style="position:absolute;left:2359px;top:1012px;width:4px;height:51px;background:#e07878;"></div><div style="position:absolute;left:2367px;top:1013px;width:36px;height:49px;border:1.5px solid #111;background-color:#fff;background-image:linear-gradient(45deg,#ddd 25%,transparent 25%,transparent 75%,#ddd 75%),linear-gradient(45deg,#ddd 25%,transparent 25%,transparent 75%,#ddd 75%);background-size:8px 8px;background-position:0 0,4px 4px"></div><div class="fw" style="position:absolute;left:2412px;top:1010px;width:112px;font-size:24px;line-height:28px;color:#f4f1e8;white-space:nowrap;">100 % 乗算</div><div class="fw" style="position:absolute;left:2412px;top:1036px;width:103px;font-size:24px;line-height:28px;color:#f4f1e8;white-space:nowrap;">レイヤー 17</div><div style="position:absolute;left:2268px;top:1122px;width:454px;height:1px;background:#2c2d31;"></div><div style="position:absolute;left:2268px;top:1123px;width:454px;height:1px;background:#75767a;"></div><div style="position:absolute;left:2313px;top:1066px;width:1px;height:57px;background:#48494b;"></div><div style="position:absolute;left:2355px;top:1066px;width:1px;height:57px;background:#48494b;"></div><svg style="position:absolute;left:2277px;top:1086px;overflow:visible" width="26" height="18" viewBox="0 0 26 18"><path d="M1 9Q13 -3 25 9Q13 21 1 9Z" fill="#fff" stroke="#222" stroke-width="2"/><circle cx="13" cy="9" r="5.5" fill="#111"/><circle cx="11" cy="7" r="1.5" fill="#fff"/></svg><div style="position:absolute;left:2359px;top:1069px;width:4px;height:51px;background:#e07878;"></div><div style="position:absolute;left:2367px;top:1070px;width:36px;height:49px;border:1.5px solid #111;background-color:#fff;background-image:linear-gradient(45deg,#ddd 25%,transparent 25%,transparent 75%,#ddd 75%),linear-gradient(45deg,#ddd 25%,transparent 25%,transparent 75%,#ddd 75%);background-size:8px 8px;background-position:0 0,4px 4px"></div><div class="fw" style="position:absolute;left:2412px;top:1067px;width:112px;font-size:24px;line-height:28px;color:#f4f1e8;white-space:nowrap;">100 % 乗算</div><div class="fw" style="position:absolute;left:2412px;top:1093px;width:91px;font-size:24px;line-height:28px;color:#f4f1e8;white-space:nowrap;">レイヤー 5</div><div style="position:absolute;left:2269px;top:1123px;width:87px;height:57px;background:#88f888;"></div><div style="position:absolute;left:2268px;top:1179px;width:454px;height:1px;background:#2c2d31;"></div><div style="position:absolute;left:2268px;top:1180px;width:454px;height:1px;background:#75767a;"></div><div style="position:absolute;left:2313px;top:1123px;width:1px;height:57px;background:#48494b;"></div><div style="position:absolute;left:2355px;top:1123px;width:1px;height:57px;background:#48494b;"></div><svg style="position:absolute;left:2277px;top:1143px;overflow:visible" width="26" height="18" viewBox="0 0 26 18"><path d="M1 9Q13 -3 25 9Q13 21 1 9Z" fill="#fff" stroke="#222" stroke-width="2"/><circle cx="13" cy="9" r="5.5" fill="#111"/><circle cx="11" cy="7" r="1.5" fill="#fff"/></svg><div style="position:absolute;left:2359px;top:1126px;width:4px;height:51px;background:#e07878;"></div><div style="position:absolute;left:2367px;top:1127px;width:36px;height:49px;border:1.5px solid #111;background-color:#fff;background-image:linear-gradient(45deg,#ddd 25%,transparent 25%,transparent 75%,#ddd 75%),linear-gradient(45deg,#ddd 25%,transparent 25%,transparent 75%,#ddd 75%);background-size:8px 8px;background-position:0 0,4px 4px"></div><div class="fw" style="position:absolute;left:2412px;top:1124px;width:112px;font-size:24px;line-height:28px;color:#f4f1e8;white-space:nowrap;">100 % 通常</div><div class="fw" style="position:absolute;left:2412px;top:1150px;width:103px;font-size:24px;line-height:28px;color:#f4f1e8;white-space:nowrap;">レイヤー 13</div><div style="position:absolute;left:2268px;top:1236px;width:454px;height:1px;background:#2c2d31;"></div><div style="position:absolute;left:2268px;top:1237px;width:454px;height:1px;background:#75767a;"></div><div style="position:absolute;left:2313px;top:1180px;width:1px;height:57px;background:#48494b;"></div><div style="position:absolute;left:2355px;top:1180px;width:1px;height:57px;background:#48494b;"></div><svg style="position:absolute;left:2277px;top:1200px;overflow:visible" width="26" height="18" viewBox="0 0 26 18"><path d="M1 9Q13 -3 25 9Q13 21 1 9Z" fill="#fff" stroke="#222" stroke-width="2"/><circle cx="13" cy="9" r="5.5" fill="#111"/><circle cx="11" cy="7" r="1.5" fill="#fff"/></svg><div style="position:absolute;left:2359px;top:1183px;width:4px;height:51px;background:#e07878;"></div><div style="position:absolute;left:2367px;top:1184px;width:36px;height:49px;border:1.5px solid #111;background-color:#fff;background-image:linear-gradient(45deg,#ddd 25%,transparent 25%,transparent 75%,#ddd 75%),linear-gradient(45deg,#ddd 25%,transparent 25%,transparent 75%,#ddd 75%);background-size:8px 8px;background-position:0 0,4px 4px"></div><div style="position:absolute;left:2371px;top:1221px;width:30px;height:8px;background:#d8a850;border-radius:2px;"></div><div class="fw" style="position:absolute;left:2412px;top:1181px;width:112px;font-size:24px;line-height:28px;color:#f4f1e8;white-space:nowrap;">100 % 通常</div><div class="fw" style="position:absolute;left:2412px;top:1207px;width:91px;font-size:24px;line-height:28px;color:#f4f1e8;white-space:nowrap;">レイヤー 3</div><div style="position:absolute;left:2268px;top:1293px;width:454px;height:1px;background:#2c2d31;"></div><div style="position:absolute;left:2268px;top:1294px;width:454px;height:1px;background:#75767a;"></div><div style="position:absolute;left:2313px;top:1237px;width:1px;height:57px;background:#48494b;"></div><div style="position:absolute;left:2355px;top:1237px;width:1px;height:57px;background:#48494b;"></div><svg style="position:absolute;left:2277px;top:1257px;overflow:visible" width="26" height="18" viewBox="0 0 26 18"><path d="M1 9Q13 -3 25 9Q13 21 1 9Z" fill="#fff" stroke="#222" stroke-width="2"/><circle cx="13" cy="9" r="5.5" fill="#111"/><circle cx="11" cy="7" r="1.5" fill="#fff"/></svg><div style="position:absolute;left:2359px;top:1240px;width:4px;height:51px;background:#e07878;"></div><div style="position:absolute;left:2367px;top:1241px;width:36px;height:49px;border:1.5px solid #111;background-color:#fff;background-image:linear-gradient(45deg,#ddd 25%,transparent 25%,transparent 75%,#ddd 75%),linear-gradient(45deg,#ddd 25%,transparent 25%,transparent 75%,#ddd 75%);background-size:8px 8px;background-position:0 0,4px 4px"></div><div class="fw" style="position:absolute;left:2412px;top:1238px;width:112px;font-size:24px;line-height:28px;color:#f4f1e8;white-space:nowrap;">100 % 乗算</div><div class="fw" style="position:absolute;left:2412px;top:1264px;width:91px;font-size:24px;line-height:28px;color:#f4f1e8;white-space:nowrap;">レイヤー 2</div><div style="position:absolute;left:2268px;top:1350px;width:454px;height:1px;background:#2c2d31;"></div><div style="position:absolute;left:2268px;top:1351px;width:454px;height:1px;background:#75767a;"></div><div style="position:absolute;left:2313px;top:1294px;width:1px;height:57px;background:#48494b;"></div><div style="position:absolute;left:2355px;top:1294px;width:1px;height:57px;background:#48494b;"></div><svg style="position:absolute;left:2277px;top:1314px;overflow:visible" width="26" height="18" viewBox="0 0 26 18"><path d="M1 9Q13 -3 25 9Q13 21 1 9Z" fill="#fff" stroke="#222" stroke-width="2"/><circle cx="13" cy="9" r="5.5" fill="#111"/><circle cx="11" cy="7" r="1.5" fill="#fff"/></svg><div style="position:absolute;left:2359px;top:1297px;width:4px;height:51px;background:#e07878;"></div><div style="position:absolute;left:2367px;top:1298px;width:36px;height:49px;border:1.5px solid #111;background-color:#fff;background-image:linear-gradient(45deg,#ddd 25%,transparent 25%,transparent 75%,#ddd 75%),linear-gradient(45deg,#ddd 25%,transparent 25%,transparent 75%,#ddd 75%);background-size:8px 8px;background-position:0 0,4px 4px"></div><div style="position:absolute;left:2381px;top:1320px;width:18px;height:24px;border:2px solid #f2e2c0;border-radius:40%;"></div><div class="fw" style="position:absolute;left:2412px;top:1295px;width:221px;font-size:24px;line-height:28px;color:#f4f1e8;white-space:nowrap;">100 % 焼き込み(リニア)</div><div class="fw" style="position:absolute;left:2412px;top:1321px;width:103px;font-size:24px;line-height:28px;color:#f4f1e8;white-space:nowrap;">レイヤー 11</div><div style="position:absolute;left:2269px;top:1350px;width:87px;height:57px;background:#7878f8;"></div><div style="position:absolute;left:2268px;top:1406px;width:454px;height:1px;background:#2c2d31;"></div><div style="position:absolute;left:2268px;top:1407px;width:454px;height:1px;background:#75767a;"></div><div style="position:absolute;left:2313px;top:1350px;width:1px;height:57px;background:#48494b;"></div><div style="position:absolute;left:2355px;top:1350px;width:1px;height:57px;background:#48494b;"></div><svg style="position:absolute;left:2277px;top:1370px;overflow:visible" width="26" height="18" viewBox="0 0 26 18"><path d="M1 9Q13 -3 25 9Q13 21 1 9Z" fill="#fff" stroke="#222" stroke-width="2"/><circle cx="13" cy="9" r="5.5" fill="#111"/><circle cx="11" cy="7" r="1.5" fill="#fff"/></svg><div style="position:absolute;left:2359px;top:1353px;width:4px;height:51px;background:#e07878;"></div><div style="position:absolute;left:2367px;top:1354px;width:36px;height:49px;border:1.5px solid #111;background-color:#fff;background-image:linear-gradient(45deg,#ddd 25%,transparent 25%,transparent 75%,#ddd 75%),linear-gradient(45deg,#ddd 25%,transparent 25%,transparent 75%,#ddd 75%);background-size:8px 8px;background-position:0 0,4px 4px"></div><div style="position:absolute;left:2379px;top:1366px;width:22px;height:34px;background:#ecd09a;border-radius:40% 30% 10% 50%;"></div><div class="fw" style="position:absolute;left:2412px;top:1351px;width:112px;font-size:24px;line-height:28px;color:#f4f1e8;white-space:nowrap;">100 % 通常</div><div class="fw" style="position:absolute;left:2412px;top:1377px;width:103px;font-size:24px;line-height:28px;color:#f4f1e8;white-space:nowrap;">レイヤー 14</div><div style="position:absolute;left:2268px;top:1463px;width:454px;height:1px;background:#2c2d31;"></div><div style="position:absolute;left:2268px;top:1464px;width:454px;height:1px;background:#75767a;"></div><div style="position:absolute;left:2313px;top:1407px;width:1px;height:57px;background:#48494b;"></div><div style="position:absolute;left:2355px;top:1407px;width:1px;height:57px;background:#48494b;"></div><svg style="position:absolute;left:2277px;top:1427px;overflow:visible" width="26" height="18" viewBox="0 0 26 18"><path d="M1 9Q13 -3 25 9Q13 21 1 9Z" fill="#fff" stroke="#222" stroke-width="2"/><circle cx="13" cy="9" r="5.5" fill="#111"/><circle cx="11" cy="7" r="1.5" fill="#fff"/></svg><div style="position:absolute;left:2359px;top:1410px;width:4px;height:51px;background:#e07878;"></div><div style="position:absolute;left:2367px;top:1411px;width:36px;height:49px;border:1.5px solid #111;background-color:#fff;background-image:linear-gradient(45deg,#ddd 25%,transparent 25%,transparent 75%,#ddd 75%),linear-gradient(45deg,#ddd 25%,transparent 25%,transparent 75%,#ddd 75%);background-size:8px 8px;background-position:0 0,4px 4px"></div><div class="fw" style="position:absolute;left:2412px;top:1408px;width:112px;font-size:24px;line-height:28px;color:#f4f1e8;white-space:nowrap;">100 % 通常</div><div class="fw" style="position:absolute;left:2412px;top:1434px;width:91px;font-size:24px;line-height:28px;color:#f4f1e8;white-space:nowrap;">レイヤー 4</div><div style="position:absolute;left:2269px;top:1464px;width:87px;height:57px;background:#f8a880;"></div><div style="position:absolute;left:2268px;top:1520px;width:454px;height:1px;background:#2c2d31;"></div><div style="position:absolute;left:2268px;top:1521px;width:454px;height:1px;background:#75767a;"></div><div style="position:absolute;left:2313px;top:1464px;width:1px;height:57px;background:#48494b;"></div><div style="position:absolute;left:2355px;top:1464px;width:1px;height:57px;background:#48494b;"></div><svg style="position:absolute;left:2277px;top:1484px;overflow:visible" width="26" height="18" viewBox="0 0 26 18"><path d="M1 9Q13 -3 25 9Q13 21 1 9Z" fill="#fff" stroke="#222" stroke-width="2"/><circle cx="13" cy="9" r="5.5" fill="#111"/><circle cx="11" cy="7" r="1.5" fill="#fff"/></svg><div style="position:absolute;left:2359px;top:1467px;width:4px;height:51px;background:#e07878;"></div><div style="position:absolute;left:2367px;top:1468px;width:36px;height:49px;border:1.5px solid #111;background-color:#fff;background-image:linear-gradient(45deg,#ddd 25%,transparent 25%,transparent 75%,#ddd 75%),linear-gradient(45deg,#ddd 25%,transparent 25%,transparent 75%,#ddd 75%);background-size:8px 8px;background-position:0 0,4px 4px"></div><div class="fw" style="position:absolute;left:2412px;top:1465px;width:112px;font-size:24px;line-height:28px;color:#f4f1e8;white-space:nowrap;">100 % 通常</div><div class="fw" style="position:absolute;left:2412px;top:1491px;width:103px;font-size:24px;line-height:28px;color:#f4f1e8;white-space:nowrap;">レイヤー 16</div><div style="position:absolute;left:2268px;top:1577px;width:454px;height:1px;background:#2c2d31;"></div><div style="position:absolute;left:2268px;top:1578px;width:454px;height:1px;background:#75767a;"></div><div style="position:absolute;left:2313px;top:1521px;width:1px;height:57px;background:#48494b;"></div><div style="position:absolute;left:2355px;top:1521px;width:1px;height:57px;background:#48494b;"></div><svg style="position:absolute;left:2277px;top:1541px;overflow:visible" width="26" height="18" viewBox="0 0 26 18"><path d="M1 9Q13 -3 25 9Q13 21 1 9Z" fill="#fff" stroke="#222" stroke-width="2"/><circle cx="13" cy="9" r="5.5" fill="#111"/><circle cx="11" cy="7" r="1.5" fill="#fff"/></svg><div style="position:absolute;left:2359px;top:1524px;width:4px;height:51px;background:#e07878;"></div><div style="position:absolute;left:2367px;top:1525px;width:36px;height:49px;border:1.5px solid #111;background-color:#fff;background-image:linear-gradient(45deg,#ddd 25%,transparent 25%,transparent 75%,#ddd 75%),linear-gradient(45deg,#ddd 25%,transparent 25%,transparent 75%,#ddd 75%);background-size:8px 8px;background-position:0 0,4px 4px"></div><div class="fw" style="position:absolute;left:2412px;top:1522px;width:112px;font-size:24px;line-height:28px;color:#f4f1e8;white-space:nowrap;">100 % 通常</div><div class="fw" style="position:absolute;left:2412px;top:1548px;width:103px;font-size:24px;line-height:28px;color:#f4f1e8;white-space:nowrap;">レイヤー 10</div><div style="position:absolute;left:2268px;top:1634px;width:454px;height:1px;background:#2c2d31;"></div><div style="position:absolute;left:2268px;top:1635px;width:454px;height:1px;background:#75767a;"></div><div style="position:absolute;left:2313px;top:1578px;width:1px;height:57px;background:#48494b;"></div><div style="position:absolute;left:2355px;top:1578px;width:1px;height:57px;background:#48494b;"></div><svg style="position:absolute;left:2277px;top:1598px;overflow:visible" width="26" height="18" viewBox="0 0 26 18"><path d="M1 9Q13 -3 25 9Q13 21 1 9Z" fill="#fff" stroke="#222" stroke-width="2"/><circle cx="13" cy="9" r="5.5" fill="#111"/><circle cx="11" cy="7" r="1.5" fill="#fff"/></svg><div style="position:absolute;left:2363px;top:1582px;width:36px;height:49px;border:1.5px solid #111;background-color:#fff;background-image:linear-gradient(45deg,#ddd 25%,transparent 25%,transparent 75%,#ddd 75%),linear-gradient(45deg,#ddd 25%,transparent 25%,transparent 75%,#ddd 75%);background-size:8px 8px;background-position:0 0,4px 4px"></div><div style="position:absolute;left:2365px;top:1586px;width:14px;height:16px;background:#fcf2de;border-radius:40%;"></div><div style="position:absolute;left:2381px;top:1588px;width:16px;height:40px;background:#fcf2de;border-radius:30%;"></div><div class="fw" style="position:absolute;left:2408px;top:1579px;width:112px;font-size:24px;line-height:28px;color:#f4f1e8;white-space:nowrap;">100 % 通常</div><div class="fw" style="position:absolute;left:2408px;top:1605px;width:103px;font-size:24px;line-height:28px;color:#f4f1e8;white-space:nowrap;">レイヤー 12</div><div style="position:absolute;left:2356px;top:1635px;width:366px;height:57px;background:linear-gradient(#7c929e,#5d7180);"></div><div style="position:absolute;left:2268px;top:1691px;width:454px;height:1px;background:#2c2d31;"></div><div style="position:absolute;left:2268px;top:1692px;width:454px;height:1px;background:#75767a;"></div><div style="position:absolute;left:2313px;top:1635px;width:1px;height:57px;background:#48494b;"></div><div style="position:absolute;left:2355px;top:1635px;width:1px;height:57px;background:#48494b;"></div><svg style="position:absolute;left:2277px;top:1655px;overflow:visible" width="26" height="18" viewBox="0 0 26 18"><path d="M1 9Q13 -3 25 9Q13 21 1 9Z" fill="#fff" stroke="#222" stroke-width="2"/><circle cx="13" cy="9" r="5.5" fill="#111"/><circle cx="11" cy="7" r="1.5" fill="#fff"/></svg><div style="position:absolute;left:2361px;top:1637px;width:41px;height:53px;border:1px solid #111;"></div><div style="position:absolute;left:2363px;top:1639px;width:36px;height:49px;border:1.5px solid #111;background-color:#fff;background-image:linear-gradient(45deg,#ddd 25%,transparent 25%,transparent 75%,#ddd 75%),linear-gradient(45deg,#ddd 25%,transparent 25%,transparent 75%,#ddd 75%);background-size:8px 8px;background-position:0 0,4px 4px"></div><div class="fw" style="position:absolute;left:2408px;top:1636px;width:112px;font-size:24px;line-height:28px;color:#f4f1e8;white-space:nowrap;">100 % 通常</div><div class="fw" style="position:absolute;left:2408px;top:1662px;width:103px;font-size:24px;line-height:28px;color:#f4f1e8;white-space:nowrap;">レイヤー 21</div><svg style="position:absolute;left:2322px;top:1652px;overflow:visible" width="30" height="28" viewBox="0 0 30 28"><path d="M2 26L22 8L26 12L6 26Z" fill="#ddd" stroke="#222" stroke-width="1.2"/><path d="M20 6L26 0L30 4L24 10Z" fill="#111"/></svg></div><div style="position:absolute;left:2722px;top:975px;width:10px;height:717px;background:#5e5f62;border:1px solid #4e4f52;"></div><div style="position:absolute;left:2723px;top:1152px;width:8px;height:407px;background:#6e6f72;"></div><div style="position:absolute;left:2264px;top:1692px;width:472px;height:50px;background:#68696c;border-top:1px solid #48494b;"></div><svg style="position:absolute;left:2298px;top:1699px;overflow:visible" width="40" height="40" viewBox="0 0 40 40"><path d="M2 2H32V30L24 38H2Z" fill="#f4f8fb" stroke="#222" stroke-width="1.5"/><path d="M24 38V30H32" fill="#fff" stroke="#222" stroke-width="1.5"/></svg><svg style="position:absolute;left:2353px;top:1699px;overflow:visible" width="40" height="40" viewBox="0 0 40 40"><path d="M2 2H28V36H2Z" fill="#f4f8fb" stroke="#666" stroke-width="1"/><path d="M22 26H34V38H22Z" fill="#fff" stroke="#333" stroke-width="1.2"/></svg><svg style="position:absolute;left:2409px;top:1699px;overflow:visible" width="40" height="40" viewBox="0 0 40 40"><path d="M2 6H14L18 10H30V32H2Z" fill="#bbb" stroke="#444" stroke-width="1"/><path d="M20 18H34V38H20Z" fill="#f6f8fa" stroke="#444" stroke-width="1"/></svg><svg style="position:absolute;left:2465px;top:1699px;overflow:visible" width="40" height="40" viewBox="0 0 40 40"><path d="M0 12L17 2L34 12L17 22Z" fill="#fff" stroke="#222" stroke-width="1.5"/><path d="M0 26L17 16L34 26L17 36Z" fill="#222"/><path d="M13 6H21V18H26L17 28L8 18H13Z" fill="#fff" stroke="#222" stroke-width="1.5"/></svg><svg style="position:absolute;left:2521px;top:1699px;overflow:visible" width="40" height="40" viewBox="0 0 40 40"><path d="M0 12L17 2L34 12L17 22Z" fill="none" stroke="#222" stroke-width="2" stroke-dasharray="3 2"/><path d="M0 26L17 16L34 26L17 36Z" fill="#fff" stroke="#222"/><path d="M13 6H21V18H26L17 28L8 18H13Z" fill="#111"/></svg><svg style="position:absolute;left:2577px;top:1699px;overflow:visible" width="40" height="40" viewBox="0 0 40 40"><rect x="0" y="5" width="38" height="28" fill="#444" stroke="#222"/><circle cx="19" cy="19" r="8" fill="#fff"/></svg><svg style="position:absolute;left:2633px;top:1699px;overflow:visible" width="40" height="40" viewBox="0 0 40 40"><path d="M8 4V36M2 28L8 36L14 28" stroke="#59595b" stroke-width="4" fill="none"/><path d="M16 10L36 2L40 24L22 30Z" fill="#59595b"/></svg><svg style="position:absolute;left:2689px;top:1699px;overflow:visible" width="40" height="40" viewBox="0 0 40 40"><path d="M3 12H31L27 40H7Z" fill="#f4f4f4" stroke="#333" stroke-width="1.5"/><path d="M1 8H33V13H1Z" fill="#eee" stroke="#333"/><path d="M9 8Q9 1 17 1Q25 1 25 8" fill="none" stroke="#333" stroke-width="3"/><path d="M12 16V36M17 16V36M22 16V36" stroke="#888" stroke-width="1.5"/></svg>
<script>
document.querySelectorAll('.fw').forEach(function(e){var r=document.createRange();r.selectNodeContents(e);var w=r.getBoundingClientRect().width;var t=parseFloat(e.style.width);if(w>0&&t>0){e.style.transformOrigin='0 0';e.style.transform='scaleX('+(t/w)+')';}});
</script>
</body></html>
